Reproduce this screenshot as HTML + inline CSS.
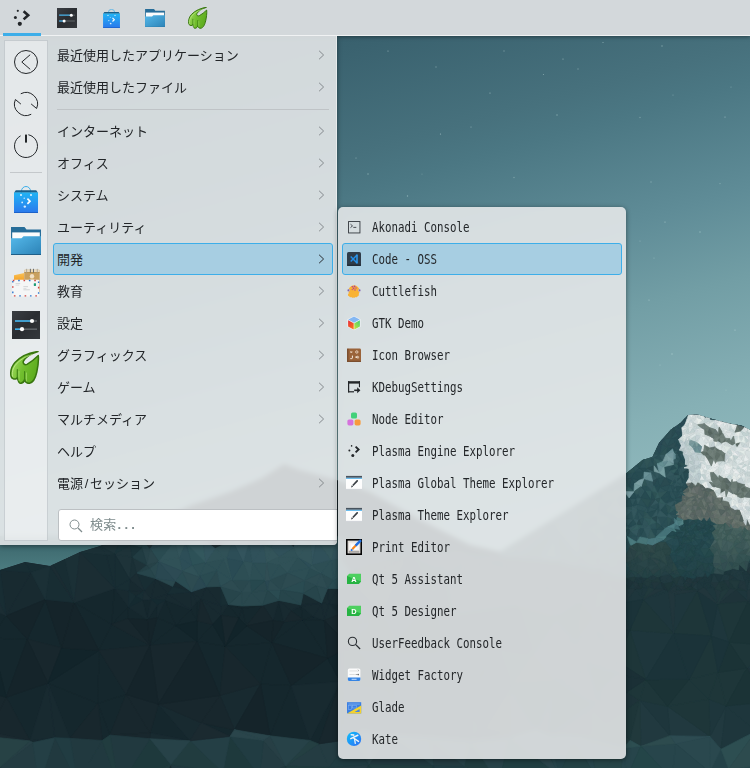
<!DOCTYPE html>
<html lang="ja">
<head>
<meta charset="utf-8">
<title>Plasma menu</title>
<style>
html,body{margin:0;padding:0;}
body{width:750px;height:768px;overflow:hidden;position:relative;background:#1c363c;
 font-family:"Liberation Sans","Noto Sans CJK JP",sans-serif;color:#232629;}
#wall{position:absolute;left:0;top:0;width:750px;height:768px;}
#panel{position:absolute;left:0;top:0;width:750px;height:35px;background:#d3d8db;border-bottom:1px solid #f0f2f3;box-shadow:0 1px 4px rgba(0,0,0,.4);}
#panel .ul{position:absolute;left:3px;top:33px;width:38px;height:3px;background:#3daee9;}
#panel svg{position:absolute;}
#menuwrap{position:absolute;left:0;top:36px;width:370px;height:540px;overflow:hidden;}
#menu{position:absolute;left:0;top:0;width:337px;height:509px;border-radius:0 0 4px 0;
 background:rgba(230,232,234,.89);-webkit-backdrop-filter:blur(2.5px);backdrop-filter:blur(2.5px);
 box-shadow:0 1px 5px rgba(0,0,0,.45),inset -1px 0 0 rgba(255,255,255,.45);overflow:hidden;}
#side{position:absolute;left:4px;top:4px;width:42px;height:499px;background:rgba(255,255,255,.4);border:1px solid rgba(120,130,136,.28);}
#side svg{position:absolute;}
#side .sep{position:absolute;left:5px;top:131px;width:32px;height:1px;background:#c4c8cb;}
.it{position:absolute;left:53px;width:280px;height:32px;box-sizing:border-box;font-size:13px;line-height:34px;padding-left:4px;white-space:nowrap;}
.it.sel{background:#a7cee2;border:1px solid #3daee9;border-radius:3px;padding-left:3px;line-height:32px;}
.it svg{position:absolute;right:8px;top:11px;}
.it.sel svg{right:7px;top:10px;}
#menu .hsep{position:absolute;left:57px;top:73px;width:272px;height:1px;background:#bfc3c6;}
#search{position:absolute;left:58px;top:473px;width:290px;height:32px;background:#fff;border:1px solid #bcc0c3;border-radius:3px;box-sizing:border-box;font-size:13px;line-height:30px;color:#7f8c8d;}
#search span{position:absolute;left:31px;top:0;letter-spacing:.3px}
#search i{font-style:normal;letter-spacing:3.2px;margin-left:1px;font-weight:700}
.sl{display:inline-block;width:7px;text-align:center}
#search svg{position:absolute;left:9px;top:8px;}
#sub{position:absolute;left:338px;top:207px;width:288px;height:552px;border-radius:5px;
 background:rgba(230,232,234,.89);-webkit-backdrop-filter:blur(2.5px);backdrop-filter:blur(2.5px);
 box-shadow:0 1px 5px rgba(0,0,0,.45);}
.si{position:absolute;left:4px;width:280px;height:32px;box-sizing:border-box;}
.si.sel{background:#a7cee2;border:1px solid #3daee9;border-radius:3px;}
.si .t{position:absolute;left:30px;top:0;line-height:33px;font-family:"DejaVu Sans Mono","Liberation Mono",monospace;font-size:13.5px;white-space:nowrap;transform:scaleX(.8);transform-origin:0 50%;}
.si.sel .t{left:29px;top:-1px;}
.si svg{position:absolute;left:4px;top:8px;}
.si.sel svg{left:3px;top:7px;}
</style>
</head>
<body>
<svg id="wall" viewBox="0 0 750 768">
<defs>
<linearGradient id="sky" gradientUnits="userSpaceOnUse" x1="0" y1="0" x2="189" y2="672">
<stop offset="0" stop-color="#2d525f"/><stop offset=".2014" stop-color="#3a626f"/><stop offset=".3529" stop-color="#47717d"/><stop offset=".4" stop-color="#4b7783"/><stop offset=".5514" stop-color="#5f8c97"/><stop offset=".67" stop-color="#729ea5"/><stop offset=".787" stop-color="#81abb1"/><stop offset=".8286" stop-color="#86b0b5"/><stop offset="1" stop-color="#96bec1"/>
</linearGradient>
<linearGradient id="low" x1="0" y1="0" x2="0" y2="1">
<stop offset="0" stop-color="#21404600"/><stop offset="1" stop-color="#152b31"/>
</linearGradient>
</defs>
<rect width="750" height="768" fill="url(#sky)"/>
<linearGradient id="lsk" gradientUnits="userSpaceOnUse" x1="0" y1="540" x2="0" y2="570"><stop offset="0" stop-color="#3b666c"/><stop offset="1" stop-color="#4c7c80"/></linearGradient>
<path d="M0 536H130L112 540 100 546 80 552 50 566 25 562 0 570z" fill="url(#lsk)"/>
<linearGradient id="dm" gradientUnits="userSpaceOnUse" x1="0" y1="470" x2="0" y2="560"><stop offset="0" stop-color="#56797e"/><stop offset="1" stop-color="#2a4a50"/></linearGradient>
<path d="M60 575L100 546 150 525 190 506 230 492 262 478 284 464 300 470 337 480 370 492 420 520 470 545 500 552V580z" fill="url(#dm)"/>
<path d="M236 490L262 478 284 464 300 470 337 480 370 492 398 508 372 503 352 496 330 499 312 490 294 495 276 487 260 497 244 494z" fill="#e9f0f1"/>
<path d="M276 487L284 464 300 470 312 490 294 495z" fill="#fbfcfc"/>
<path d="M190 506L230 492 244 494 260 497 240 512 210 520z" fill="#3f6267"/>
<path d="M330 499L352 496 372 503 398 508 420 520 380 524 350 515z" fill="#7d9ba0"/>
<path d="M500 552L560 515 600 490 626 473.5V585H500z" fill="#2d5056"/>
<clipPath id="sil"><path d="M-60.0 570.0 0.0 570.0 25.0 562.0 50.0 566.0 80.0 552.0 100.0 546.0 150.0 525.0 190.0 506.0 230.0 492.0 262.0 478.0 284.0 464.0 300.0 470.0 337.0 480.0 370.0 492.0 420.0 520.0 470.0 545.0 500.0 552.0 560.0 515.0 600.0 490.0 618.0 480.0 626.0 473.5 642.5 460.0 652.4 457.0 659.0 443.0 670.6 429.7 680.5 423.0 688.0 415.0 697.0 414.5 718.5 420.7 731.8 424.0 741.7 425.6 752.0 431.0 810.0 431.0 810.0 800.0 -60.0 800.0z"/></clipPath>
<g clip-path="url(#sil)" stroke-width=".7" stroke-linejoin="round">
<rect x="0" y="400" width="750" height="368" fill="#18292f"/>
<path fill="#15272d" stroke="#15272d" d="M-37.4 686.6L-57.8 727.9 -66.6 640.4zM-57.8 727.9L-37.4 686.6 -10.3 732zM468.7 700L437.4 650 495.6 647zM-8.7 638.2L-37.4 686.6 -66.6 640.4zM6.3 697.3L-8.7 638.2 27.3 639.2zM30 740.9L6.3 697.3 47.9 683.1zM45.3 599.6L61.5 647.9 27.3 639.2zM-31.3 599.6L-8.7 638.2 -66.6 640.4zM434.4 601.5L451.7 616.3 437.4 650zM434.4 601.5L394.3 648.8 382.3 619.1zM-8.7 638.2L6.2 615.8 27.3 639.2zM-31.3 599.6L6.2 615.8 -8.7 638.2zM99 650.5L74.3 602.5 111.7 624.4zM149.9 645.4L99 650.5 111.7 624.4zM47.9 683.1L99 650.5 97.9 703.5zM74.3 602.5L114.5 588.5 111.7 624.4zM197 641.4L212.7 624.4 225.3 646.3zM220 695.4L197 641.4 225.3 646.3zM197 641.4L149.9 645.4 175.8 625.5zM468.7 700L413.2 724.3 420.6 682zM390 691L394.3 648.8 420.6 682zM413.2 724.3L390 691 420.6 682zM355.9 623L349.7 609.8 382.3 619.1zM390 691L349.1 646.7 394.3 648.8zM349.1 646.7L355.9 623 382.3 619.1zM361.5 729.9L390 691 390 735.2zM110 735L102.2 740.4 97.9 703.5zM70 738.3L47.9 683.1 97.9 703.5zM230 736.4L201 722.8 234.4 729.7zM221 615.4L228.4 604.6 238.8 617.9zM197 641.4L197.5 621 212.7 624.4zM190.5 609.7L197.5 621 175.8 625.5zM246.6 625.8L271.9 642.6 225.3 646.3zM283.9 622L302.6 619.6 271.9 642.6zM509.3 685.5L468.7 700 495.6 647zM324.4 620.3L302.6 619.6 313.5 616.7zM270 735.8L291.2 685.6 310 740.4zM126.1 694.4L110 735 97.9 703.5zM99 650.5L126.1 694.4 97.9 703.5zM157.6 604.5L157 617.8 147.4 619.7zM149.9 645.4L157 617.8 175.8 625.5zM196.5 602L197.5 621 190.5 609.7zM197.5 621L196.5 602 201 599.2zM242 608.6L246.6 625.8 238.8 617.9zM228.4 604.6L242 608.6 238.8 617.9zM242 608.6L228.4 604.6 242.3 606zM262.7 605.2L242 608.6 242.3 606zM242 608.6L262.7 605.2 246.6 625.8zM339.3 614.4L349.7 609.8 355.9 623zM339.3 614.4L328.8 603.8 340.6 604.8zM324.4 620.3L327.6 658.3 302.6 619.6zM302.6 619.6L327.6 658.3 271.9 642.6zM291.2 685.6L327.6 658.3 340.4 681.7zM270 735.8L260.6 684.1 291.2 685.6zM291.2 685.6L260.6 684.1 271.9 642.6zM271.9 642.6L260.6 684.1 225.3 646.3zM150.1 732.9L158.4 704.3 190 740.8zM128 618.6L128.6 607.2 147.4 619.7zM114.5 588.5L128.6 607.2 111.7 624.4zM128.6 607.2L128 618.6 111.7 624.4zM165.2 600.2L190.5 609.7 175.8 625.5zM157 617.8L165.2 600.2 175.8 625.5zM318.6 743.9L310 740.4 340.4 681.7zM142.4 600L151 599.3 147.4 619.7zM291.2 610.9L301 606.2 302.6 619.6zM302.6 619.6L301 606.2 313.5 616.7zM349.7 609.8L352.4 586.8 382.3 619.1zM278.8 600.4L283.9 622 273.1 620.4z"/>
<path fill="#243c42" stroke="#243c42" d="M-57.8 727.9L-46.4 787.8 -60 827.9zM-46.4 787.8L-10 736.7 -0.4 767.4zM32.9 742.5L38.9 786.1 -0.4 767.4zM433.3 765.7L431.7 739.9 464.2 766.4zM38.9 786.1L77.6 783 74.3 827.4zM349 810.7L329.2 767.5 368.7 764.6zM263.3 740.4L285.7 766.1 259.8 776.6zM318.6 743.9L329.2 767.5 285.7 766.1zM329.2 767.5L318.6 743.9 350 739.4z"/>
<path fill="#30545a" stroke="#30545a" d="M818.8 597.1L782.7 410.2 782.2 403.9zM506.6 446.3L515.7 477.2 496.5 486.6zM581.1 528L555.5 529.5 571.3 475.3zM581.1 528L597.7 499.7 597.4 509.1zM581.1 528L579.3 558.4 555.5 529.5zM661.3 525.8L667.9 526.8 664.4 529.2zM761.8 539.5L759 534.4 764.5 535.3zM597.4 471.9L595.3 484.6 571.3 475.3zM605 490.9L602 496.9 601.6 492.2zM625 485.3L618.2 480.5 625.8 479.2zM598.2 517.1L602.2 525.5 596.1 522.4zM646.9 512.9L644.2 511.6 647.4 507.5zM632.5 506.3L637.9 504.2 637.2 509.8zM639.4 528.6L641.9 524.9 644 529zM641.9 524.9L649.5 524.8 644 529zM766.8 538.2L766.5 537 769.4 538.8zM777.9 537L782.2 534.4 781.2 539.8zM754.8 511.8L758.8 515.9 752.7 515.8zM750.9 510.6L754.2 506.6 754.8 511.8zM775.8 532.3L771.7 529.8 775.8 530.4zM776.5 505.4L781.2 511.7 775.5 511zM783.3 460.2L781.2 456.8 785.7 455.2zM600.1 480.3L603.9 487.3 595.3 484.6zM615 498.7L614.1 503.5 610.1 500.6zM618.6 474.1L614.9 465.6 620.5 464.5zM624.6 491.5L625 485.3 628.4 486.9zM645.2 491.1L637.6 494.2 641.1 486.4zM637.6 494.2L645.2 491.1 640.8 498.1zM614.6 457.3L618.6 453.2 623.1 461.1zM610.1 460.2L608.2 466.4 601 459zM641.9 524.9L643.8 517.7 649.5 524.8zM761.8 539.5L756.6 538.2 759 534.4zM777.9 537L778.1 530.6 782.2 534.4zM778.1 530.6L780.6 525.7 782.8 528.3zM758.8 515.9L756.5 520.4 752.7 515.8zM781.2 511.7L776.5 515.9 775.5 511zM769.6 533.8L769.7 529.1 771.7 529.8zM781.2 511.7L781.7 505.3 785.2 509.6zM765.7 484.9L771.2 482.3 767.7 486.8zM626.4 451.3L632.1 455.5 630.7 458.8zM653.9 458.5L652.1 453.5 659.6 454.5zM653.9 458.5L650.6 458.6 652.1 453.5zM758.2 482.3L754.3 480.2 757.8 477.2zM600.1 480.3L605.2 476.8 603.9 487.3zM615.2 511L614.1 503.5 618.1 502.8zM614.1 503.5L615.2 511 608.1 506.8zM623 536.5L615.4 533.2 619.7 530.2zM633.8 519.3L627.5 526.6 624 518.6zM600.6 544.9L598 539.4 604.3 538zM679.7 514.8L677 517.3 676.1 514.5zM674.3 518.4L674.9 523.6 671.5 520.1zM637 536.1L640 536.9 636.6 542.2zM760.9 510L761.9 516.4 758.8 515.9zM758.2 482.3L758.8 486.4 755 487zM779.4 501.9L781.7 505.3 776.5 505.4zM778.2 451L780.2 451.4 781.2 456.8zM751.8 481.7L754.3 480.2 755 487zM615.2 511L609.2 513.1 608.1 506.8zM623 536.5L628.3 528.6 627.4 536.5zM621.3 525.8L627.5 526.6 619.7 530.2zM677.1 500.2L675.1 500.7 675.8 498.1zM682.3 501.3L677.1 500.2 682.2 497.9zM754.2 506.6L757.9 506.1 754.8 511.8zM757.9 506.1L760.9 510 754.8 511.8zM766.3 505.3L771.8 505.6 769.1 510.3zM757.2 497.7L763.7 495.8 760.5 500.8zM771.6 492.1L774.2 493.4 773 496.5zM757.8 477.2L761.1 473.3 763.5 476.9zM775 455.2L772 455.2 772 451.6zM778.3 466.5L776.4 464.1 783.3 460.2zM764.6 466.5L763.4 470.9 758 469.3zM760.9 455.7L763.5 450.3 764.3 456.3zM758.5 449.7L760.9 455.7 756.9 454.2zM620.8 516.2L615.2 511 620.9 511.5zM682.3 495.9L679.6 493.2 683.2 493.3zM669.8 491.9L673 491.3 670.2 497zM675.3 486.4L677.5 491.7 673 491.3zM758.6 533.6L755.7 536.1 757.8 532.5zM759 534.4L758.6 533.6 764.5 535.3zM766.6 502.8L766.3 505.3 760.5 500.8zM766.3 505.3L764.7 507.6 760.5 500.8zM757.9 506.1L764.7 507.6 760.9 510zM769.3 519.6L766.5 518.5 766.4 517zM755.2 491L751.3 489.1 755 487zM774.2 469L773.5 474.6 769.3 470.9zM621.3 525.8L621.1 520.4 624 518.6zM683.2 454.2L680.9 459.2 679.6 453.1zM674.6 474.9L676.9 478.9 675 478.8zM674.6 474.9L672.1 481.3 665.3 477.2zM674 472.9L674.6 474.9 669.9 471.1zM761.9 516.4L765.3 510.5 766.4 517zM684.2 467.8L681.8 466.5 685.4 464.2zM684.2 467.8L685.4 464.2 688.6 466zM680.9 459.2L675.4 458.5 677.8 453.9zM672.6 483.1L674 486 670.3 484.6zM683.4 472.3L684.2 467.8 688.9 468.5zM673.5 463.5L673.5 464.5 668.1 460.5zM676.9 482L681.9 486.6 675.3 486.4zM680.9 468.7L677.3 468.8 679.6 467.3zM681.8 466.5L680.9 468.7 679.6 467.3zM680.7 474.7L680.9 468.7 683.4 472.3zM680.7 474.7L685 479 682.6 479.1zM680.7 474.7L683.4 472.3 685 479z"/>
<path fill="#1e393c" stroke="#1e393c" d="M790.5 735L809.6 709.7 827.8 730.4zM222.9 772.4L230 736.4 259.8 776.6zM170.8 764.5L118.8 787.6 150 738.7zM412 813.4L349 810.7 368.7 764.6z"/>
<path fill="#182a30" stroke="#182a30" d="M437.4 650L468.7 700 420.6 682zM437.4 650L451.7 616.3 495.6 647zM-10 736.7L-57.8 727.9 -10.3 732zM451.7 616.3L516.8 607 495.6 647zM410 554.2L434.4 601.5 382.3 619.1zM470 741L430 737.5 468.7 700zM31.1 572.6L6.2 615.8 0 570zM6.2 615.8L31.1 572.6 45.3 599.6zM516.8 607L530.8 652.4 495.6 647zM390 735.2L413.2 724.3 430 737.5zM430 737.5L413.2 724.3 468.7 700zM390 691L361.5 729.9 340.4 681.7zM310 740.4L291.2 685.6 340.4 681.7zM158.4 704.3L201 722.8 190 740.8zM201 599.2L221 615.4 212.7 624.4zM201 599.2L191.5 591.8 206.1 587zM434.4 601.5L443.8 573.5 451.7 616.3zM481.7 730.5L510 737.5 470 741zM509.3 685.5L481.7 730.5 468.7 700zM70 738.3L54.9 737.7 47.9 683.1zM54.9 737.7L30 740.9 47.9 683.1zM30 740.9L54.9 737.7 32.9 742.5zM167.7 594.2L191.5 591.8 190.5 609.7zM220.5 605.8L228.4 604.6 221 615.4zM201 599.2L220.5 605.8 221 615.4zM220.6 586.4L220.5 605.8 206.1 587zM220.5 605.8L201 599.2 206.1 587zM191.5 591.8L196.5 602 190.5 609.7zM201 599.2L196.5 602 191.5 591.8zM349.7 609.8L339.3 614.4 340.6 604.8zM339.3 614.4L324.4 620.3 328.8 603.8zM220 695.4L260.6 684.1 234.4 729.7zM150 738.7L150.1 732.9 190 740.8zM129.1 590.8L128.6 607.2 114.5 588.5zM151 599.3L157.6 604.5 147.4 619.7zM165.2 600.2L167.7 594.2 190.5 609.7zM165.2 600.2L157 617.8 157.6 604.5zM165.2 600.2L151 599.3 167.7 594.2zM191.5 591.8L172.7 586.5 175.4 580.9zM128.6 607.2L142.4 600 147.4 619.7zM144.2 590.9L129.1 590.8 129.7 579.3zM129.1 590.8L144.2 590.9 135.8 596.5zM328.8 603.8L337.6 588.7 340.6 604.8zM352.4 586.8L349.7 609.8 340.6 604.8zM337.6 588.7L352.4 586.8 340.6 604.8zM155.8 578.6L172.7 586.5 167.7 594.2zM151 599.3L155.8 578.6 167.7 594.2zM144.2 590.9L155.8 578.6 151 599.3zM262.7 605.2L278.8 600.4 273.1 620.4zM278.8 600.4L291.2 610.9 283.9 622zM301 606.2L321.6 603.1 313.5 616.7zM321.6 603.1L324.4 620.3 313.5 616.7zM324.4 620.3L321.6 603.1 328.8 603.8zM300.8 604.9L301 606.2 291.2 610.9zM278.8 600.4L300.8 604.9 291.2 610.9zM321.6 603.1L300.8 604.9 303.3 593.4zM300.8 604.9L321.6 603.1 301 606.2zM327.6 588.4L337.6 588.7 328.8 603.8zM321.6 603.1L327.6 588.4 328.8 603.8z"/>
<path fill="#18272d" stroke="#18272d" d="M-37.4 686.6L6.3 697.3 -10.3 732zM6.3 697.3L30 740.9 -10.3 732zM61.5 647.9L47.9 683.1 27.3 639.2zM394.3 648.8L437.4 650 420.6 682zM221 615.4L238.8 617.9 225.3 646.3zM390 691L413.2 724.3 390 735.2zM102.2 740.4L70 738.3 97.9 703.5zM197 641.4L158.4 704.3 149.9 645.4zM201 722.8L220 695.4 234.4 729.7zM201 722.8L158.4 704.3 220 695.4zM128 618.6L149.9 645.4 111.7 624.4zM197.5 621L201 599.2 212.7 624.4zM361.5 729.9L350 739.4 340.4 681.7zM126.1 694.4L99 650.5 149.9 645.4zM246.6 625.8L262.7 605.2 273.1 620.4zM324.4 620.3L339.3 614.4 349.1 646.7zM260.6 684.1L220 695.4 225.3 646.3zM150.1 732.9L126.1 694.4 158.4 704.3zM110 735L150.1 732.9 150 738.7zM126.1 694.4L150.1 732.9 110 735zM283.9 622L291.2 610.9 302.6 619.6zM350 739.4L318.6 743.9 340.4 681.7z"/>
<path fill="#12242a" stroke="#12242a" d="M-8.7 638.2L6.3 697.3 -37.4 686.6zM394.3 648.8L434.4 601.5 437.4 650zM61.5 647.9L99 650.5 47.9 683.1zM212.7 624.4L221 615.4 225.3 646.3zM197.5 621L197 641.4 175.8 625.5zM238.8 617.9L246.6 625.8 225.3 646.3zM327.6 658.3L349.1 646.7 340.4 681.7z"/>
<path fill="#15242a" stroke="#15242a" d="M47.9 683.1L6.3 697.3 27.3 639.2zM61.5 647.9L45.3 599.6 74.3 602.5zM6.2 615.8L45.3 599.6 27.3 639.2zM99 650.5L61.5 647.9 74.3 602.5zM349.1 646.7L390 691 340.4 681.7zM394.3 648.8L349.1 646.7 382.3 619.1zM158.4 704.3L197 641.4 220 695.4zM128 618.6L147.4 619.7 149.9 645.4zM246.6 625.8L273.1 620.4 271.9 642.6zM273.1 620.4L283.9 622 271.9 642.6zM158.4 704.3L126.1 694.4 149.9 645.4zM147.4 619.7L157 617.8 149.9 645.4zM349.1 646.7L339.3 614.4 355.9 623zM327.6 658.3L291.2 685.6 271.9 642.6zM327.6 658.3L324.4 620.3 349.1 646.7zM260.6 684.1L270 735.8 234.4 729.7z"/>
<path fill="#21393f" stroke="#21393f" d="M-10.9 820.8L-46.4 787.8 -0.4 767.4zM226.4 822.1L222.9 772.4 259.8 776.6zM390 735.2L433.3 765.7 368.7 764.6zM790.7 565L796.6 562 818.8 597.1zM285.7 766.1L271.8 824.9 259.8 776.6zM118.8 787.6L110 735 150 738.7zM38.9 786.1L20.4 826.4 -0.4 767.4zM191.1 826.4L170.8 764.5 222.9 772.4zM676.2 585.3L680.7 575.5 684.1 583.2zM748.8 581.6L756 587.5 746.9 590.7zM721 749.2L710 736.4 726.1 706.1zM112.5 807.9L77.6 783 118.8 787.6zM118.8 787.6L77.6 783 102.2 740.4zM77.6 783L70 738.3 102.2 740.4zM54.9 737.7L77.6 783 38.9 786.1zM660.5 582.3L660.3 576 664 584zM767.7 764.9L755.7 731.2 790.5 735zM670.1 574.1L673.3 581.7 664 584zM660.3 576L670.1 574.1 664 584zM755.1 577.7L759.8 569.2 762.4 575.4zM749.9 574.1L750.6 570.3 755.1 577.7zM685.7 580.5L690.8 584.6 684.1 583.2zM756 587.5L763.2 586.4 747.9 601.5zM782.8 569.3L775 568.1 777.9 561.6zM769.8 580.7L772.5 577.8 776.4 584zM670 735.7L640.8 746.3 640 700.4zM670 735.7L667.5 706.3 710 736.4zM673.3 581.7L674 577.8 676.2 585.3zM729.1 580.5L724.4 580.7 729.9 574.8zM695.8 576.1L703.3 577.2 695.4 578.3zM734 577.3L742.5 573.3 739.6 580.9zM739.6 580.9L742.5 573.3 744.7 581zM759.9 581.5L763.2 586.4 756 587.5zM759.9 581.5L755.1 577.7 762.4 575.4zM652.9 574.6L658 577.5 651.5 581.3zM647.5 577.8L652.9 574.6 651.5 581.3zM765.1 568.9L769.9 567.5 769.5 576.4zM761.3 562L765.1 568.9 759.8 569.2zM684 587L676.2 585.3 684.1 583.2zM715.2 588.8L710.8 586.3 710.5 582.5zM692.1 587.5L697.3 581.6 697.6 590.7zM746.3 570.9L748.5 561.6 752 565zM759.9 581.5L763.2 582.4 763.2 586.4zM763.2 586.4L763.2 582.4 766.4 587zM769.5 576.4L763.2 582.4 762.4 575.4zM621.7 580.8L623.1 576.9 623.6 581zM754.8 564.9L759.8 569.2 750.6 570.3zM705 571.1L707.5 577.3 703.3 577.2zM713.8 573.1L719.2 582.5 710.5 582.5zM719.2 582.5L723.2 574.2 724.4 580.7zM724.4 580.7L723.2 574.2 729.9 574.8zM680.7 575.5L683.6 576.5 684.1 583.2zM738.5 569.9L746.3 570.9 742.5 573.3zM738.5 569.9L742.5 573.3 734 577.3zM692.9 582.3L690 578 695.4 578.3zM731.3 569.3L734 577.3 729.9 574.8zM731.3 569.3L738.5 569.9 734 577.3zM738.5 569.9L731.3 569.3 732.1 568.1z"/>
<path fill="#2d5157" stroke="#2d5157" d="M552.3 439.2L506.6 446.3 474.3 430.8zM571.3 475.3L515.7 477.2 552.3 439.2zM555.5 529.5L515.7 477.2 571.3 475.3zM597.7 499.7L581.1 528 571.3 475.3zM520 558L500 556 500.4 523.4zM598.1 446.8L582.6 439.8 599.6 440.4zM767.4 550.8L765.7 557.2 762.7 547.5zM783 544.5L781.2 539.8 784.5 539.2zM781.2 539.8L783 544.5 776.8 541.7zM651.4 439.6L644.7 439.6 640.9 438.1zM654.7 444.7L648.8 448.1 651.4 439.6zM617.5 448.6L609.2 447.9 614 438.3zM605 490.9L603.9 487.3 609.5 485.5zM555.5 529.5L560 562 540 560zM596.1 522.4L598 539.4 581.1 528zM655.5 537.4L656.6 529.2 664.4 529.2zM773.2 549.2L777.7 554 768.6 555.8zM658.3 441.3L654.7 444.7 651.4 439.6zM676.4 405.4L474.3 430.8 348.9 428zM676.4 405.4L552.3 439.2 474.3 430.8zM676.4 405.4L582.6 439.8 552.3 439.2zM676.4 405.4L614 438.3 582.6 439.8zM738.8 413.2L743.1 419.4 736.9 419.2zM604.4 453.2L609.2 447.9 613.8 451.6zM610.1 460.2L604.4 453.2 613.8 451.6zM628.8 439.4L626.4 438.5 640.9 438.1zM623.7 448.5L617.8 437.8 626.4 438.5zM676.4 405.4L617.8 437.8 614 438.3zM617.8 437.8L676.4 405.4 672 411zM617.8 483.6L613.5 492.3 609.5 485.5zM613.5 492.3L617.8 483.6 621 493.1zM598.2 517.1L581.1 528 597.4 509.1zM604.3 538L609 536.2 607.6 546.3zM602.2 525.5L601.8 531.4 596.1 522.4zM601.8 531.4L598 539.4 596.1 522.4zM646.9 512.9L650 506.4 657.2 509.7zM656.6 529.2L649.5 524.8 656.2 522.5zM644.2 511.6L637.9 504.2 647.4 507.5zM637.9 504.2L644.2 511.6 637.2 509.8zM632.5 506.3L631.5 510.3 623.8 506.2zM764.7 542.8L766.8 538.2 769.4 538.8zM773.8 534.2L777.9 537 775.1 539.9zM774.1 516.5L769.1 510.3 775.5 511zM771.7 529.8L775.8 532.3 773.8 534.2zM631.9 463.8L639.6 468.1 634.5 472zM639.6 468.1L644.1 459.5 646.8 468.4zM673.3 426.8L664 439.2 651.4 439.6zM758 469.3L756.3 474 753.7 469.3zM780.8 410.7L775.6 414.4 773.5 409.1zM780.8 410.7L773.5 409.1 777.9 403.6zM783 414.7L780.8 410.7 782.7 410.2zM782.7 410.2L780.8 410.7 782.2 403.9zM600.8 447.1L605.3 441.9 609.2 447.9zM633.9 491.8L637.6 494.2 636.5 498.7zM601.2 465.8L608.2 466.4 602.5 470.2zM643.8 517.7L638.7 520.1 637.2 509.8zM643.9 478.7L639.3 480.2 644.1 472.1zM676.5 510.6L676.1 514.5 674.5 509.2zM676.1 514.5L674.3 518.4 668.3 513.7zM667.4 517L674.3 518.4 671.5 520.1zM674.2 538.3L665.1 542.1 666.4 536.3zM650.8 529.4L649.5 524.8 656.6 529.2zM756.5 520.4L751.8 519.5 752.7 515.8zM753.1 500.1L754.2 506.6 750.5 506.9zM783.5 516.2L776.5 515.9 781.2 511.7zM776.7 526L780.6 520.3 780.6 525.7zM766.5 537L769.6 533.8 769.4 538.8zM761.4 518.9L756.5 520.4 758.8 515.9zM782.3 495.6L777.7 495.8 780.7 493.1zM771.2 482.3L773.6 487.9 767.7 486.8zM644 452.8L640.5 446.8 648.8 448.1zM640.5 446.8L644 452.8 638.1 454.4zM671 438.3L667.3 447.1 664 439.2zM678.6 439.5L679.9 442.7 676 442.1zM672.5 417.3L673.3 426.8 651.4 439.6zM672 411L672.5 417.3 640.9 438.1zM770.6 411.2L768.5 405.1 773.5 409.1zM775.6 414.4L770.6 411.2 773.5 409.1zM768.5 405.1L774.3 404.2 773.5 409.1zM745.2 412.9L748.4 408.3 751.6 409.8zM763.3 412.9L765 409.3 768.1 412.7zM754.7 403.7L756.1 409.2 751.6 409.8zM759.7 407.9L756.1 409.2 758.2 403.8zM263.7 545L279.5 533 270.9 547.8zM605.2 476.8L600.1 480.3 597.4 471.9zM632.5 506.3L629.1 497.9 636.5 498.7zM615.4 533.2L623 536.5 614.1 539.1zM611 524.5L608.2 516.3 611.2 516.4zM602.2 525.5L611 524.5 605.8 530.2zM597.2 551.3L602.1 549.3 598.8 558.6zM602.1 549.3L600.6 544.9 607.6 546.3zM674 448L673.4 452.1 672.6 448.9zM675.1 500.7L670.2 497 675.8 498.1zM670.2 497L673 491.3 675.8 498.1zM683.1 491.6L688 492.1 683.2 493.3zM677 517.3L674.3 518.4 676.1 514.5zM757.3 544.5L756.6 538.2 761.8 539.5zM757.3 544.5L761.8 539.5 764.7 542.8zM761.9 516.4L761.4 518.9 758.8 515.9zM780.5 470.2L778.2 470.8 778.3 466.5zM775.5 436.8L777.3 442.7 774.1 443zM769.9 445.5L774.1 446.3 772 451.6zM774.1 446.3L778.2 451 772 451.6zM765.7 447.4L763.5 450.3 762.7 446zM633.6 448.3L628.2 445.7 632.7 441.6zM679.6 453.1L679.5 450.1 683.3 451.4zM675.7 431.8L673 438.6 671 438.3zM677.5 411.3L679 406.2 683.5 410.2zM750.1 514.3L754.8 511.8 752.7 515.8zM783.8 429L784.7 447.9 783.4 437.8zM780.2 418.6L783.6 420.1 783.4 422.6zM783.8 429L783.6 420.1 785.7 455.2zM764.8 406L765 409.3 759.7 407.9zM751.6 463.5L756.2 463.4 753.7 469.3zM703.7 414.8L702.8 408.2 705.8 410.8zM743.1 419.4L740.6 421.7 736.9 419.2zM734.2 418.8L728.3 419.9 732.6 415.2zM734.2 418.8L736.8 413.2 736.9 419.2zM185.6 542.4L205.6 562.5 192.2 565.6zM609.2 513.1L615.2 511 611.2 516.4zM618.2 480.5L622.5 474.2 625.8 479.2zM657.4 478.5L659.3 472.9 665.3 477.2zM682.2 497.9L677.1 500.2 675.8 498.1zM760.5 500.8L757.9 506.1 756.1 500.2zM766.3 524L772 524.7 769.7 529.1zM769.7 529.1L772 524.7 771.7 529.8zM755.2 491L758.8 486.4 760.8 492zM760.8 492L761.8 489.4 765 491.5zM763.7 495.8L757.2 497.7 760.8 492zM777.7 495.8L776.5 500.4 773 496.5zM773.6 487.9L771.6 492.1 767.7 486.8zM775.6 483.1L771.1 480 776.8 478.9zM784.7 447.9L783.2 441.1 783.4 437.8zM783.2 441.1L779.7 437.8 783.4 437.8zM778.6 447.3L780.2 451.4 778.2 451zM783.2 441.1L778.6 447.3 777.3 442.7zM774.2 469L776.4 464.1 778.3 466.5zM766.5 449.7L765.7 447.4 769.9 445.5zM677.3 445.2L679.9 442.7 681.4 445.5zM676.9 450.8L677.3 445.2 679.5 450.1zM677.7 428.3L675.7 431.8 673.3 426.8zM675.7 431.8L678.6 435.9 673 438.6zM678.6 439.5L678.6 435.9 682.6 435.8zM678.6 435.9L682.3 431.5 682.6 435.8zM677.7 428.3L679.9 423.8 681.8 427.7zM678.2 417.2L679.9 423.8 677.6 423.3zM743.6 411.2L748.4 408.3 745.2 412.9zM743.6 411.2L744.2 405.5 748.4 408.3zM780.2 418.6L774.4 417.1 775.6 414.4zM776.9 423L780.2 418.6 783.4 422.6zM744.2 423.9L751.1 422.2 751.3 426.4zM753.7 412.7L752.1 420 748.2 415.9zM753.5 458.6L756.9 454.2 757.3 458.7zM751.6 463.5L753.5 458.6 756.2 463.4zM760 443.2L754.1 441.7 755.1 438.3zM730.5 411.2L732.6 415.2 725.7 414.8zM693.6 414.6L688.8 413.7 691.1 411.3zM712.6 406.1L715.6 410.3 709.7 410.4zM713 414.6L717.6 413.9 715.7 420.4zM717.6 413.9L720.6 419.8 715.7 420.4zM720.6 419.8L717.6 413.9 721.1 414.3zM721.1 414.3L717.6 413.9 718.5 410.3zM717.6 413.9L715.6 410.3 718.5 410.3zM715.6 410.3L717.6 413.9 713 414.6zM615.2 511L620.8 516.2 611.2 516.4zM666.5 491.5L657.4 492.8 660 486.9zM654.2 471.3L657.4 478.5 650.7 473zM663.9 466.7L669.9 471.1 665.3 477.2zM676.6 502.7L677.1 500.2 679.2 502.8zM679.6 493.2L682.3 495.9 675.8 498.1zM758.6 533.6L762.3 528.6 763.1 528.9zM755.7 536.1L752.6 538.9 754.2 532.7zM753.3 528L752.8 525.6 756.7 528.7zM763.7 495.8L766.6 502.8 760.5 500.8zM774.1 516.5L769.3 519.6 766.4 517zM751.3 489.1L751.8 481.7 755 487zM773.5 474.6L778.2 470.8 778.4 475.4zM764.6 466.5L769.6 461.9 771 466.3zM776.4 464.1L769.6 461.9 771.4 458.5zM679.8 414.6L677.5 411.3 683.5 410.2zM674.6 415.8L679.8 414.6 678.2 417.2zM688.8 413.7L688.1 411.3 691.1 411.3zM688.1 411.3L688.8 413.7 685.1 414.2zM739.6 408.3L743.6 411.2 738.8 413.2zM751.1 422.2L755.3 424.7 751.3 426.4zM770.6 411.2L773.4 415.7 768.1 412.7zM773.4 415.7L769 417.8 768.1 412.7zM761.3 426.9L757.1 427.6 757.4 424.8zM757.1 427.6L761.3 426.9 760.4 432.2zM761.3 426.9L764.9 431.5 760.4 432.2zM764.9 431.5L761.3 426.9 764 426.6zM763.7 424.6L761.3 426.9 757.4 424.8zM764 426.6L763.7 424.6 768.6 424zM763.3 412.9L758.8 414.9 759.7 407.9zM756.6 447.8L760 443.2 762.7 446zM758.5 449.7L756.6 447.8 762.7 446zM754.1 441.7L756.6 447.8 752 445.6zM737.3 425.1L740.6 421.7 744.2 423.9zM734.2 418.8L737.3 425.1 730.5 423.7zM723.6 420L728.3 419.9 726.4 422.6zM723.6 420L723.2 422.6 720.6 419.8zM669.8 491.9L670.3 484.6 673 491.3zM670.3 484.6L669.8 491.9 666.5 491.5zM766.4 438.6L764.7 442.5 762.2 436.3zM764.7 442.5L765.7 447.4 762.7 446zM765.7 447.4L764.7 442.5 769.9 445.5zM764.7 442.5L768.1 440.7 769.9 445.5zM764.1 461.2L760.9 455.7 764.3 456.3zM755.3 424.7L755.6 420.2 757.4 424.8zM753.7 412.7L755.6 420.2 752.1 420zM758.8 414.9L755.6 420.2 753.7 412.7zM762.8 417.4L763.7 424.6 757.4 424.8zM777.8 432L779.7 437.8 775.5 436.8zM771.4 431.2L777.8 432 775.5 436.8zM654.1 465.8L657.2 463.9 659.3 472.9zM650.6 458.6L654.1 465.8 646.8 468.4zM680.9 459.2L685.5 460 685.4 464.2zM770.8 426.7L773.9 424.3 774.2 428.3zM770.8 426.7L771.4 431.2 767.1 432.6zM770.8 426.7L764 426.6 768.6 424zM764.9 431.5L770.8 426.7 767.1 432.6zM778.7 427.9L777.8 432 774.2 428.3zM773.9 424.3L778.7 427.9 774.2 428.3zM702.8 408.2L698.7 414.5 696.1 408.2zM675.4 458.5L680.9 459.2 679.1 461.8zM663.9 466.7L673.5 464.5 669.9 471.1zM674 486L672.6 483.1 676.9 482zM677.6 465L673.5 463.5 679.1 461.8zM673.5 463.5L677.6 465 673.5 464.5zM681.9 486.6L682.4 483.3 686.1 483.1zM677.5 491.7L681.9 486.6 683.1 491.6zM681.6 482.8L681.9 486.6 676.9 482zM677.3 468.8L680.9 468.7 678.8 474.7zM678.8 474.7L680.7 474.7 680.3 478.4z"/>
<path fill="#244248" stroke="#244248" d="M813.9 662.8L818.8 597.1 827.8 730.4zM515.7 826.2L559 775.2 556.6 822.4zM647.8 814.6L742.8 818 556.6 822.4zM709.7 772.2L721 749.2 728.7 769.1zM150.3 549.1L141.9 547.9 140 536zM550 735.2L574.5 741 559 775.2zM685.7 570.6L680.1 564.7 687.9 565.3zM577.5 788.6L574 816.8 556.6 822.4zM574 816.8L602.6 814 556.6 822.4zM718 815.3L742.8 818 647.8 814.6zM690.6 572.5L696.8 568.1 693.5 575.3zM686.3 572L690.5 570.7 690.6 572.5zM607.9 565.5L601.7 568.1 603.8 563.6zM607.9 558.8L607.9 565.5 603.8 563.6zM771.3 565L774.7 561.1 775 568.1zM611.6 568.8L620.7 567.6 617.9 577.4zM695.8 576.1L705 571.1 703.3 577.2zM705 571.1L695.8 576.1 696.8 568.1zM690.6 575.9L686.3 572 690.6 572.5zM702.9 563.3L705 571.1 696.8 568.1zM710.7 573.7L705 571.1 708.5 563.9z"/>
<path fill="#1e363c" stroke="#1e363c" d="M818.8 597.1L813.9 662.8 796.5 643.9zM778.9 607.2L818.8 597.1 796.5 643.9zM717.6 604.2L729 642.2 711.3 636.1zM674.9 594.4L697.6 590.7 673.7 633.5zM735.9 589.8L746.9 590.7 747.9 601.5zM773.9 590.5L778.9 607.2 747.9 601.5zM791.7 681.4L774.8 645.8 796.5 643.9zM791.7 681.4L746.8 668.2 774.8 645.8zM726.1 706.1L710 736.4 708.9 699.1zM180 530.7L175 540.9 160 533.3zM653.9 589.2L648.6 587.3 651.5 581.3zM673.3 581.7L676.2 585.3 668.5 591.4zM748.8 581.6L746.9 590.7 744.7 581zM776.4 584L781.7 580.2 781.7 586.2zM767 701.8L755.7 731.2 726.1 706.1zM755.7 731.2L767 701.8 790.5 735zM620 602.2L625.4 602.7 629.8 630.3zM643.3 599.4L668.5 591.4 673.7 633.5zM648.6 587.3L643.3 599.4 641.4 588.5zM643.3 599.4L663.7 589.1 668.5 591.4zM755.7 731.2L721 749.2 726.1 706.1zM660.5 582.3L663.7 589.1 653.9 589.2zM660.3 576L660.5 582.3 658 577.5zM739.6 580.9L739.3 587.6 735.9 589.8zM681.8 590L676.3 590.5 676.2 585.3zM766.4 587L776.4 584 773.9 590.5zM776.4 584L772.5 577.8 781.7 580.2zM775 568.1L772.5 577.8 769.5 576.4zM635.1 589.1L643.3 599.4 625.4 602.7zM643.3 599.4L635.1 589.1 641.4 588.5zM645.8 679.6L629.8 630.3 673.7 633.5zM520 558L497 560.3 500 556zM643.2 583.2L648.6 587.3 641.4 588.5zM750.6 570.3L759.8 569.2 755.1 577.7zM748.8 581.6L749.9 574.1 755.1 577.7zM749.9 574.1L748.8 581.6 744.7 581zM692.9 582.3L692.1 587.5 690.8 584.6zM729.1 580.5L734 577.3 739.6 580.9zM763.2 586.4L766.4 587 747.9 601.5zM781.7 580.2L782.8 569.3 790.7 565zM772.5 577.8L769.8 580.7 769.5 576.4zM667.5 706.3L670 735.7 640 700.4zM260 532L249 541.9 252.7 530.9zM647.5 577.8L643.2 583.2 642 577.2zM595.1 578.1L576.5 565.8 593 569.5zM742.5 573.3L749.9 574.1 744.7 581zM780.6 574.6L772.5 577.8 775 568.1zM772.5 577.8L780.6 574.6 781.7 580.2zM601.7 568.1L595.5 577.4 593 569.5zM759.8 569.2L765.1 568.9 762.4 575.4zM765.1 568.9L768.1 563.8 769.9 567.5zM769.9 567.5L771.3 565 775 568.1zM768.1 563.8L771.3 565 769.9 567.5zM710.8 586.3L704.3 584 710.5 582.5zM704.3 584L697.3 581.6 703.3 577.2zM697.3 581.6L692.9 582.3 695.4 578.3zM742.5 573.3L746.3 570.9 749.9 574.1zM202.9 539.3L200 528 220 529.3zM200 528L185.6 542.4 180 530.7zM627.6 578.2L628.7 588.6 623.6 581zM635.9 577L640.6 577.1 637.9 583.9zM640.6 577.1L643.2 583.2 637.9 583.9zM607.6 570.5L609.5 573.2 605.3 576.8zM754.8 564.9L761.3 562 759.8 569.2zM704.3 584L707.5 577.3 710.5 582.5zM707.5 577.3L704.3 584 703.3 577.2zM723.2 574.2L719.2 582.5 713.8 573.1zM723.2 574.2L723.9 571.2 729.9 574.8zM710.8 586.3L704.4 587.6 704.3 584zM697.3 581.6L704.4 587.6 697.6 590.7zM704.4 587.6L697.3 581.6 704.3 584zM704.4 587.6L710.8 586.3 715.2 588.8zM704.4 587.6L715.2 588.8 717.6 604.2zM683.6 576.5L685.7 580.5 684.1 583.2zM633.5 581.7L635.9 577 637.9 583.9zM633.5 581.7L635.1 589.1 628.7 588.6zM603.4 587.4L608.8 581.8 609.8 591.3zM609.8 591.3L608.8 581.8 616.4 589zM710.7 573.7L713.8 573.1 710.5 582.5zM707.5 577.3L710.7 573.7 710.5 582.5zM738.5 569.9L739.2 564.3 746.3 570.9zM686.1 576.4L690 578 685.7 580.5zM723.9 571.2L731.3 569.3 729.9 574.8z"/>
<path fill="#213f45" stroke="#213f45" d="M809.6 709.7L813.9 662.8 827.8 730.4zM742.8 818L515.7 826.2 556.6 822.4zM647.8 814.6L602.6 814 623.2 803zM602.6 814L574 816.8 577.5 788.6zM596.4 777.6L602.6 814 577.5 788.6zM742.8 818L718 815.3 728.7 769.1zM696.8 568.1L695.8 576.1 693.5 575.3zM686.1 576.4L683.6 576.5 686.3 572zM683.6 576.5L686.1 576.4 685.7 580.5z"/>
<path fill="#1e3339" stroke="#1e3339" d="M774.8 645.8L778.9 607.2 796.5 643.9zM778.9 607.2L774.8 645.8 747.9 601.5zM717.6 604.2L735.9 589.8 747.9 601.5zM773.9 590.5L781.7 586.2 778.9 607.2zM813.9 662.8L791.7 681.4 796.5 643.9zM791.7 681.4L813.9 662.8 809.6 709.7zM746.8 668.2L791.7 681.4 767 701.8zM420 548L443.8 573.5 410 554.2zM443.8 573.5L452 551.2 468 552.8zM663.7 589.1L664 584 668.5 591.4zM620 602.2L616.4 589 620.4 590.5zM625.4 602.7L620 602.2 620.4 590.5zM518.7 575.5L520 558 540 560zM560 562L578.8 601.7 554.8 617.2zM621.7 580.8L623.6 581 620.4 590.5zM663.7 589.1L660.5 582.3 664 584zM766.4 587L773.9 590.5 747.9 601.5zM606.7 722.9L626.7 692.3 640 700.4zM635.1 589.1L637.9 583.9 641.4 588.5zM598.2 694L616.1 674.4 626.7 692.3zM136.7 573.2L132.2 557.3 146.9 565.1zM132.2 557.3L114.8 554.1 130.4 544.8zM114.8 554.1L132.2 557.3 129.7 579.3zM150.3 549.1L140 536 160 533.3zM232.8 540.3L215.2 548.5 220 529.3zM497 560.3L484 554.4 500 556zM599.9 632.1L620 602.2 629.8 630.3zM576.5 565.8L578.8 601.7 560 562zM120 541L114.8 554.1 100 546zM310.6 542.1L318.5 535 316.8 540.8zM363.3 555.3L370.8 540.8 387.2 543.2zM599.9 632.1L592.8 617.4 620 602.2zM595.1 578.1L596.4 590.8 578.8 601.7zM576.5 565.8L595.1 578.1 578.8 601.7zM595.1 578.1L600.6 581.7 596.4 590.8zM615.4 581.3L617.9 577.4 621.7 580.8zM215.2 548.5L202.9 539.3 220 529.3zM293.7 547.4L279.5 533 299 534zM592.8 617.4L609.8 591.3 620 602.2zM595.5 577.4L601.7 568.1 605.3 576.8zM595.1 578.1L595.5 577.4 600.6 581.7zM692.1 587.5L687.4 587.2 690.8 584.6zM686.2 587.7L687.4 587.2 692.1 587.5zM603.4 587.4L609.8 591.3 596.4 590.8zM340.7 558.5L348.3 544.5 363.3 555.3zM627.6 578.2L633.5 581.7 628.7 588.6zM608.8 581.8L603.4 587.4 600.6 581.7zM608.8 581.8L615.4 581.3 616.4 589zM609.5 573.2L610.7 574.3 605.3 576.8z"/>
<path fill="#214248" stroke="#214248" d="M827.1 799.4L808.3 765.1 827.8 730.4zM685.5 558L680.1 564.7 676 561.3zM602.6 814L647.8 814.6 556.6 822.4zM680.1 564.7L685 562.5 687.9 565.3zM685 562.5L680.1 564.7 685.5 558zM680.1 564.7L677.1 569.4 676 561.3zM718 815.3L647.8 814.6 687.4 803.2zM742.8 818L788.3 801.5 827.1 799.4zM677.1 569.4L673.3 562.1 676 561.3zM693.5 575.3L695.8 576.1 695.4 578.3zM685.7 570.6L686.3 572 680.7 575.5zM690.5 570.7L686.3 572 685.7 570.6zM685 562.5L686.9 561.1 687.9 565.3zM686.9 561.1L692.2 561.3 687.9 565.3zM692.2 561.3L686.9 561.1 690.7 558.9zM690.6 575.9L686.1 576.4 686.3 572zM686.3 572L683.6 576.5 680.7 575.5zM710.7 573.7L707.5 577.3 705 571.1zM690 578L693.5 575.3 695.4 578.3zM690 578L690.6 575.9 693.5 575.3zM690.6 575.9L690 578 686.1 576.4zM611.6 568.8L610.7 574.3 609.5 571.5z"/>
<path fill="#213c3f" stroke="#213c3f" d="M808.3 765.1L790.5 735 827.8 730.4zM470 741L498.8 782.6 464.2 766.4zM433.3 765.7L412 813.4 368.7 764.6zM222.9 772.4L170.8 764.5 190 740.8zM118.8 787.6L170.8 764.5 143.9 817.6zM110 735L118.8 787.6 102.2 740.4zM285.7 766.1L329.2 767.5 309.3 817.4zM329.2 767.5L349 810.7 309.3 817.4z"/>
<path fill="#1e3639" stroke="#1e3639" d="M718 672.4L726.1 706.1 708.9 699.1zM729 642.2L717.6 604.2 747.9 601.5zM673.7 633.5L697.6 590.7 711.3 636.1zM746.8 668.2L729 642.2 774.8 645.8zM746.8 668.2L726.1 706.1 718 672.4zM689.1 679.3L718 672.4 708.9 699.1zM718 672.4L689.1 679.3 711.3 636.1zM664 584L673.3 581.7 668.5 591.4zM623.6 581L628.7 588.6 620.4 590.5zM629.8 630.3L643.3 599.4 673.7 633.5zM667.5 706.3L689.1 679.3 708.9 699.1zM710 736.4L667.5 706.3 708.9 699.1zM739.3 587.6L746.9 590.7 735.9 589.8zM591.2 704.7L606.7 722.9 590 739.5zM626.7 692.3L645.8 679.6 640 700.4zM645.8 679.6L667.5 706.3 640 700.4zM645.8 679.6L617.2 661.2 629.8 630.3zM637.9 583.9L643.2 583.2 641.4 588.5zM615.4 581.3L621.7 580.8 616.4 589zM729.5 588.4L729.1 580.5 735.9 589.8zM630 740.3L606.7 722.9 640 700.4zM724.4 580.7L729.5 588.4 721.5 590.9zM681.8 590L686.2 587.7 697.6 590.7zM686.2 587.7L692.1 587.5 697.6 590.7zM609.8 591.3L592.8 617.4 596.4 590.8zM686.2 587.7L684 587 684.1 583.2zM763.2 582.4L759.9 581.5 762.4 575.4zM623.1 576.9L626 577 623.6 581zM719.2 582.5L724.4 580.7 721.5 590.9zM610.7 574.3L608.8 581.8 605.3 576.8z"/>
<path fill="#243f45" stroke="#243f45" d="M-10 736.7L-46.4 787.8 -57.8 727.9zM230 736.4L222.9 772.4 190 740.8zM431.7 739.9L433.3 765.7 430 737.5zM350 739.4L361.5 729.9 368.7 764.6zM54.9 737.7L38.9 786.1 32.9 742.5zM140 536L141.9 547.9 130.4 544.8zM670.1 574.1L660.3 576 664.5 570.3zM675 574.2L670.1 574.1 672.2 571.1zM626 577L628.3 567.8 630.8 570.7zM150 568.7L136.7 573.2 146.9 565.1zM635.9 577L627.6 578.2 630.8 570.7zM640.6 577.1L638.1 573.1 642 577.2zM640.6 577.1L635.9 577 638.1 573.1z"/>
<path fill="#1b2a30" stroke="#1b2a30" d="M30 740.9L-10 736.7 -10.3 732zM201 722.8L230 736.4 190 740.8z"/>
<path fill="#273f45" stroke="#273f45" d="M30 740.9L32.9 742.5 -0.4 767.4zM263.3 740.4L270 735.8 285.7 766.1z"/>
<path fill="#274245" stroke="#274245" d="M-10 736.7L30 740.9 -0.4 767.4zM664.5 570.3L660.3 576 660.3 568.8zM660 558.8L659.6 561.4 650.3 556.9zM627.1 562.5L633.9 558.4 636.4 564zM670.1 574.1L664.5 570.3 672.2 571.1zM666.8 565.1L664.5 570.3 660.3 568.8zM664.5 570.3L666.8 565.1 672.2 571.1zM666.8 565.1L659.6 561.4 660 558.8zM666.8 565.1L665.1 555 670.1 554.7zM675 574.2L677.1 569.4 680.7 575.5zM677.1 569.4L675 574.2 672.2 571.1zM637.2 556.1L642.4 561.3 636.4 564zM633.9 558.4L637.2 556.1 636.4 564zM650.3 570.2L657.4 565.1 660.3 568.8zM637.1 572.5L630.8 570.7 636.4 564zM673.3 562.1L666.8 565.1 670.1 554.7zM666.8 565.1L673.3 562.1 672.2 571.1zM652.9 574.6L660.3 576 658 577.5zM638.1 573.1L635.9 577 637.1 572.5zM628.3 567.8L627.1 562.5 636.4 564zM630.8 570.7L628.3 567.8 636.4 564zM649.6 551.8L654.7 552.8 650.3 556.9zM657.4 565.1L647.9 565.9 650.3 556.9zM647.9 565.9L647.6 558.4 650.3 556.9zM638.1 573.1L645.2 567.9 642 577.2zM647.5 577.8L645.2 567.9 650.3 570.2zM645.2 567.9L647.9 565.9 650.3 570.2zM645.2 567.9L637.1 572.5 636.4 564z"/>
<path fill="#182d33" stroke="#182d33" d="M-60 570L-31.3 599.6 -66.6 640.4zM-40 570L-31.3 599.6 -60 570zM-40 570L-20 570 -31.3 599.6zM45.3 599.6L50 566 74.3 602.5zM25 562L31.1 572.6 0 570zM50 566L31.1 572.6 25 562zM-16.5 571.7L-20 570 0 570zM6.2 615.8L-16.5 571.7 0 570zM74.3 602.5L52.6 564 65 559zM443.8 573.5L434.4 601.5 410 554.2zM80 552L106.1 554.8 114.5 588.5zM228.4 604.6L220.5 605.8 220.6 586.4zM509.3 685.5L555.2 683.1 536.5 729.6zM578.8 601.7L575.3 639 554.8 617.2zM129.1 590.8L114.5 588.5 129.7 579.3zM128.6 607.2L129.1 590.8 135.8 596.5zM114.5 588.5L114.8 554.1 129.7 579.3zM106.1 554.8L114.8 554.1 114.5 588.5zM167.7 594.2L172.7 586.5 191.5 591.8zM144.2 590.9L142.4 600 135.8 596.5zM155.8 578.6L144.2 590.9 136.7 573.2z"/>
<path fill="#2a4e54" stroke="#2a4e54" d="M515.7 477.2L506.6 446.3 552.3 439.2zM582.6 439.8L571.3 475.3 552.3 439.2zM595.3 484.6L597.7 499.7 571.3 475.3zM784.8 519.3L785.2 509.6 796.6 562zM784.1 465.4L785.7 491.1 782.6 473.3zM582.6 439.8L614 438.3 599.6 440.4zM657 516.3L657.2 509.7 659.9 510.3zM765.7 557.2L767.4 550.8 768.6 555.8zM648.8 448.1L644.7 439.6 651.4 439.6zM609.2 447.9L617.5 448.6 613.8 451.6zM603.9 487.3L601.6 492.2 595.3 484.6zM627.8 473.4L631.6 478 625.8 479.2zM631.6 478L627.8 473.4 634.5 472zM607.6 552.5L615.2 552.9 614.3 557.9zM650.7 473L644.1 472.1 646.8 468.4zM676.1 514.5L668.3 513.7 674.5 509.2zM773.2 549.2L776.8 541.7 782.4 549.7zM777.7 554L775.6 560.1 768.6 555.8zM781.2 539.8L782.2 534.4 784.5 539.2zM785.2 509.6L784.7 500.4 785.7 491.1zM652.1 453.5L654.7 444.7 659.6 454.5zM664 439.2L658.3 441.3 651.4 439.6zM609.2 447.9L605.3 441.9 614 438.3zM628.8 439.4L628.2 445.7 626.4 438.5zM617.8 437.8L617.5 448.6 614 438.3zM617.5 448.6L617.8 437.8 623.7 448.5zM631.6 478L639.3 480.2 634.5 483.8zM618.6 453.2L617.5 448.6 623.7 448.5zM636.1 460.6L631.9 463.8 630.7 458.8zM597.4 471.9L601.2 465.8 602.5 470.2zM601.8 531.4L602.2 525.5 605.8 530.2zM604.3 538L601.8 531.4 605.8 530.2zM598.8 558.6L607.9 558.8 603.8 563.6zM650 506.4L646.9 512.9 647.4 507.5zM667.4 517L661.3 525.8 657 516.3zM667.4 517L667.9 526.8 661.3 525.8zM637.9 504.2L640.8 498.1 647.4 507.5zM775.6 560.1L774.7 561.1 768.6 555.8zM775.1 539.9L769.5 544.3 772.3 538.9zM777.9 537L781.2 539.8 776.8 541.7zM769.1 510.3L774.1 516.5 766.4 517zM763.1 528.9L766.7 529.3 764.5 535.3zM639.6 468.1L644.1 472.1 634.5 472zM639.6 468.1L631.9 463.8 636.1 460.6zM780.8 410.7L783 414.7 775.6 414.4zM782.2 403.9L780.8 410.7 777.9 403.6zM614.1 503.5L608.1 506.8 610.1 500.6zM613.5 492.3L615 498.7 610.1 500.6zM621.6 499.7L615 498.7 621 493.1zM637.6 494.2L640.8 498.1 636.5 498.7zM614.6 457.3L610.1 460.2 613.8 451.6zM614.9 465.6L608.2 466.4 610.1 460.2zM608.2 466.4L601.2 465.8 601 459zM644.2 511.6L643.8 517.7 637.2 509.8zM643.8 517.7L641.9 524.9 638.7 520.1zM627.4 536.5L637 536.1 636.6 542.2zM637 536.1L627.4 536.5 630.3 530.9zM638.7 520.1L633.8 519.3 637.2 509.8zM633.8 519.3L624 518.6 631.5 510.3zM778.1 530.6L777.9 537 775.8 532.3zM756.5 520.4L759.5 524.2 752.8 525.6zM783.5 516.2L785.2 509.6 784.8 519.3zM769.6 533.8L772.3 538.9 769.4 538.8zM781.7 505.3L784.7 500.4 785.2 509.6zM771.2 482.3L765.7 484.9 767.5 478.4zM780.5 470.2L784.1 465.4 782.6 473.3zM662.9 461.4L653.9 458.5 659.6 454.5zM661.2 444.3L667.3 447.1 659.6 454.5zM667.3 447.1L674 448 672.6 448.9zM667.3 447.1L671 438.3 676 442.1zM671 438.3L673 438.6 676 442.1zM673 438.6L678.6 439.5 676 442.1zM683.5 410.2L679 406.2 685 405.1zM688.3 406.3L685 405.1 692.9 404zM756.2 463.4L758 469.3 753.7 469.3zM756.3 474L752.7 472.6 753.7 469.3zM773.5 409.1L774.3 404.2 777.9 403.6zM748 404.5L754.7 403.7 751.6 409.8zM783 414.7L780.2 418.6 775.6 414.4zM765 409.3L763.3 412.9 759.7 407.9zM748.2 415.9L745.2 412.9 751.6 409.8zM698.9 405L696.1 408.2 692.9 404zM732.6 415.2L728.3 419.9 725.7 414.8zM605.2 476.8L597.4 471.9 602.5 470.2zM623.9 468.1L618.6 474.1 620.5 464.5zM622.7 493.2L621.6 499.7 621 493.1zM622.7 493.2L629.1 497.9 621.6 499.7zM621.6 499.7L629.1 497.9 623.8 506.2zM608.2 466.4L612.2 474.2 602.5 470.2zM612.2 474.2L605.2 476.8 602.5 470.2zM623 536.5L625.6 542.4 619.2 541.6zM629.4 548.2L624.6 557.8 620.3 552zM600.6 544.9L597.2 551.3 598 539.4zM600.6 544.9L604.3 538 607.6 546.3zM607.6 552.5L602.1 549.3 607.6 546.3zM657.4 478.5L665.3 477.2 660 486.9zM646.8 485.3L645.2 491.1 641.1 486.4zM646.8 485.3L652.1 491 645.2 491.1zM670.8 507.3L675.1 500.7 675.4 505zM682.3 532.7L684.3 535.5 681.5 537.3zM679.6 529.4L679.1 525.7 683.2 524.1zM647.9 538.5L640 536.9 644 529zM688.6 518.7L693.5 519.5 688 525.2zM760.9 510L758.8 515.9 754.8 511.8zM776.3 528.5L778.1 530.6 775.8 530.4zM753.1 500.1L755 495.5 756.1 500.2zM771.8 505.6L776.5 505.4 775.5 511zM774.2 493.4L777.8 486.4 780.7 493.1zM760.4 432.2L762.2 436.3 755.1 438.3zM771.4 458.5L775 455.2 777.8 459.5zM777.3 442.7L774.1 446.3 774.1 443zM679 406.2L677.5 411.3 676.4 405.4zM696.1 408.2L691.1 411.3 692.9 404zM748.4 408.3L744.2 405.5 748 404.5zM753.1 432.3L760.4 432.2 755.1 438.3zM782.5 431.6L783.8 429 783.4 437.8zM784.7 447.9L783.8 429 785.7 455.2zM783.6 420.1L780.2 418.6 783 414.7zM765 409.3L764.8 406 768.5 405.1zM764.8 406L759.7 407.9 758.2 403.8zM698.9 405L702.8 408.2 696.1 408.2zM732.9 411.2L736.8 413.2 732.6 415.2zM718 406.1L723.3 406 718.5 410.3zM725.5 408.3L723.3 406 725.3 405.1zM706.6 405.6L712.6 406.1 709.7 410.4zM718 406.1L712.6 406.1 725.3 405.1zM713 414.6L715.7 420.4 709.8 420.3zM744.2 423.9L740.6 421.7 743.1 419.4zM736.8 413.2L734.2 418.8 732.6 415.2zM608.2 516.3L609.2 513.1 611.2 516.4zM622.5 474.2L623.9 468.1 627.8 473.4zM615.4 533.2L614.9 526.2 619.7 530.2zM614.9 526.2L621.3 525.8 619.7 530.2zM677.1 500.2L682.3 501.3 679.2 502.8zM673 491.3L677.5 491.7 675.8 498.1zM694.5 536.1L696.5 536.5 695.2 539.4zM685.1 525.8L681.5 530.5 683.2 524.1zM690 535.1L684.3 535.5 688.6 531.7zM687.7 528.3L691.6 527.7 688.6 531.7zM685.1 525.8L687.7 528.3 686.7 529.5zM709.9 516.5L711.4 521.1 706.6 521.1zM757.8 532.5L754.2 532.7 756.7 528.7zM756.6 538.2L755.7 536.1 759 534.4zM776.3 528.5L772 524.7 776.7 526zM763.4 523.4L766.3 524 763.1 528.9zM761.4 518.9L763.4 523.4 759.5 524.2zM755 495.5L757.2 497.7 756.1 500.2zM758.8 486.4L761.8 489.4 760.8 492zM765 491.5L761.8 489.4 767.7 486.8zM761.8 489.4L758.8 486.4 761.4 482.7zM766.3 496.1L763.7 495.8 765 491.5zM776.5 500.4L779.4 501.9 776.5 505.4zM776.5 500.4L769.7 501 773 496.5zM767 473.8L767.5 478.4 763.5 476.9zM767 473.8L763.4 470.9 769.3 470.9zM775.6 483.1L777.8 486.4 773.6 487.9zM771.1 480L775.6 483.1 771.2 482.3zM761.1 473.3L767 473.8 763.5 476.9zM767 473.8L761.1 473.3 763.4 470.9zM763.4 470.9L761.1 473.3 758 469.3zM756.2 463.4L760.5 464.5 758 469.3zM769.9 445.5L768.1 440.7 774.1 443zM779.7 437.8L783.2 441.1 777.3 442.7zM772 455.2L775 455.2 771.4 458.5zM765.7 447.4L766.5 449.7 763.5 450.3zM772 455.2L766.5 449.7 772 451.6zM679.9 442.7L677.3 445.2 676 442.1zM676.9 450.8L679.5 450.1 679.6 453.1zM679.9 423.8L677.7 428.3 677.6 423.3zM678.2 417.2L677.6 423.3 672.5 417.3zM743.6 411.2L745.2 412.9 738.8 413.2zM763.5 450.3L758.5 449.7 762.7 446zM760.9 455.7L758.5 449.7 763.5 450.3zM730.5 411.2L732.9 411.2 732.6 415.2zM715.6 410.3L713 414.6 709.7 410.4zM715.6 410.3L718 406.1 718.5 410.3zM709.9 414.3L705.8 410.8 709.7 410.4zM650 506.4L658.8 502.6 657.2 509.7zM677.1 500.2L676.6 502.7 675.1 500.7zM677.5 491.7L679.6 493.2 675.8 498.1zM679.6 493.2L677.5 491.7 683.1 491.6zM685.9 530.3L684.3 535.5 682.3 532.7zM686.1 483.1L685 479 689 478zM755.7 536.1L758.6 533.6 759 534.4zM766.6 502.8L763.7 495.8 766.3 496.1zM766.5 518.5L769.3 519.6 766.3 524zM769.3 519.6L774.1 516.5 776 519.1zM772 524.7L769.3 519.6 776 519.1zM751.3 489.1L755.2 491 751.3 493.2zM750.8 497.7L751.3 493.2 755 495.5zM768.1 440.7L766.4 438.6 770.6 436.7zM766.4 438.6L767.1 432.6 770.6 436.7zM764.9 431.5L767.1 432.6 762.2 436.3zM771.1 480L773.5 474.6 776.8 478.9zM674.6 415.8L672.5 417.3 672 411zM679.8 414.6L683.5 410.2 685.1 414.2zM678.2 417.2L684.1 418.9 679.9 423.8zM684.1 418.9L686.9 419.7 684.9 424.8zM691.1 411.3L688.1 411.3 688.3 406.3zM688.3 406.3L688.1 411.3 683.5 410.2zM683.5 410.2L688.1 411.3 685.1 414.2zM736.8 413.2L739.6 408.3 738.8 413.2zM743.6 411.2L739.6 408.3 744.2 405.5zM732.9 411.2L739.6 408.3 736.8 413.2zM774.4 417.1L773.4 415.7 775.6 414.4zM745.8 417.9L744.2 423.9 743.1 419.4zM745.8 417.9L751.1 422.2 744.2 423.9zM758.8 414.9L753.7 412.7 756.1 409.2zM758.8 414.9L756.1 409.2 759.7 407.9zM685 479L689 473.5 689 478zM744 427.2L737.3 425.1 744.2 423.9zM737.3 425.1L734.2 418.8 736.9 419.2zM748.5 428.3L744 427.2 744.2 423.9zM732.2 406L725.5 408.3 725.3 405.1zM732.9 411.2L732.2 406 737.3 404.7zM709.9 414.3L704.8 418.6 703.7 414.8zM723.2 422.6L723.6 420 726.4 422.6zM621.1 520.4L621.3 525.8 614.9 526.2zM621.1 520.4L620.8 516.2 624 518.6zM680.9 459.2L685.4 464.2 679.1 461.8zM670.3 484.6L666.5 491.5 660 486.9zM676.9 482L672.1 481.3 675 478.8zM762.2 436.3L764.7 442.5 760 443.2zM764.1 461.2L760.5 464.5 757.3 458.7zM744.2 405.5L738.7 405.8 737.3 404.7zM738.7 405.8L739.6 408.3 732.9 411.2zM755.6 420.2L751.1 422.2 752.1 420zM762.8 417.4L758.8 414.9 763.3 412.9zM755.6 420.2L762.8 417.4 757.4 424.8zM762.8 417.4L766.5 418.4 763.7 424.6zM766.5 418.4L763.3 412.9 768.1 412.7zM779.7 437.8L777.8 432 782.5 431.6zM752.7 450.4L756.6 447.8 758.5 449.7zM653.9 458.5L654.1 465.8 650.6 458.6zM685.5 460L680.9 459.2 683.2 454.2zM674 486L675.3 486.4 673 491.3zM670.3 484.6L674 486 673 491.3zM681.6 482.8L680.3 478.4 682.6 479.1zM702.2 528.1L700.3 532.8 699.6 532.1zM707.6 532.6L702.8 533.3 706.1 529.2zM713.2 525.6L710.5 531.4 709.2 529zM692.7 530.1L691.6 527.7 695.8 525.2zM704.6 525.4L699.9 523.1 701.4 520.5zM699.9 523.1L702.2 528.1 695.8 525.2zM701.4 520.5L699.9 523.1 698.3 518.8zM778.7 427.9L776.9 423 783.4 422.6zM676.9 482L672.6 483.1 672.1 481.3zM682.4 483.3L685 479 686.1 483.1zM685 479L682.4 483.3 682.6 479.1zM677.8 453.9L675.1 454 676.9 450.8zM677.6 465L681.8 466.5 679.6 467.3zM681.9 486.6L686.1 483.1 685.9 489.1z"/>
<path fill="#30575a" stroke="#30575a" d="M515.7 477.2L500.4 523.4 496.5 486.6zM785.2 509.6L785.7 491.1 818.8 597.1zM605 490.9L613.5 492.3 610.1 500.6zM641.9 524.9L639.4 528.6 637.1 524.5zM636.1 460.6L638.1 454.4 644.1 459.5zM649.5 524.8L643.8 517.7 651.4 518.2zM652.1 491L651 500 645.2 491.1zM778.1 530.6L775.8 532.3 775.8 530.4zM776.5 515.9L780.6 520.3 776 519.1zM632.1 455.5L638.1 454.4 636.1 460.6zM629.1 497.9L622.7 493.2 624.6 491.5zM668.3 513.7L670.8 507.3 674.5 509.2zM782.3 495.6L779.4 501.9 777.7 495.8zM777.8 486.4L774.2 493.4 773.6 487.9zM612.2 474.2L610.7 477.3 605.2 476.8zM757.2 497.7L755 495.5 760.8 492zM779.4 501.9L776.5 500.4 777.7 495.8zM776.5 500.4L771.8 505.6 769.7 501zM760.5 464.5L756.2 463.4 757.3 458.7zM776.4 464.1L771.4 458.5 777.8 459.5zM676.5 510.6L679 512 676.1 514.5zM754.2 532.7L753.3 528 756.7 528.7zM764.7 507.6L757.9 506.1 760.5 500.8zM764.7 507.6L766.3 505.3 769.1 510.3zM764.7 507.6L765.3 510.5 760.9 510zM678.8 474.7L680.3 478.4 676.9 478.9zM689 473.5L683.4 472.3 689.4 472.5z"/>
<path fill="#274b51" stroke="#274b51" d="M515.7 477.2L555.5 529.5 500.4 523.4zM785.7 491.1L785.7 455.2 818.8 597.1zM783 544.5L796.6 562 782.4 549.7zM595.3 484.6L601.6 492.2 597.7 499.7zM785.1 530.8L784.8 519.3 796.6 562zM603.9 487.3L605 490.9 601.6 492.2zM620.9 511.5L618.1 502.8 623.8 506.2zM628.4 486.9L631.6 478 634.5 483.8zM646.9 512.9L657.2 509.7 651.4 518.2zM665.6 503.9L668.3 513.7 659.9 510.3zM656.6 529.2L661.3 525.8 664.4 529.2zM766.5 537L761.8 539.5 764.5 535.3zM782.2 534.4L782.8 528.3 785.1 530.8zM654.7 444.7L652.1 453.5 648.8 448.1zM597.4 471.9L571.3 475.3 594.6 459.9zM617.8 437.8L672 411 626.4 438.5zM601.6 492.2L602 496.9 597.7 499.7zM613.5 492.3L605 490.9 609.5 485.5zM644.1 472.1L639.3 480.2 634.5 472zM639.3 480.2L631.6 478 634.5 472zM633.9 491.8L628.4 486.9 634.5 483.8zM631.9 463.8L623.1 461.1 630.7 458.8zM598.2 517.1L596.1 522.4 581.1 528zM609 536.2L614.1 539.1 607.6 546.3zM668.3 513.7L667.4 517 659.9 510.3zM676.1 531.7L673.9 528.2 679.6 529.4zM676.1 531.7L681.5 530.5 682.3 532.7zM637.9 504.2L632.5 506.3 636.5 498.7zM773.2 549.2L769.5 544.3 776.8 541.7zM769.5 544.3L775.1 539.9 776.8 541.7zM769.5 544.3L764.7 542.8 769.4 538.8zM775.8 532.3L777.9 537 773.8 534.2zM752.8 525.6L759.5 524.2 756.7 528.7zM761.4 482.7L757.8 477.2 763.5 476.9zM780.4 480.2L776.8 478.9 778.4 475.4zM780.4 480.2L778.6 483.4 776.8 478.9zM767.5 478.4L761.4 482.7 763.5 476.9zM644.1 472.1L639.6 468.1 646.8 468.4zM754.3 480.2L756.3 474 757.8 477.2zM598.7 454.2L604.4 453.2 601 459zM598.7 454.2L601 459 594.6 459.9zM600.8 447.1L598.7 454.2 598.1 446.8zM615 498.7L621.6 499.7 618.1 502.8zM618.6 453.2L626.4 451.3 623.1 461.1zM614.9 465.6L614.6 457.3 620.5 464.5zM601.2 511.6L608.2 516.3 598.2 517.1zM625.6 542.4L627.4 536.5 630.6 545.6zM615.4 533.2L609 536.2 605.8 530.2zM645.2 491.1L651 500 640.8 498.1zM651 500L650 506.4 647.4 507.5zM682.5 538.8L678.6 539 681.5 537.3zM686.7 539.5L687 543.2 682.4 543.6zM674.2 538.3L678.6 539 672.4 546.1zM665.1 542.1L657.2 542.6 664.1 539.2zM665.1 542.1L674.2 538.3 672.4 546.1zM650.8 529.4L656.6 529.2 655.5 537.4zM672.4 546.1L674.5 551.5 670.7 549.4zM751.8 519.5L756.5 520.4 752.8 525.6zM780.6 520.3L783.5 516.2 784.8 519.3zM780.6 520.3L776.5 515.9 783.5 516.2zM784.7 500.4L782.3 495.6 785.7 491.1zM767.5 478.4L765.7 484.9 761.4 482.7zM632.1 455.5L636.1 460.6 630.7 458.8zM765 409.3L770.6 411.2 768.1 412.7zM623.1 461.1L623.9 468.1 620.5 464.5zM629.1 497.9L633.9 491.8 636.5 498.7zM629.1 497.9L632.5 506.3 623.8 506.2zM612.2 474.2L618.6 474.1 618.2 480.5zM623 536.5L627.4 536.5 625.6 542.4zM627.5 526.6L633.8 519.3 637.1 524.5zM625.6 542.4L629.4 548.2 620.3 552zM660 498.1L670.2 497 665.6 503.9zM653.9 485.7L657.4 478.5 660 486.9zM670.2 497L675.1 500.7 665.6 503.9zM695.2 539.4L693 545.7 691.3 542.1zM674.3 518.4L677 517.3 676.7 520.4zM677.6 525.1L679.1 525.7 679.6 529.4zM640 536.9L639.4 528.6 644 529zM776.3 528.5L776.7 526 780.6 525.7zM769.7 501L766.3 496.1 773 496.5zM781.7 505.3L779.4 501.9 784.7 500.4zM779.4 501.9L782.3 495.6 784.7 500.4zM777.8 486.4L778.6 483.4 781.6 487.5zM775 455.2L781.2 456.8 777.8 459.5zM774.1 446.3L769.9 445.5 774.1 443zM781.2 456.8L780.2 451.4 785.7 455.2zM632.1 455.5L633.6 448.3 638.1 454.4zM676.4 405.4L677.5 411.3 672 411zM609.2 513.1L608.2 516.3 601.2 511.6zM623.9 468.1L622.5 474.2 618.6 474.1zM622.5 474.2L627.8 473.4 625.8 479.2zM610.7 477.3L612.2 474.2 618.2 480.5zM628.3 528.6L627.5 526.6 637.1 524.5zM627.5 526.6L621.3 525.8 624 518.6zM666 454.5L667.3 447.1 672.6 448.9zM652.1 491L655.3 499.3 651 500zM660 498.1L666.5 491.5 670.2 497zM695.2 539.4L699.3 545 693 545.7zM686.7 529.5L687.7 528.3 688.6 531.7zM687.7 528.3L685.1 525.8 688 525.2zM706.6 521.1L701.4 520.5 704 517.1zM680.6 548.6L679.5 545.9 682.4 543.6zM678.6 539L679.5 545.9 672.4 546.1zM766.5 518.5L761.9 516.4 766.4 517zM772 524.7L776.3 528.5 771.7 529.8zM755 495.5L755.2 491 760.8 492zM767 473.8L769.2 474.2 767.5 478.4zM771.6 492.1L765 491.5 767.7 486.8zM756.3 474L761.1 473.3 757.8 477.2zM780.2 451.4L778.6 447.3 784.7 447.9zM778.2 470.8L774.2 469 778.3 466.5zM677.3 445.2L674 448 676 442.1zM676.9 450.8L673.4 452.1 674 448zM688.8 413.7L686.9 419.7 685.1 414.2zM757.1 427.6L753.1 432.3 751.3 426.4zM753.1 432.3L757.1 427.6 760.4 432.2zM756.9 454.2L760.9 455.7 757.3 458.7zM725.5 408.3L730.5 411.2 725.7 414.8zM657.4 492.8L653.9 485.7 660 486.9zM657.2 509.7L658.8 502.6 659.9 510.3zM666.5 491.5L669.8 491.9 670.2 497zM704.3 537L709.2 539.7 705.1 542.2zM681.5 530.5L685.9 530.3 682.3 532.7zM712.1 532.7L715.1 539.3 709.2 539.7zM758.6 533.6L757.8 532.5 762.3 528.6zM752.4 542.1L752.6 538.9 756.6 538.2zM752.1 530.6L753.3 528 754.2 532.7zM769.3 519.6L772 524.7 766.3 524zM764.9 431.5L762.2 436.3 760.4 432.2zM773.5 474.6L774.2 469 778.2 470.8zM771.4 458.5L769.6 461.9 764.3 456.3zM773.4 415.7L770.6 411.2 775.6 414.4zM730.5 411.2L732.2 406 732.9 411.2zM680.9 459.2L677.8 453.9 679.6 453.1zM672.1 481.3L670.3 484.6 665.3 477.2zM701.4 539.7L704.3 537 705.1 542.2zM704.3 537L707.4 535.7 709.2 539.7zM693.9 533.1L699.6 532.1 696.5 536.5zM709.7 548.4L700 549 705.1 542.2zM691.4 535L692 538 690 535.1zM709.7 525.5L709.2 529 706.1 529.2zM713.2 525.6L711.4 521.1 717.8 524.5zM713.2 525.6L709.7 525.5 711.4 521.1zM756.7 558.2L751.7 556 752.8 549.4zM764.1 461.2L764.6 466.5 760.5 464.5zM764.1 461.2L769.6 461.9 764.6 466.5zM776.9 423L773.9 424.3 774.4 417.1zM680.3 478.4L676.9 482 676.9 478.9zM703.1 534.7L701.4 539.7 696.5 536.5zM702.8 533.3L700.3 532.8 702.2 528.1zM699.6 532.1L700.3 532.8 696.5 536.5zM707.6 532.6L710.5 531.4 712.1 532.7zM692.7 530.1L697.5 530.4 693.9 533.1zM691.6 527.7L692.7 530.1 688.6 531.7zM699.9 523.1L696 523.1 698.3 518.8zM702.8 533.3L703.1 528.2 706.1 529.2zM677.3 468.8L678.8 474.7 674 472.9zM673.5 464.5L677.3 468.8 669.9 471.1zM682.4 483.3L681.6 482.8 682.6 479.1zM716.1 529L710.5 531.4 713.2 525.6zM683.4 472.3L689 473.5 685 479zM677.3 468.8L677.6 465 679.6 467.3zM675.3 486.4L681.9 486.6 677.5 491.7zM680.3 478.4L680.7 474.7 682.6 479.1z"/>
<path fill="#1b3336" stroke="#1b3336" d="M774.8 645.8L729 642.2 747.9 601.5zM729 642.2L746.8 668.2 718 672.4zM746.8 668.2L767 701.8 726.1 706.1zM578.8 737.6L591.2 704.7 590 739.5zM560 562L554.8 617.2 540 560zM606.7 722.9L598.2 694 626.7 692.3zM667.5 706.3L645.8 679.6 689.1 679.3zM617.2 661.2L616.1 674.4 590.3 668zM599.9 632.1L617.2 661.2 590.3 668zM596.4 590.8L592.8 617.4 578.8 601.7z"/>
<path fill="#1b3339" stroke="#1b3339" d="M729 642.2L718 672.4 711.3 636.1zM697.6 590.7L717.6 604.2 711.3 636.1zM387.2 543.2L403.6 545.6 410 554.2zM767 701.8L791.7 681.4 809.6 709.7zM689.1 679.3L673.7 633.5 711.3 636.1zM403.6 545.6L420 548 410 554.2zM443.8 573.5L420 548 436 549.6zM625.4 602.7L643.3 599.4 629.8 630.3zM554.8 617.2L518.7 575.5 540 560zM689.1 679.3L645.8 679.6 673.7 633.5zM141.9 547.9L132.2 557.3 130.4 544.8zM318.5 535L335.5 543.8 316.8 540.8zM240 530.7L232.8 540.3 220 529.3zM318.5 535L338 536 335.5 543.8zM518.7 575.5L497 560.3 520 558zM578.8 737.6L550 735.2 591.2 704.7zM114.8 554.1L120 541 130.4 544.8zM120 541L140 536 130.4 544.8zM240 530.7L249 541.9 232.8 540.3zM363.3 555.3L387.2 543.2 410 554.2zM260 532L263.7 545 249 541.9zM263.7 545L260 532 279.5 533zM185.6 542.4L175 540.9 180 530.7zM600.6 581.7L603.4 587.4 596.4 590.8z"/>
<path fill="#21363c" stroke="#21363c" d="M778.9 607.2L781.7 586.2 818.8 597.1zM668.5 591.4L674.9 594.4 673.7 633.5zM781.7 580.2L790.7 565 818.8 597.1zM781.7 586.2L781.7 580.2 818.8 597.1zM674.9 594.4L681.8 590 697.6 590.7zM746.9 590.7L756 587.5 747.9 601.5zM628.7 588.6L625.4 602.7 620.4 590.5zM663.7 589.1L643.3 599.4 653.9 589.2zM616.4 589L621.7 580.8 620.4 590.5zM660.5 582.3L653.9 589.2 651.5 581.3zM746.9 590.7L739.3 587.6 744.7 581zM739.3 587.6L739.6 580.9 744.7 581zM676.3 590.5L681.8 590 674.9 594.4zM676.2 585.3L676.3 590.5 668.5 591.4zM676.3 590.5L674.9 594.4 668.5 591.4zM628.7 588.6L635.1 589.1 625.4 602.7zM734 577.3L729.1 580.5 729.9 574.8zM729.5 588.4L735.9 589.8 717.6 604.2zM766.4 587L769.8 580.7 776.4 584zM769.9 567.5L775 568.1 769.5 576.4zM729.5 588.4L724.4 580.7 729.1 580.5zM715.2 588.8L721.5 590.9 717.6 604.2zM782.8 569.3L780.6 574.6 775 568.1zM780.6 574.6L782.8 569.3 781.7 580.2zM620 602.2L609.8 591.3 616.4 589zM595.5 577.4L595.1 578.1 593 569.5zM600.6 581.7L595.5 577.4 605.3 576.8zM765.1 568.9L769.5 576.4 762.4 575.4zM690.8 584.6L687.4 587.2 684.1 583.2zM684 587L686.2 587.7 681.8 590zM684 587L681.8 590 676.2 585.3zM703.3 577.2L697.3 581.6 695.4 578.3zM697.3 581.6L692.1 587.5 692.9 582.3zM749.9 574.1L746.3 570.9 750.6 570.3zM746.3 570.9L752 565 750.6 570.3zM763.2 582.4L769.8 580.7 766.4 587zM769.8 580.7L763.2 582.4 769.5 576.4zM643.2 583.2L640.6 577.1 642 577.2zM617.9 577.4L623.1 576.9 621.7 580.8zM752 565L754.8 564.9 750.6 570.3zM719.2 582.5L715.2 588.8 710.5 582.5zM697.6 590.7L704.4 587.6 717.6 604.2zM635.1 589.1L633.5 581.7 637.9 583.9zM608.8 581.8L600.6 581.7 605.3 576.8zM690 578L692.9 582.3 690.8 584.6zM685.7 580.5L690 578 690.8 584.6zM608.8 581.8L610.7 574.3 615.4 581.3zM610.7 574.3L617.9 577.4 615.4 581.3z"/>
<path fill="#21393c" stroke="#21393c" d="M790.5 735L767 701.8 809.6 709.7zM756 587.5L748.8 581.6 755.1 577.7zM773.9 590.5L776.4 584 781.7 586.2zM643.3 599.4L648.6 587.3 653.9 589.2zM658 577.5L660.5 582.3 651.5 581.3zM729.1 580.5L739.6 580.9 735.9 589.8zM606.7 722.9L623.1 748.4 590 739.5zM648.6 587.3L643.2 583.2 651.5 581.3zM721.5 590.9L729.5 588.4 717.6 604.2zM630 740.3L623.1 748.4 606.7 722.9zM640.8 746.3L630 740.3 640 700.4zM643.2 583.2L647.5 577.8 651.5 581.3zM670.1 574.1L674 577.8 673.3 581.7zM674 577.8L680.7 575.5 676.2 585.3zM759.9 581.5L756 587.5 755.1 577.7zM687.4 587.2L686.2 587.7 684.1 583.2zM626 577L627.6 578.2 623.6 581zM715.2 588.8L719.2 582.5 721.5 590.9zM633.5 581.7L627.6 578.2 635.9 577z"/>
<path fill="#243f42" stroke="#243f42" d="M498.8 782.6L452.9 818.6 464.2 766.4zM318.6 743.9L285.7 766.1 310 740.4z"/>
<path fill="#274248" stroke="#274248" d="M433.3 765.7L390 735.2 430 737.5zM170.8 764.5L150 738.7 190 740.8zM470 741L510 737.5 498.8 782.6zM431.7 739.9L470 741 464.2 766.4zM361.5 729.9L390 735.2 368.7 764.6zM285.7 766.1L270 735.8 310 740.4zM141.9 547.9L150.3 549.1 146.9 565.1zM158.6 561.6L150 568.7 146.9 565.1z"/>
<path fill="#213c42" stroke="#213c42" d="M452.9 818.6L433.3 765.7 464.2 766.4zM559 775.2L515.7 826.2 498.8 782.6zM77.6 783L54.9 737.7 70 738.3zM329.2 767.5L350 739.4 368.7 764.6zM230 736.4L263.3 740.4 259.8 776.6zM132.2 557.3L141.9 547.9 146.9 565.1z"/>
<path fill="#1e393f" stroke="#1e393f" d="M433.3 765.7L452.9 818.6 412 813.4z"/>
<path fill="#1b3036" stroke="#1b3036" d="M31.1 572.6L50 566 45.3 599.6zM510 737.5L509.3 685.5 536.5 729.6zM452 551.2L443.8 573.5 436 549.6zM484 554.4L443.8 573.5 468 552.8zM80 552L74.3 602.5 65 559zM80 552L100 546 106.1 554.8zM598.2 694L555.2 683.1 590.3 668zM555.2 683.1L598.2 694 591.2 704.7zM554.8 617.2L575.3 639 530.8 652.4zM555.2 683.1L575.3 639 590.3 668zM575.3 639L555.2 683.1 530.8 652.4zM598.2 694L606.7 722.9 591.2 704.7zM616.1 674.4L645.8 679.6 626.7 692.3zM645.8 679.6L616.1 674.4 617.2 661.2zM100 546L114.8 554.1 106.1 554.8zM132.2 557.3L136.7 573.2 129.7 579.3zM497 560.3L518.7 575.5 516.8 607zM497 560.3L516.8 607 451.7 616.3zM443.8 573.5L497 560.3 451.7 616.3zM497 560.3L443.8 573.5 484 554.4zM555.2 683.1L550 735.2 536.5 729.6zM575.3 639L599.9 632.1 590.3 668zM617.2 661.2L599.9 632.1 629.8 630.3zM249 541.9L240 530.7 252.7 530.9zM353.9 570.7L363.3 555.3 410 554.2zM370.8 540.8L363.3 555.3 354.4 538.4zM592.8 617.4L599.9 632.1 575.3 639zM363.3 555.3L348.3 544.5 354.4 538.4zM348.3 544.5L338 536 354.4 538.4zM185.6 542.4L200 528 202.9 539.3zM340.7 558.5L363.3 555.3 353.9 570.7zM350.7 573.1L340.7 558.5 353.9 570.7zM350.7 573.1L352.4 586.8 337.6 588.7z"/>
<path fill="#2a484e" stroke="#2a484e" d="M216.9 570.3L220.6 586.4 206.1 587zM721 749.2L709.7 772.2 710 736.4zM709.7 772.2L675.7 743.7 710 736.4zM250 580.3L241.8 592.4 231.8 580.1zM228.4 604.6L241.8 592.4 242.3 606zM251.4 592.4L265.1 580.5 267.7 590.3zM251.4 592.4L267.7 590.3 262.7 605.2zM251.4 592.4L262.7 605.2 242.3 606zM241.8 592.4L251.4 592.4 242.3 606zM172.7 586.5L155.8 578.6 175.4 580.9zM287.3 572.8L280.9 589.9 269.6 580zM155.8 578.6L150 568.7 158.6 561.6zM607.9 565.5L611.6 568.8 607.6 570.5zM304.5 580.5L316.4 585.5 303.3 593.4zM316.4 585.5L327.6 588.4 321.6 603.1zM327.6 588.4L321.3 573.2 333.5 579.9z"/>
<path fill="#33575d" stroke="#33575d" d="M571.3 475.3L582.6 439.8 594.6 459.9zM784.1 465.4L785.7 455.2 785.7 491.1zM657.2 509.7L657 516.3 651.4 518.2zM657 516.3L661.3 525.8 656.2 522.5zM781.6 487.5L783.2 484.3 785.7 491.1zM597.7 499.7L601.5 503.6 597.4 509.1zM780.7 493.1L781.6 487.5 785.7 491.1zM604.4 453.2L610.1 460.2 601 459zM602 496.9L605 490.9 610.1 500.6zM618.2 480.5L625 485.3 617.8 483.6zM601.2 465.8L597.4 471.9 594.6 459.9zM598 539.4L601.8 531.4 604.3 538zM667.4 517L657 516.3 659.9 510.3zM640.8 498.1L637.9 504.2 636.5 498.7zM631.5 510.3L632.5 506.3 637.2 509.8zM631.5 510.3L620.9 511.5 623.8 506.2zM782.8 528.3L780.6 525.7 784.8 519.3zM778.6 483.4L783.2 484.3 781.6 487.5zM783.2 484.3L780.4 480.2 782.6 473.3zM778.6 483.4L780.4 480.2 783.2 484.3zM778.3 466.5L783.3 460.2 784.1 465.4zM597.4 471.9L600.1 480.3 595.3 484.6zM601.2 511.6L598.2 517.1 597.4 509.1zM615 498.7L613.5 492.3 621 493.1zM623.1 461.1L626.4 451.3 630.7 458.8zM614.6 457.3L614.9 465.6 610.1 460.2zM598.2 517.1L608.2 516.3 602.2 525.5zM631.5 510.3L624 518.6 620.9 511.5zM674.3 518.4L667.4 517 668.3 513.7zM639.4 528.6L637 536.1 630.3 530.9zM649.5 524.8L650.8 529.4 644 529zM650.8 529.4L647.9 538.5 644 529zM633.8 519.3L631.5 510.3 637.2 509.8zM633.8 519.3L638.7 520.1 637.1 524.5zM783.5 516.2L781.2 511.7 785.2 509.6zM776.5 515.9L774.1 516.5 775.5 511zM769.6 533.8L771.7 529.8 773.8 534.2zM769.6 533.8L773.8 534.2 772.3 538.9zM776.5 505.4L781.7 505.3 781.2 511.7zM638.1 454.4L644 452.8 644.1 459.5zM652.1 453.5L644 452.8 648.8 448.1zM644 452.8L650.6 458.6 644.1 459.5zM761.4 482.7L758.2 482.3 757.8 477.2zM754.3 480.2L758.2 482.3 755 487zM603.9 487.3L605.2 476.8 609.5 485.5zM615.2 511L618.1 502.8 620.9 511.5zM631.9 463.8L623.9 468.1 623.1 461.1zM624.6 491.5L622.7 493.2 621 493.1zM618.6 474.1L612.2 474.2 614.9 465.6zM612.2 474.2L608.2 466.4 614.9 465.6zM657.4 478.5L652.7 481.3 650.7 473zM646.8 485.3L643.9 478.7 652.7 481.3zM653.9 485.7L646.8 485.3 652.7 481.3zM646.8 485.3L653.9 485.7 652.1 491zM670.8 507.3L675.4 505 674.5 509.2zM675.1 500.7L670.8 507.3 665.6 503.9zM686.1 496L682.3 495.9 683.2 493.3zM771.7 529.8L776.3 528.5 775.8 530.4zM766.3 524L769.7 529.1 766.7 529.3zM771.1 480L771.2 482.3 767.5 478.4zM778.4 475.4L778.2 470.8 782.6 473.3zM778.2 470.8L780.5 470.2 782.6 473.3zM780.2 451.4L784.7 447.9 785.7 455.2zM818.8 597.1L783.6 420.1 782.7 410.2zM785.7 455.2L783.6 420.1 818.8 597.1zM185.6 542.4L202.9 539.3 205.6 562.5zM609.2 513.1L601.2 511.6 608.1 506.8zM618.6 474.1L622.5 474.2 618.2 480.5zM605.2 476.8L610.7 477.3 609.5 485.5zM614.9 526.2L611 524.5 611.2 516.4zM630.3 530.9L628.3 528.6 637.1 524.5zM666 454.5L662.9 461.4 659.6 454.5zM762.3 528.6L757.8 532.5 756.7 528.7zM776.7 526L772 524.7 776 519.1zM762.3 528.6L763.4 523.4 763.1 528.9zM751.3 493.2L755.2 491 755 495.5zM765.7 484.9L761.8 489.4 761.4 482.7zM763.7 495.8L760.8 492 765 491.5zM771.8 505.6L776.5 500.4 776.5 505.4zM766.3 496.1L771.6 492.1 773 496.5zM771.6 492.1L766.3 496.1 765 491.5zM775.6 483.1L773.6 487.9 771.2 482.3zM777.8 486.4L775.6 483.1 778.6 483.4zM778.6 483.4L775.6 483.1 776.8 478.9zM761.1 473.3L756.3 474 758 469.3zM760.5 464.5L764.6 466.5 758 469.3zM763.5 450.3L766.5 449.7 764.3 456.3zM655.3 499.3L658.8 502.6 650 506.4zM658.8 502.6L665.6 503.9 659.9 510.3zM654.2 471.3L659.3 472.9 657.4 478.5zM654.2 471.3L650.7 473 646.8 468.4zM675.1 500.7L676.6 502.7 675.4 505zM679.6 493.2L683.1 491.6 683.2 493.3zM773.5 474.6L769.2 474.2 769.3 470.9zM776.8 478.9L773.5 474.6 778.4 475.4zM769.6 461.9L776.4 464.1 771 466.3zM753.5 458.6L751.3 454 756.9 454.2zM620.8 516.2L621.1 520.4 611.2 516.4zM672.1 481.3L674.6 474.9 675 478.8zM669.9 471.1L674.6 474.9 665.3 477.2zM676.9 478.9L676.9 482 675 478.8zM751.3 454L752.7 450.4 756.9 454.2zM674.6 474.9L678.8 474.7 676.9 478.9zM674 486L676.9 482 675.3 486.4zM680.3 478.4L681.6 482.8 676.9 482zM675.4 458.5L675.1 454 677.8 453.9zM676.9 450.8L675.1 454 673.4 452.1zM673.5 463.5L675.4 458.5 679.1 461.8zM675.4 458.5L673.5 463.5 673 459.5zM682.4 483.3L681.9 486.6 681.6 482.8zM683.4 472.3L680.9 468.7 684.2 467.8zM684.2 467.8L680.9 468.7 681.8 466.5zM680.9 468.7L680.7 474.7 678.8 474.7z"/>
<path fill="#2a4b51" stroke="#2a4b51" d="M784.5 557.6L796.6 562 790.7 565zM784.5 557.6L777.7 554 782.4 549.7zM631.6 478L628.4 486.9 625.8 479.2zM598 539.4L579.3 558.4 581.1 528zM158.6 561.6L150.3 549.1 175 540.9zM199.9 575.7L216.9 570.3 206.1 587zM628.2 445.7L628.8 439.4 632.7 441.6zM608.1 506.8L601.5 503.6 610.1 500.6zM618.1 502.8L621.6 499.7 623.8 506.2zM617.8 483.6L625 485.3 621 493.1zM615.2 552.9L615 543.6 620.3 552zM615 543.6L615.2 552.9 607.6 546.3zM609 536.2L604.3 538 605.8 530.2zM619.2 541.6L625.6 542.4 620.3 552zM619.8 558.8L615.2 552.9 620.3 552zM615.2 552.9L619.8 558.8 614.3 557.9zM576.5 565.8L560 562 579.3 558.4zM782.8 569.3L784.5 557.6 790.7 565zM769.5 544.3L773.2 549.2 767.4 550.8zM764.7 542.8L769.5 544.3 762.7 547.5zM781.2 456.8L783.3 460.2 777.8 459.5zM745.2 412.9L743.1 419.4 738.8 413.2zM182.4 571.3L191.5 591.8 175.4 580.9zM600.8 447.1L598.1 446.8 599.6 440.4zM601.5 503.6L601.2 511.6 597.4 509.1zM626.4 451.3L618.6 453.2 623.7 448.5zM624.6 557.8L619.8 558.8 620.3 552zM597.2 551.3L595 562 579.3 558.4zM601.7 568.1L595 562 603.8 563.6zM640.5 446.8L644.7 439.6 648.8 448.1zM672.5 417.3L651.4 439.6 640.9 438.1zM685 405.1L679 406.2 676.4 405.4zM756.1 409.2L754.7 403.7 758.2 403.8zM736.8 413.2L738.8 413.2 736.9 419.2zM280.9 589.9L278.8 600.4 267.7 590.3zM629.4 548.2L625.6 542.4 630.6 545.6zM607.9 565.5L607.9 558.8 614.3 557.9zM598.8 558.6L602.1 549.3 607.6 552.5zM600.6 544.9L602.1 549.3 597.2 551.3zM657.4 478.5L653.9 485.7 652.7 481.3zM682.3 495.9L682.2 497.9 675.8 498.1zM674.9 523.6L667.9 526.8 671.5 520.1zM771.3 565L768.1 563.8 774.7 561.1zM761.3 562L768.1 563.8 765.1 568.9zM752.8 549.4L757.3 544.5 762.7 547.5zM757.3 544.5L764.7 542.8 762.7 547.5zM752.4 542.1L757.3 544.5 752.8 549.4zM673.3 426.8L675.7 431.8 671 438.3zM723.3 406L725.5 408.3 718.5 410.3zM610.7 477.3L617.8 483.6 609.5 485.5zM610.7 477.3L618.2 480.5 617.8 483.6zM614.9 526.2L615.4 533.2 605.8 530.2zM628.3 528.6L623 536.5 619.7 530.2zM651 500L655.3 499.3 650 506.4zM763.4 523.4L762.3 528.6 759.5 524.2zM763.4 523.4L766.5 518.5 766.3 524zM757.2 497.7L760.5 500.8 756.1 500.2zM771 466.3L774.2 469 769.3 470.9zM764.6 466.5L771 466.3 769.3 470.9zM673 438.6L678.6 435.9 678.6 439.5zM776.9 423L774.4 417.1 780.2 418.6zM753.7 412.7L748.2 415.9 751.6 409.8zM703.7 406.5L698.9 405 706.6 405.6zM693.6 414.6L691.1 411.3 696.1 408.2zM327.6 588.4L333.5 579.9 337.6 588.7zM280.9 589.9L304.5 580.5 303.3 593.4zM761.3 562L756.7 558.2 765.7 557.2zM756.7 558.2L752.8 549.4 762.7 547.5zM766.3 505.3L766.6 502.8 771.8 505.6zM679.8 414.6L684.1 418.9 678.2 417.2zM684.1 418.9L679.8 414.6 685.1 414.2zM748.2 415.9L745.8 417.9 745.2 412.9zM333.5 579.9L350.7 573.1 337.6 588.7zM621.1 520.4L614.9 526.2 611.2 516.4zM677.8 453.9L676.9 450.8 679.6 453.1zM665.3 477.2L670.3 484.6 660 486.9zM765.3 510.5L769.1 510.3 766.4 517zM765.3 510.5L761.9 516.4 760.9 510zM738.7 405.8L732.9 411.2 737.3 404.7zM762.8 417.4L755.6 420.2 758.8 414.9zM766.5 418.4L762.8 417.4 763.3 412.9zM310 567.9L321.3 573.2 304.5 580.5zM683.1 491.6L681.9 486.6 685.9 489.1z"/>
<path fill="#2d4e54" stroke="#2d4e54" d="M796.6 562L784.5 557.6 782.4 549.7zM231.8 580.1L220.6 586.4 216.9 570.3zM555.5 529.5L520 558 500.4 523.4zM582.6 439.8L598.1 446.8 594.6 459.9zM777.9 561.6L777.7 554 784.5 557.6zM626.4 438.5L672 411 640.9 438.1zM250 580.3L231.8 580.1 243.4 561.5zM628.2 445.7L623.7 448.5 626.4 438.5zM632.7 441.6L628.8 439.4 640.9 438.1zM607.9 558.8L607.6 552.5 614.3 557.9zM761.8 539.5L766.8 538.2 764.7 542.8zM673.3 426.8L671 438.3 664 439.2zM199.9 575.7L205.6 562.5 216.9 570.3zM205.6 562.5L199.9 575.7 192.2 565.6zM199.9 575.7L199.3 577.1 192.2 565.6zM252.5 562.6L265.1 580.5 250 580.3zM266.6 562.5L265.1 580.5 252.5 562.6zM604.4 453.2L600.8 447.1 609.2 447.9zM628.2 445.7L626.4 451.3 623.7 448.5zM609 536.2L615.4 533.2 614.1 539.1zM774.1 516.5L776.5 515.9 776 519.1zM644.7 439.6L640.5 446.8 640.9 438.1zM667.3 447.1L661.2 444.3 664 439.2zM674 448L667.3 447.1 676 442.1zM205.6 562.5L223.6 559.2 216.9 570.3zM223.6 559.2L231.8 580.1 216.9 570.3zM640 536.9L637 536.1 639.4 528.6zM758.8 486.4L758.2 482.3 761.4 482.7zM691.1 411.3L688.3 406.3 692.9 404zM725.5 408.3L721.1 414.3 718.5 410.3zM266.6 562.5L279.8 565.1 269.6 580zM279.8 565.1L287.3 572.8 269.6 580zM761.9 516.4L766.5 518.5 761.4 518.9zM677.3 445.2L676.9 450.8 674 448zM340.7 558.5L333.5 579.9 331.2 559.8zM765.7 557.2L756.7 558.2 762.7 547.5zM752.1 420L745.8 417.9 748.2 415.9zM340.7 558.5L350.7 573.1 333.5 579.9zM333.5 579.9L321.3 573.2 331.2 559.8zM321.3 573.2L311.7 564.7 331.2 559.8zM773.9 424.3L770.8 426.7 768.6 424zM703.7 414.8L698.7 414.5 702.8 408.2zM310 567.9L287.3 572.8 298 556.9zM310 567.9L304.5 580.5 287.3 572.8z"/>
<path fill="#213f42" stroke="#213f42" d="M510 737.5L559 775.2 498.8 782.6z"/>
<path fill="#2a454b" stroke="#2a454b" d="M559 775.2L510 737.5 536.5 729.6zM263.3 740.4L230 736.4 234.4 729.7zM270 735.8L263.3 740.4 234.4 729.7zM150.3 549.1L158.6 561.6 146.9 565.1z"/>
<path fill="#27454b" stroke="#27454b" d="M470 741L431.7 739.9 430 737.5zM767.7 764.9L742.8 818 728.7 769.1zM647.8 814.6L672 778.8 687.4 803.2zM675.7 743.7L672 778.8 640.8 746.3zM672 778.8L675.7 743.7 709.7 772.2zM241.8 592.4L228.4 604.6 220.6 586.4zM550 735.2L559 775.2 536.5 729.6zM596.4 777.6L620.6 773.2 623.2 803zM602.6 814L596.4 777.6 623.2 803zM596.4 777.6L574.5 741 590 739.5zM767.7 764.9L788.3 801.5 742.8 818zM788.3 801.5L808.3 765.1 827.1 799.4zM627 777L623.1 748.4 640.8 746.3zM623.1 748.4L627 777 620.6 773.2zM620.6 773.2L627 777 623.2 803zM627 777L647.8 814.6 623.2 803zM627 777L672 778.8 647.8 814.6zM267.7 590.3L278.8 600.4 262.7 605.2zM150 568.7L155.8 578.6 136.7 573.2zM300.8 604.9L280.9 589.9 303.3 593.4zM300.8 604.9L278.8 600.4 280.9 589.9zM609.5 571.5L609.5 573.2 607.6 570.5zM316.4 585.5L321.6 603.1 303.3 593.4zM610.7 574.3L609.5 573.2 609.5 571.5z"/>
<path fill="#1b2d33" stroke="#1b2d33" d="M-20 570L-16.5 571.7 -31.3 599.6zM-16.5 571.7L6.2 615.8 -31.3 599.6zM50 566L52.6 564 74.3 602.5zM481.7 730.5L509.3 685.5 510 737.5zM80 552L114.5 588.5 74.3 602.5zM136.7 573.2L144.2 590.9 129.7 579.3zM142.4 600L144.2 590.9 151 599.3zM352.4 586.8L410 554.2 382.3 619.1zM352.4 586.8L353.9 570.7 410 554.2zM352.4 586.8L350.7 573.1 353.9 570.7z"/>
<path fill="#27484e" stroke="#27484e" d="M796.6 562L785.2 509.6 818.8 597.1zM796.6 562L783 544.5 784.5 539.2zM520 558L555.5 529.5 540 560zM657 516.3L656.2 522.5 651.4 518.2zM615.2 552.9L607.6 552.5 607.6 546.3zM579.3 558.4L560 562 555.5 529.5zM767.4 550.8L773.2 549.2 768.6 555.8zM782.2 534.4L785.1 530.8 784.5 539.2zM615 543.6L619.2 541.6 620.3 552zM615 543.6L614.1 539.1 619.2 541.6zM614.3 557.9L619.8 558.8 616.9 564zM607.9 558.8L598.8 558.6 607.6 552.5zM638.7 520.1L641.9 524.9 637.1 524.5zM782.8 569.3L777.9 561.6 784.5 557.6zM766.8 538.2L761.8 539.5 766.5 537zM780.4 480.2L778.4 475.4 782.6 473.3zM784.1 465.4L783.3 460.2 785.7 455.2zM265.1 580.5L251.4 592.4 250 580.3zM598.1 446.8L598.7 454.2 594.6 459.9zM608.1 506.8L601.2 511.6 601.5 503.6zM614.6 457.3L623.1 461.1 620.5 464.5zM619.8 558.8L622.1 564 616.9 564zM579.3 558.4L595 562 593 569.5zM674.2 538.3L675.9 534.8 678.6 539zM665.1 542.1L672.4 546.1 670.7 549.4zM754.2 506.6L753.1 500.1 756.1 500.2zM756.5 520.4L761.4 518.9 759.5 524.2zM628.3 567.8L622.1 564 627.1 562.5zM607.9 565.5L607.6 570.5 601.7 568.1zM607.9 565.5L614.3 557.9 616.9 564zM628.3 567.8L620.7 567.6 622.1 564zM622.1 564L620.7 567.6 616.9 564zM778.2 451L775 455.2 772 451.6zM633.6 448.3L632.1 455.5 626.4 451.3zM627.4 536.5L628.3 528.6 630.3 530.9zM611.6 568.8L609.5 571.5 607.6 570.5zM620.7 567.6L611.6 568.8 616.9 564zM623.1 576.9L620.7 567.6 628.3 567.8zM690.4 550.1L695.5 547.8 694.7 551.6zM693.5 519.5L690.5 526.2 688 525.2zM686.1 483.1L688.6 487.1 685.9 489.1zM682.7 549.6L685.5 550.9 685.5 558zM761.8 489.4L765.7 484.9 767.7 486.8zM690 535.1L687.4 537.8 684.3 535.5zM696 523.1L690.5 526.2 693.5 519.5zM715.1 539.3L711.5 545.5 709.2 539.7zM748.5 561.6L756.7 558.2 752 565zM756.7 558.2L754.8 564.9 752 565zM758.6 533.6L763.1 528.9 764.5 535.3zM766.6 502.8L766.3 496.1 769.7 501zM697.5 530.4L702.2 528.1 699.6 532.1zM760.9 455.7L764.1 461.2 757.3 458.7zM654.1 465.8L654.2 471.3 646.8 468.4zM678.8 474.7L674.6 474.9 674 472.9zM699.9 523.1L704.6 525.4 702.2 528.1zM683.4 472.3L688.9 468.5 689.4 472.5zM681.8 466.5L677.6 465 679.1 461.8z"/>
<path fill="#2d5154" stroke="#2d5154" d="M776.8 541.7L783 544.5 782.4 549.7zM601.5 503.6L602 496.9 610.1 500.6zM602 496.9L601.5 503.6 597.7 499.7zM628.4 486.9L625 485.3 625.8 479.2zM627.8 473.4L631.9 463.8 634.5 472zM601 459L601.2 465.8 594.6 459.9zM614.1 539.1L615 543.6 607.6 546.3zM667.9 526.8L667.4 517 671.5 520.1zM618.6 453.2L614.6 457.3 613.8 451.6zM643.8 517.7L644.2 511.6 646.9 512.9zM780.6 520.3L776.7 526 776 519.1zM759.5 524.2L762.3 528.6 756.7 528.7zM780.5 470.2L778.3 466.5 784.1 465.4zM623.9 468.1L631.9 463.8 627.8 473.4zM608.2 516.3L611 524.5 602.2 525.5zM670.8 507.3L668.3 513.7 665.6 503.9zM757.3 544.5L752.4 542.1 756.6 538.2zM763.1 528.9L766.3 524 766.7 529.3zM683.2 454.2L679.6 453.1 683.3 451.4zM667.3 447.1L666 454.5 659.6 454.5zM757.9 506.1L754.2 506.6 756.1 500.2zM766.5 518.5L763.4 523.4 761.4 518.9zM774.2 493.4L771.6 492.1 773.6 487.9zM657.4 492.8L655.3 499.3 652.1 491zM676.6 502.7L679.2 502.8 675.4 505zM752.6 538.9L755.7 536.1 756.6 538.2zM750.8 497.7L755 495.5 753.1 500.1zM769.2 474.2L773.5 474.6 771.1 480zM765.3 510.5L764.7 507.6 769.1 510.3zM685.4 464.2L681.8 466.5 679.1 461.8z"/>
<path fill="#2a4b54" stroke="#2a4b54" d="M231.8 580.1L226.6 558.3 243.4 561.5zM654.7 444.7L661.2 444.3 659.6 454.5zM658.3 441.3L661.2 444.3 654.7 444.7zM661.2 444.3L658.3 441.3 664 439.2zM688.3 406.3L683.5 410.2 685 405.1zM748.4 408.3L748 404.5 751.6 409.8zM728.3 419.9L730.5 423.7 726.4 422.6zM762.2 436.3L760 443.2 755.1 438.3zM751.5 436.7L753.1 432.3 755.1 438.3zM723.3 406L718 406.1 725.3 405.1zM779.7 437.8L777.3 442.7 775.5 436.8zM778.6 447.3L783.2 441.1 784.7 447.9zM774.1 446.3L778.6 447.3 778.2 451zM778.6 447.3L774.1 446.3 777.3 442.7zM766.5 449.7L769.9 445.5 772 451.6zM679.5 450.1L677.3 445.2 681.4 445.5zM682.3 431.5L677.7 428.3 681.8 427.7zM678.6 435.9L675.7 431.8 682.3 431.5zM679.9 423.8L684.9 424.8 681.8 427.7zM756.1 409.2L753.7 412.7 751.6 409.8zM754.1 441.7L751.5 436.7 755.1 438.3zM705.8 410.8L703.7 406.5 706.6 405.6zM709.9 414.3L713 414.6 709.8 420.3zM767.1 432.6L766.4 438.6 762.2 436.3zM679.8 414.6L674.6 415.8 677.5 411.3zM679.9 423.8L684.1 418.9 684.9 424.8zM757.1 427.6L755.3 424.7 757.4 424.8zM755.3 424.7L757.1 427.6 751.3 426.4zM761.3 426.9L763.7 424.6 764 426.6zM745.2 412.9L745.8 417.9 743.1 419.4zM751.1 422.2L745.8 417.9 752.1 420zM753.1 432.3L748.5 428.3 751.3 426.4zM732.2 406L730.5 411.2 725.5 408.3zM723.6 420L720.6 419.8 721.1 414.3zM739.6 408.3L738.7 405.8 744.2 405.5zM766.5 418.4L769 417.8 768.6 424zM769 417.8L773.9 424.3 768.6 424zM778.7 427.9L783.8 429 782.5 431.6zM777.8 432L778.7 427.9 782.5 431.6z"/>
<path fill="#182d30" stroke="#182d30" d="M530.8 652.4L509.3 685.5 495.6 647zM554.8 617.2L530.8 652.4 516.8 607zM481.7 730.5L470 741 468.7 700z"/>
<path fill="#244245" stroke="#244245" d="M559 775.2L577.5 788.6 556.6 822.4zM596.4 777.6L577.5 788.6 559 775.2zM574.5 741L596.4 777.6 559 775.2zM674 577.8L670.1 574.1 675 574.2zM674 577.8L675 574.2 680.7 575.5zM652.9 574.6L647.5 577.8 650.3 570.2zM660.3 576L652.9 574.6 660.3 568.8zM637.1 572.5L635.9 577 630.8 570.7zM645.2 567.9L647.5 577.8 642 577.2zM627.6 578.2L626 577 630.8 570.7z"/>
<path fill="#2d4e51" stroke="#2d4e51" d="M721 749.2L755.7 731.2 728.7 769.1zM623.1 748.4L630 740.3 640.8 746.3z"/>
<path fill="#305457" stroke="#305457" d="M785.1 530.8L796.6 562 784.5 539.2zM772.3 538.9L769.5 544.3 769.4 538.8zM769.5 544.3L767.4 550.8 762.7 547.5zM644.1 459.5L650.6 458.6 646.8 468.4zM598.7 454.2L600.8 447.1 604.4 453.2zM625 485.3L624.6 491.5 621 493.1zM643.8 517.7L646.9 512.9 651.4 518.2zM666.4 536.3L665.1 542.1 664.1 539.2zM780.6 525.7L780.6 520.3 784.8 519.3zM769.6 533.8L766.5 537 764.5 535.3zM766.7 529.3L769.6 533.8 764.5 535.3zM643.9 478.7L646.8 485.3 641.1 486.4zM769.1 510.3L771.8 505.6 775.5 511zM772 455.2L771.4 458.5 764.3 456.3zM783.3 460.2L776.4 464.1 777.8 459.5zM763.4 470.9L764.6 466.5 769.3 470.9zM657.4 492.8L666.5 491.5 660 498.1zM657.2 463.9L654.1 465.8 653.9 458.5z"/>
<path fill="#335a5d" stroke="#335a5d" d="M785.7 491.1L783.2 484.3 782.6 473.3zM785.1 530.8L782.8 528.3 784.8 519.3zM639.4 528.6L630.3 530.9 637.1 524.5zM656.2 522.5L649.5 524.8 651.4 518.2zM614.1 503.5L615 498.7 618.1 502.8zM633.9 491.8L624.6 491.5 628.4 486.9zM782.2 534.4L778.1 530.6 782.8 528.3zM769.7 529.1L769.6 533.8 766.7 529.3zM777.7 495.8L774.2 493.4 780.7 493.1zM780.7 493.1L777.8 486.4 781.6 487.5zM775 455.2L778.2 451 781.2 456.8zM627.5 526.6L628.3 528.6 619.7 530.2zM757.8 532.5L755.7 536.1 754.2 532.7zM758.8 486.4L755.2 491 755 487zM756.2 463.4L753.5 458.6 757.3 458.7zM655.3 499.3L657.4 492.8 660 498.1zM653.9 485.7L657.4 492.8 652.1 491zM658.8 502.6L660 498.1 665.6 503.9zM657.2 463.9L653.9 458.5 662.9 461.4zM769.6 461.9L764.1 461.2 764.3 456.3zM752.7 450.4L758.5 449.7 756.9 454.2zM677.3 468.8L674 472.9 669.9 471.1zM677.6 465L677.3 468.8 673.5 464.5z"/>
<path fill="#2d4e57" stroke="#2d4e57" d="M226.6 558.3L232.8 540.3 243.4 561.5zM614 438.3L605.3 441.9 599.6 440.4zM182.4 571.3L179.2 557.4 192.2 565.6zM249 541.9L252.5 562.6 243.4 561.5zM605.3 441.9L600.8 447.1 599.6 440.4zM640.5 446.8L632.7 441.6 640.9 438.1zM770.6 411.2L765 409.3 768.5 405.1zM640.5 446.8L633.6 448.3 632.7 441.6zM633.6 448.3L626.4 451.3 628.2 445.7zM672.5 417.3L677.6 423.3 673.3 426.8zM783.6 420.1L783 414.7 782.7 410.2zM179.2 557.4L185.6 542.4 192.2 565.6zM779.7 437.8L782.5 431.6 783.4 437.8zM677.6 423.3L677.7 428.3 673.3 426.8zM675.7 431.8L677.7 428.3 682.3 431.5zM703.7 406.5L702.8 408.2 698.9 405zM713 414.6L709.9 414.3 709.7 410.4zM709.9 414.3L703.7 414.8 705.8 410.8zM674.6 415.8L678.2 417.2 672.5 417.3zM686.9 419.7L684.1 418.9 685.1 414.2zM756.6 447.8L754.1 441.7 760 443.2zM748.5 428.3L744.2 423.9 751.3 426.4zM737.3 404.7L732.2 406 725.3 405.1zM723.6 420L721.1 414.3 725.7 414.8zM764.7 442.5L766.4 438.6 768.1 440.7zM763.7 424.6L766.5 418.4 768.6 424zM769 417.8L766.5 418.4 768.1 412.7zM767.1 432.6L771.4 431.2 770.6 436.7zM771.4 431.2L775.5 436.8 770.6 436.7zM773.9 424.3L769 417.8 774.4 417.1zM777.8 432L771.4 431.2 774.2 428.3zM756.6 447.8L752.7 450.4 752 445.6zM770.8 426.7L764.9 431.5 764 426.6zM311.7 564.7L310 567.9 298 556.9z"/>
<path fill="#1e3036" stroke="#1e3036" d="M518.7 575.5L554.8 617.2 516.8 607z"/>
<path fill="#1b3033" stroke="#1b3033" d="M555.2 683.1L509.3 685.5 530.8 652.4zM578.8 601.7L592.8 617.4 575.3 639z"/>
<path fill="#2a4e51" stroke="#2a4e51" d="M661.3 525.8L656.6 529.2 656.2 522.5zM775.1 539.9L777.9 537 776.8 541.7zM639.6 468.1L636.1 460.6 644.1 459.5zM640.8 498.1L651 500 647.4 507.5zM768.1 563.8L765.7 557.2 768.6 555.8zM611 524.5L614.9 526.2 605.8 530.2zM769.2 474.2L767 473.8 769.3 470.9zM776.4 464.1L774.2 469 771 466.3zM658.8 502.6L655.3 499.3 660 498.1zM709.2 539.7L711.5 545.5 705.1 542.2zM685.9 530.3L686.7 529.5 688.6 531.7zM696.5 536.5L701.4 539.7 695.2 539.4zM691.4 535L693.9 533.1 694.5 536.1zM692 538L695.2 539.4 691.3 542.1zM701.4 539.7L703.1 534.7 704.3 537zM700.3 532.8L703.1 534.7 696.5 536.5z"/>
<path fill="#24454b" stroke="#24454b" d="M777.7 554L773.2 549.2 782.4 549.7zM777.9 561.6L775.6 560.1 777.7 554zM576.5 565.8L579.3 558.4 593 569.5zM676.3 554.8L685.5 558 676 561.3zM685.7 570.6L677.1 569.4 680.1 564.7zM774.7 561.1L775.6 560.1 777.9 561.6zM775 568.1L774.7 561.1 777.9 561.6zM622.1 564L624.6 557.8 627.1 562.5zM624.6 557.8L622.1 564 619.8 558.8zM601.7 568.1L607.6 570.5 605.3 576.8zM598 539.4L597.2 551.3 579.3 558.4zM595 562L597.2 551.3 598.8 558.6zM595 562L598.8 558.6 603.8 563.6zM676.3 554.8L673.3 562.1 670.1 554.7zM683.6 537.2L682.5 538.8 681.5 537.3zM675.9 534.8L676.1 531.7 682.3 532.7zM678.6 539L675.9 534.8 681.5 537.3zM696.8 568.1L692.2 561.3 697.3 560.8zM692.2 561.3L696.8 568.1 687.9 565.3zM690.5 570.7L685.7 570.6 687.9 565.3zM696.8 568.1L690.5 570.7 687.9 565.3zM690.4 550.1L687 543.2 693 545.7zM687 543.2L690.4 550.1 685.5 550.9zM684.3 535.5L683.6 537.2 681.5 537.3zM774.7 561.1L768.1 563.8 768.6 555.8zM692.2 561.3L694.5 555.2 697.3 560.8zM768.1 563.8L761.3 562 765.7 557.2zM674.5 551.5L680.6 548.6 676.3 554.8zM623.1 576.9L628.3 567.8 626 577zM620.7 567.6L623.1 576.9 617.9 577.4zM695.5 547.8L700 549 694.7 551.6zM700 549L699.3 545 705.1 542.2zM699.3 545L695.5 547.8 693 545.7zM708.5 563.9L714.3 555.1 713.4 563.1zM686.9 561.1L686.9 556.9 690.7 558.9zM685.5 550.9L686.9 556.9 685.5 558zM690.4 550.1L686.9 556.9 685.5 550.9zM686.9 556.9L694.5 555.2 690.7 558.9zM686.4 519.3L688 525.2 683.2 524.1zM682.7 549.6L680.6 548.6 682.4 543.6zM687 543.2L682.7 549.6 682.4 543.6zM679.5 545.9L678.6 539 682.4 543.6zM704.7 557.6L714.3 555.1 708.5 563.9zM684.3 535.5L687.4 537.8 683.6 537.2zM686.7 539.5L687.4 537.8 691.3 542.1zM704.7 557.6L702.9 563.3 697.3 560.8zM702.9 563.3L704.7 557.6 708.5 563.9zM714.2 566.7L710.7 573.7 708.5 563.9zM699.3 545L701.4 539.7 705.1 542.2zM694.5 555.2L699.2 554.6 697.3 560.8zM699.2 554.6L704.7 557.6 697.3 560.8zM699.2 554.6L694.5 555.2 694.7 551.6zM692 538L694.5 536.1 695.2 539.4zM713.2 525.6L709.2 529 709.7 525.5zM702.2 528.1L697.5 530.4 695.8 525.2zM751.7 556L756.7 558.2 748.5 561.6zM703.1 534.7L707.4 535.7 704.3 537zM703.1 528.2L704.6 525.4 706.1 529.2z"/>
<path fill="#2d4b4e" stroke="#2d4b4e" d="M755.7 731.2L767.7 764.9 728.7 769.1zM808.3 765.1L767.7 764.9 790.5 735zM670 735.7L675.7 743.7 640.8 746.3zM713.8 573.1L714.2 566.7 717 568.7zM732.1 568.1L727.7 561 734 562.6z"/>
<path fill="#304e51" stroke="#304e51" d="M574.5 741L578.8 737.6 590 739.5z"/>
<path fill="#244548" stroke="#244548" d="M672 778.8L709.7 772.2 687.4 803.2zM718 815.3L709.7 772.2 728.7 769.1zM709.7 772.2L718 815.3 687.4 803.2zM788.3 801.5L767.7 764.9 808.3 765.1zM672 778.8L627 777 640.8 746.3zM690.5 570.7L696.8 568.1 690.6 572.5zM694.5 555.2L692.2 561.3 690.7 558.9zM686.9 561.1L685 562.5 685.5 558zM714.2 566.7L708.5 563.9 713.4 563.1zM705 571.1L702.9 563.3 708.5 563.9zM702.9 563.3L696.8 568.1 697.3 560.8z"/>
<path fill="#183033" stroke="#183033" d="M616.1 674.4L598.2 694 590.3 668zM550 735.2L555.2 683.1 591.2 704.7z"/>
<path fill="#152a30" stroke="#152a30" d="M151 599.3L165.2 600.2 157.6 604.5zM142.4 600L128.6 607.2 135.8 596.5z"/>
<path fill="#274b4e" stroke="#274b4e" d="M773.8 534.2L775.1 539.9 772.3 538.9zM687 543.2L686.7 539.5 691.3 542.1zM682.5 538.8L683.6 537.2 686.7 539.5zM674.2 538.3L666.4 536.3 674.4 535.4zM674.5 551.5L670.1 554.7 670.7 549.4zM687.7 528.3L690.5 526.2 691.6 527.7zM690.5 526.2L687.7 528.3 688 525.2zM685.9 530.3L685.1 525.8 686.7 529.5zM696 523.1L693.5 519.5 698.3 518.8zM709.7 548.4L704.7 557.6 700 549zM692 538L687.4 537.8 690 535.1zM692 538L691.4 535 694.5 536.1zM709.7 525.5L704.6 525.4 706.6 521.1z"/>
<path fill="#e7eded" stroke="#e7eded" d="M748.5 500.7L744.6 506.7 741.9 502.7zM744 510.4L741.8 506.6 744.6 506.7zM726.1 496.8L722.7 500 722.1 497.1zM750.1 514.3L751.8 519.5 746.9 519.7zM736.8 481.7L732.4 482.1 735.8 478.3zM732.4 482.1L732.3 478.8 735.8 478.3zM729.4 474.7L723.7 475.1 725.1 469.8zM702.6 469.7L706 464.9 707.4 470.3zM728.7 429.7L724.9 432.6 725 429.6zM685.7 433L686 437.4 682.6 435.8zM721.3 445L721.4 443.4 723.2 445.6zM749.6 460.3L743.7 461.9 744.4 454.4zM743.7 461.9L747.4 465.1 743.8 463.9zM747.4 465.1L751.6 463.5 753.7 469.3zM747.4 465.1L745.2 471.1 741.2 468.3zM688.8 413.7L693.6 414.6 691.1 418.8zM715.5 463.4L718.3 466.1 712.4 468.6zM705.3 488.4L706.3 481.5 708.8 488.1zM709.8 447.9L704.5 445.3 708.8 441.8zM705.3 437L704.3 443.2 701.1 436zM689.1 422.1L692.7 422.2 693 428.1zM701.7 446.8L704.3 443.2 704.5 445.3z"/>
<path fill="#dee4e4" stroke="#dee4e4" d="M744.6 506.7L748.5 500.7 750.5 506.9zM746 472.7L745.2 471.1 747.9 470.2zM711.3 466.1L706 464.9 708.4 460zM704.5 460.8L701.2 463.1 699.3 461zM704.5 460.8L705 455.1 708.4 460zM702.6 469.7L701.2 463.1 706 464.9zM729.6 438.6L724.9 432.6 731.9 431.9zM687.9 427.6L682.3 431.5 681.8 427.7zM729.1 456.9L727.4 463.4 725 461.4zM734.9 432.3L738.5 437 733.6 436zM706.8 479.4L705.5 474.8 710.4 472.4zM751.3 489.1L744.7 486.6 746.1 483.6zM689.1 422.1L693 428.1 687.9 427.6zM718.3 466.1L718.3 468.3 712.4 468.6zM686 437.4L689.7 438.7 686.6 441.6zM732.9 429.3L737.3 425.1 736.4 428.6zM744 427.2L748.5 428.3 745.9 433.3zM740.8 459L735.4 459.7 739.1 456.1zM744 510.4L741.4 514.7 738.7 509.1zM698.4 431.2L696.1 428.8 701.5 427.8z"/>
<path fill="#6f7872" stroke="#6f7872" d="M731.1 507.2L735 509.5 729.7 509.6zM720.6 502.4L716.6 497.2 722.1 497.1zM716.4 505.2L720.6 502.4 723.3 505.9zM684.3 511.4L688.1 507.6 688.1 510.2zM698.1 498.6L697.3 494 703.8 497.3zM730.5 515.8L729.6 520.3 726.4 516.3zM700.5 517.1L701.4 520.5 698.3 518.8zM689.4 514.9L688.6 518.7 685.4 515.1z"/>
<path fill="#2a4851" stroke="#2a4851" d="M175 540.9L150.3 549.1 160 533.3zM191.5 591.8L199.3 577.1 206.1 587zM199.3 577.1L199.9 575.7 206.1 587zM267.7 590.3L265.1 580.5 269.6 580zM155.8 578.6L158.6 561.6 175.4 580.9z"/>
<path fill="#305157" stroke="#305157" d="M179.2 557.4L158.6 561.6 175 540.9zM215.2 548.5L232.8 540.3 226.6 558.3zM252.5 562.6L250 580.3 243.4 561.5zM179.2 557.4L182.4 571.3 158.6 561.6zM199.3 577.1L182.4 571.3 192.2 565.6zM223.6 559.2L215.2 548.5 226.6 558.3zM223.6 559.2L205.6 562.5 215.2 548.5zM231.8 580.1L223.6 559.2 226.6 558.3zM279 556.7L293.7 547.4 298 556.9zM338 536L348.3 544.5 335.5 543.8zM279 556.7L279.8 565.1 266.6 562.5zM279.8 565.1L279 556.7 298 556.9zM287.3 572.8L279.8 565.1 298 556.9zM715.6 410.3L712.6 406.1 718 406.1zM740.6 421.7L737.3 425.1 736.9 419.2zM321.3 573.2L310 567.9 311.7 564.7z"/>
<path fill="#2d4b51" stroke="#2d4b51" d="M231.8 580.1L241.8 592.4 220.6 586.4zM574.5 741L550 735.2 578.8 737.6zM675.7 743.7L670 735.7 710 736.4zM182.4 571.3L199.3 577.1 191.5 591.8zM280.9 589.9L267.7 590.3 269.6 580zM251.4 592.4L241.8 592.4 250 580.3zM287.3 572.8L304.5 580.5 280.9 589.9zM316.4 585.5L321.3 573.2 327.6 588.4zM321.3 573.2L316.4 585.5 304.5 580.5z"/>
<path fill="#7b9fa2" stroke="#7b9fa2" d="M634.5 483.8L639.3 480.2 641.1 486.4z"/>
<path fill="#72999c" stroke="#72999c" d="M633.9 491.8L634.5 483.8 641.1 486.4zM668.1 460.5L673.5 464.5 663.9 466.7z"/>
<path fill="#2d5457" stroke="#2d5457" d="M617.5 448.6L618.6 453.2 613.8 451.6zM782.3 495.6L780.7 493.1 785.7 491.1zM650.6 458.6L644 452.8 652.1 453.5zM754.3 480.2L752.7 472.6 756.3 474zM778.1 530.6L776.3 528.5 780.6 525.7zM774.2 493.4L777.7 495.8 773 496.5zM769.2 474.2L771.1 480 767.5 478.4zM766.5 449.7L772 455.2 764.3 456.3zM624 518.6L620.8 516.2 620.9 511.5zM771.8 505.6L766.6 502.8 769.7 501z"/>
<path fill="#2d4548" stroke="#2d4548" d="M659.6 561.4L657.4 565.1 650.3 556.9zM624.6 557.8L633.9 558.4 627.1 562.5zM637.2 556.1L643.2 551.5 642.4 561.3zM657.2 542.6L654.7 552.8 651.6 545.5zM624.6 557.8L629.4 548.2 633.9 558.4zM647.6 558.4L649.6 551.8 650.3 556.9z"/>
<path fill="#2a4545" stroke="#2a4545" d="M657.4 565.1L659.6 561.4 660.3 568.8zM665.1 555L661.7 549.4 670.7 549.4zM670.1 554.7L665.1 555 670.7 549.4zM673.3 562.1L677.1 569.4 672.2 571.1zM654.7 552.8L657.2 542.6 661.7 549.4zM661.7 549.4L665.1 542.1 670.7 549.4zM643.2 551.5L636.6 551.5 636.6 542.2zM636.6 551.5L630.6 545.6 636.6 542.2zM649.6 551.8L647.6 558.4 643.2 551.5zM645.2 567.9L638.1 573.1 637.1 572.5z"/>
<path fill="#2a4548" stroke="#2a4548" d="M659.6 561.4L666.8 565.1 660.3 568.8zM647.6 558.4L647.9 565.9 642.4 561.3zM650.3 570.2L647.9 565.9 657.4 565.1zM642.4 561.3L645.2 567.9 636.4 564zM647.9 565.9L645.2 567.9 642.4 561.3z"/>
<path fill="#457278" stroke="#457278" d="M666.4 536.3L655.5 537.4 664.4 529.2zM673.9 528.2L672.9 530.5 667.9 526.8zM672.9 530.5L666.4 536.3 664.4 529.2zM674.9 523.6L677.6 525.1 673.9 528.2z"/>
<path fill="#4e7e81" stroke="#4e7e81" d="M655.5 537.4L666.4 536.3 664.1 539.2z"/>
<path fill="#24484e" stroke="#24484e" d="M681.5 530.5L679.6 529.4 683.2 524.1zM673.3 562.1L676.3 554.8 676 561.3zM678.6 539L682.5 538.8 682.4 543.6zM693 545.7L687 543.2 691.3 542.1zM672.9 530.5L676.1 531.7 674.4 535.4zM666.4 536.3L672.9 530.5 674.4 535.4zM675.9 534.8L682.3 532.7 681.5 537.3zM676.1 531.7L675.9 534.8 674.4 535.4zM674.5 551.5L676.3 554.8 670.1 554.7zM695.5 547.8L699.3 545 700 549zM688 525.2L685.1 525.8 683.2 524.1zM686.4 519.3L688.6 518.7 688 525.2zM676.3 554.8L682.7 549.6 685.5 558zM682.7 549.6L687 543.2 685.5 550.9zM679.5 545.9L674.5 551.5 672.4 546.1zM683.6 537.2L687.4 537.8 686.7 539.5zM691.4 535L690 535.1 688.6 531.7zM711.4 521.1L709.7 525.5 706.6 521.1zM701.4 539.7L699.3 545 695.2 539.4zM707.4 535.7L712.1 532.7 709.2 539.7zM711.5 545.5L709.7 548.4 705.1 542.2zM704.7 557.6L699.2 554.6 700 549zM700 549L699.2 554.6 694.7 551.6zM704.6 525.4L701.4 520.5 706.6 521.1zM704.6 525.4L709.7 525.5 706.1 529.2zM707.4 535.7L707.6 532.6 712.1 532.7zM709.2 529L707.6 532.6 706.1 529.2zM703.1 534.7L707.6 532.6 707.4 535.7zM692.7 530.1L691.4 535 688.6 531.7zM692.7 530.1L693.9 533.1 691.4 535zM696 523.1L699.9 523.1 695.8 525.2zM703.1 528.2L702.8 533.3 702.2 528.1z"/>
<path fill="#274e51" stroke="#274e51" d="M681.5 530.5L676.1 531.7 679.6 529.4zM691.6 527.7L690.5 526.2 695.8 525.2zM690.5 526.2L696 523.1 695.8 525.2zM693.9 533.1L697.5 530.4 699.6 532.1zM703.1 534.7L700.3 532.8 702.8 533.3z"/>
<path fill="#2d4848" stroke="#2d4848" d="M646.3 544.3L643.2 551.5 636.6 542.2zM661.7 549.4L665.1 555 660 558.8zM665.1 555L666.8 565.1 660 558.8zM643.2 551.5L647.6 558.4 642.4 561.3zM654.7 552.8L660 558.8 650.3 556.9zM654.7 552.8L661.7 549.4 660 558.8zM657.2 542.6L665.1 542.1 661.7 549.4zM637.2 556.1L636.6 551.5 643.2 551.5zM636.6 551.5L637.2 556.1 633.9 558.4zM649.6 551.8L643.2 551.5 646.3 544.3z"/>
<path fill="#48757b" stroke="#48757b" d="M657.2 542.6L655.5 537.4 664.1 539.2zM651.6 545.5L647.9 538.5 655.5 537.4zM647.9 538.5L651.6 545.5 646.3 544.3zM667.9 526.8L672.9 530.5 664.4 529.2zM674.9 523.6L674.3 518.4 676.7 520.4z"/>
<path fill="#4b787e" stroke="#4b787e" d="M657.2 542.6L651.6 545.5 655.5 537.4zM679.1 525.7L677.6 525.1 676.7 520.4z"/>
<path fill="#e4eaea" stroke="#e4eaea" d="M716.6 497.2L720.1 493.9 722.1 497.1zM747.7 511.1L744 510.4 744.6 506.7zM706 464.9L704.5 460.8 708.4 460zM722.8 469L725.6 464.5 725.1 469.8zM731.6 468L729.4 474.7 725.1 469.8zM735.7 469.3L734 473 731.6 468zM715.5 463.4L711.3 466.1 713.9 458.9zM715.5 463.4L712.4 468.6 711.3 466.1zM712.4 468.6L718.3 468.3 713.5 472.4zM748.5 448L749.1 441 752 445.6zM745.2 471.1L747.4 465.1 747.9 470.2zM740.8 459L743.7 461.9 737.8 464.7zM720.6 419.8L723.2 422.6 716.7 423.8zM725 429.6L723.2 422.6 726.4 422.6zM705 480.2L699.4 480.1 701.5 474.5zM709.4 435.9L713.9 438.7 708.8 441.8zM689.7 438.7L695.2 435.8 689.9 440.1z"/>
<path fill="#636f69" stroke="#636f69" d="M716.6 497.2L720.6 502.4 713.6 501.1zM707 510.7L704.3 507.7 708.4 504.8zM727.8 506.4L728.9 501.4 731.1 507.2zM727.8 506.4L731.1 507.2 729.7 509.6zM686.3 506L691.7 500.9 692.9 505.5zM720.6 502.4L722.7 500 723.3 505.9zM686.3 500.6L691.7 500.9 685.4 502.6zM691.7 500.9L686.3 500.6 689.4 497.9zM693 505.2L691.7 500.9 696.7 500.8zM717.8 524.5L718.4 518.9 723.7 524.6zM702.4 490.9L705.3 490.8 703.8 497.3zM684.3 511.4L679.9 509.7 681.5 507zM716.3 513.8L716.5 509.5 718.6 509.5zM716.3 513.8L721 515.5 718.4 518.9zM716.3 513.8L718.4 518.9 713.6 518.5zM693.6 487.4L690.4 492.8 690.6 489.4zM735.3 514.4L733.7 518.9 730.5 515.8zM739.4 521L740.6 526.2 736 523.1z"/>
<path fill="#606c69" stroke="#606c69" d="M712 495.7L716.6 497.2 713.6 501.1zM697.4 505.8L704.3 507.7 701.4 509.5zM701.1 500L697.4 505.8 696.7 500.8zM716.4 505.2L714.1 504.8 713.6 501.1zM714.1 504.8L710.6 511.4 708.4 504.8zM735 509.5L735.3 514.4 729.7 509.6zM735.3 514.4L735 509.5 738.7 509.1zM679.2 502.8L682.3 501.3 681.5 507zM698.1 498.6L701.1 500 696.7 500.8zM705.3 488.4L702.4 490.9 699.5 486.5zM691.5 511.2L688.1 507.6 692.9 505.5zM688.8 510.6L685.4 515.1 688.1 510.2zM736 523.1L732.7 528.6 730.7 524.4zM739.4 521L733.7 518.9 735.3 514.4z"/>
<path fill="#cfdbdb" stroke="#cfdbdb" d="M716.6 497.2L714.1 490.9 720.1 493.9zM752.7 472.6L746 472.7 747.9 470.2zM706 464.9L711.3 466.1 707.4 470.3zM701.2 463.1L704.5 460.8 706 464.9zM725 429.6L722.6 433 719 426.7zM750.1 514.3L747.7 511.1 750.9 510.6zM713.8 483.3L709 481.6 711.3 479.7zM686.9 419.7L688.8 413.7 691.1 418.8zM729.4 474.7L734 473 732.3 478.8zM718.3 468.3L722.8 469 719.1 475.5zM738.5 437L734.9 443.4 733.6 436zM718.3 466.1L723.4 460.8 725.6 464.5zM718.3 468.3L718.3 466.1 722.8 469zM709.8 423.8L704.2 423.7 709.8 420.3zM695.2 435.8L698.4 431.2 701.1 436z"/>
<path fill="#66726c" stroke="#66726c" d="M714.1 490.9L716.6 497.2 712 495.7zM728.9 501.4L727.8 506.4 723.3 505.9zM722.7 500L728.9 501.4 723.3 505.9zM720.6 502.4L716.4 505.2 713.6 501.1zM723.3 505.9L725.9 510.6 718.6 509.5zM688 492.1L686.1 496 683.2 493.3zM713.6 514.4L710.6 511.4 716.5 509.5zM735.3 514.4L730.5 515.8 729.7 509.6zM718.4 518.9L725.1 520.1 723.7 524.6zM725.1 520.1L721 515.5 726.4 516.3zM721 515.5L725.1 520.1 718.4 518.9zM717.8 524.5L711.4 521.1 713.6 518.5zM691.5 511.2L688.8 510.6 688.1 507.6zM688.6 518.7L689.4 514.9 693.5 519.5zM684.8 515.9L679.7 514.8 684.3 511.4zM745.9 525.3L749.7 525.9 744.7 527.7zM701.6 484.3L699.5 486.5 697.6 481.7zM741.4 514.7L739.4 521 735.3 514.4z"/>
<path fill="#5a6963" stroke="#5a6963" d="M704.3 507.7L707 510.7 701.4 509.5zM704.3 507.7L705.9 502 708.4 504.8zM714.1 504.8L711.9 502.4 713.6 501.1zM675.4 505L679.2 502.8 681.5 507zM691.7 500.9L693 505.2 692.9 505.5zM734.9 443.4L741.2 441.7 736.9 447.9zM705.3 490.8L705.3 488.4 708.8 488.1zM713.6 514.4L709.9 516.5 710.6 511.4zM698.1 498.6L695.3 495.5 697.3 494zM695.3 495.5L698.1 498.6 695.4 498.1zM688.6 487.1L693.6 487.4 690.6 489.4zM719.2 437L718.6 433.5 722.6 433zM741.4 514.7L735.3 514.4 738.7 509.1zM740.6 526.2L745.9 525.3 744.7 527.7zM740.1 488.6L744.7 486.6 742.7 492.5zM740.1 488.6L737.1 488.2 736.8 481.7z"/>
<path fill="#6c756f" stroke="#6c756f" d="M707 510.7L704 517.1 701.4 509.5zM696.1 515.1L700.5 517.1 698.3 518.8zM690.4 492.8L689.4 497.9 686.1 496zM688 492.1L690.4 492.8 686.1 496zM690.4 492.8L688 492.1 689.5 489.7zM716.3 513.8L713.6 514.4 716.5 509.5zM688.1 507.6L688.8 510.6 688.1 510.2zM690.4 492.8L695.3 495.5 689.4 497.9zM688.6 518.7L684.8 515.9 685.4 515.1zM733.7 518.9L736 523.1 730.7 524.4zM753.3 528L749.7 525.9 752.8 525.6zM745.9 525.3L740.6 526.2 743.6 521.5z"/>
<path fill="#214245" stroke="#214245" d="M677.1 569.4L685.7 570.6 680.7 575.5zM690.6 575.9L690.6 572.5 693.5 575.3zM710.7 573.7L714.2 566.7 713.8 573.1z"/>
<path fill="#274548" stroke="#274548" d="M623.1 748.4L596.4 777.6 590 739.5zM596.4 777.6L623.1 748.4 620.6 773.2z"/>
<path fill="#d2dede" stroke="#d2dede" d="M754.2 506.6L750.9 510.6 750.5 506.9zM728.9 501.4L732.2 500.8 731.1 507.2zM732.2 500.8L728.9 501.4 732.5 498.5zM723.7 475.1L723.7 478.5 719.1 475.5zM734.9 432.3L733.6 436 731.9 431.9zM684.9 424.8L687.9 427.6 681.8 427.7zM739.4 473.7L735.7 469.3 741.2 468.3zM744.2 484L741.3 477.1 745.5 477.1zM706.3 481.5L709 481.6 708.8 488.1zM740.6 430.9L743.9 436.3 738.5 437zM702.4 419.5L704.8 418.6 704.2 423.7z"/>
<path fill="#c6d5d5" stroke="#c6d5d5" d="M686.6 451.5L685.9 446.7 688.4 451zM735.7 469.3L737.8 464.7 741.2 468.3zM751.6 463.5L747.4 465.1 749.6 460.3zM743.8 463.9L747.4 465.1 741.2 468.3zM732.9 429.3L728.7 429.7 730.5 423.7zM730.8 441.2L729.6 438.6 733.6 436zM694.9 470.4L695.3 469.5 697.1 472.5zM705 480.2L701.6 484.3 699.4 480.1zM701.6 484.3L705 480.2 706.3 481.5zM697.5 443L695.4 442 701.1 436z"/>
<path fill="#c0cfd2" stroke="#c0cfd2" d="M681.4 445.5L684 441.7 685.9 446.7zM686.6 441.6L689.9 440.1 689.4 444.7zM700 468.7L701.5 474.5 697.1 472.5zM696.1 453.9L702.6 454.8 699.3 461zM692.3 453.7L692.5 455 689 455.3z"/>
<path fill="#ccd8d8" stroke="#ccd8d8" d="M684 441.7L678.6 439.5 682.6 435.8zM738.8 451.2L744.4 454.4 739.1 456.1zM689 455.3L686.6 451.5 688.4 451zM746 472.7L748.6 477 745.5 477.1zM748.6 477L751.8 481.7 746.1 483.6zM750.1 514.3L750.9 510.6 754.8 511.8zM744.2 472.3L739.4 473.7 741.2 468.3zM734.7 451.7L730.4 447.2 736.9 447.9zM730.4 447.2L734.7 451.7 730.1 449.5zM705.5 474.8L702.6 469.7 707.4 470.3zM687.9 427.6L685.7 433 682.3 431.5zM753.5 458.6L751.6 463.5 749.6 460.3zM747.9 470.2L747.4 465.1 753.7 469.3zM715.7 420.4L713.5 422.2 709.8 420.3zM743.6 521.5L745.1 514.5 746.9 519.7zM746.1 483.6L744.2 484 745.5 477.1zM732.2 466.2L732.8 460.1 737.8 464.7zM693.2 472.8L689 473.5 689.4 472.5zM715 446.8L717.2 441.3 721.3 445zM718.6 433.5L715.4 429.5 719 426.7zM696.7 417.4L692.7 422.2 691.1 418.8zM697.6 424.8L702.4 419.5 704.2 423.7z"/>
<path fill="#e1e7e7" stroke="#e1e7e7" d="M744.6 506.7L741.8 506.6 741.9 502.7zM752.7 472.6L747.9 470.2 753.7 469.3zM734.7 451.7L732.5 454.4 730.1 449.5zM741.3 477.1L744.2 472.3 745.5 477.1zM746.1 454L749.6 460.3 744.4 454.4zM737.8 464.7L743.8 463.9 741.2 468.3zM743.9 436.3L747.9 435.5 749.1 441zM726.1 496.8L733.2 493.9 732.5 498.5zM704.7 429.7L698.4 431.2 701.5 427.8z"/>
<path fill="#cfd8db" stroke="#cfd8db" d="M741.8 506.6L744 510.4 738.7 509.1zM747.7 511.1L750.1 514.3 745.1 514.5zM727.4 463.4L725.6 464.5 725 461.4zM748.6 431.7L753.1 432.3 751.5 436.7zM749.1 441L747.9 435.5 751.5 436.7zM706.8 479.4L705 480.2 705.5 474.8z"/>
<path fill="#d8e1e1" stroke="#d8e1e1" d="M737.6 502.6L741.8 506.6 738.7 509.1zM734.8 505.4L732.2 500.8 737.6 502.6zM722.8 469L723.7 475.1 719.1 475.5zM741.2 441.7L742.4 447.7 736.9 447.9zM748.6 477L752.7 472.6 754.3 480.2zM745.1 514.5L750.1 514.3 746.9 519.7zM746.1 454L745 450.6 749.1 451.1zM730.5 423.7L728.7 429.7 726.4 422.6zM724.9 432.6L729.6 438.6 725.2 438.2zM710.4 472.4L705.5 474.8 707.4 470.3zM705.5 474.8L701.5 474.5 702.6 469.7zM727.4 463.4L731.6 468 725.6 464.5zM702.6 469.7L700 468.7 701.2 463.1zM721 450.5L721.3 445 723.2 445.6zM720.6 419.8L716.7 423.8 715.7 420.4zM734.9 432.3L732.9 429.3 736.4 428.6zM711.3 479.7L706.8 479.4 710.4 472.4zM744.4 496.9L750.8 497.7 748.5 500.7zM693 428.1L689.3 433.5 687.9 427.6zM689.1 422.1L686.9 419.7 691.1 418.8zM744.7 486.6L744.2 484 746.1 483.6zM712.8 486.7L716 486.9 714.1 490.9zM735.7 469.3L732.2 466.2 737.8 464.7zM751.3 454L746.1 454 749.1 451.1zM704.2 423.7L709.8 423.8 709.4 427.6zM723.2 422.6L725 429.6 719 426.7zM745.1 514.5L741.4 514.7 744 510.4zM740.6 430.9L744 427.2 745.9 433.3zM704.3 443.2L705.3 437 708.8 441.8zM704.8 418.6L702.4 419.5 703.7 414.8zM698.4 431.2L704.7 429.7 704.9 434.3zM701.7 446.8L703.5 451.6 700.2 452.4zM697.6 424.8L692.7 422.2 696.7 417.4zM698.4 431.2L695.2 435.8 695.3 432.5z"/>
<path fill="#dbe1e1" stroke="#dbe1e1" d="M741.8 506.6L737.6 502.6 741.9 502.7zM725.4 490.8L726.1 496.8 722.1 497.1zM744.4 454.4L740.8 459 739.1 456.1zM689.3 433.5L690.7 436.2 686 437.4z"/>
<path fill="#c6d2d2" stroke="#c6d2d2" d="M728.9 501.4L726.1 496.8 732.5 498.5zM702.6 454.8L704.5 460.8 699.3 461zM752.7 472.6L748.6 477 746 472.7zM744.2 472.3L746 472.7 745.5 477.1zM735.4 459.7L732.8 460.1 732.5 454.4zM727.4 463.4L729.1 456.9 732.8 460.1zM732.9 429.3L734.9 432.3 731.9 431.9zM748.5 428.3L748.6 431.7 745.9 433.3zM713.8 441.3L709.8 447.9 708.8 441.8zM715.4 429.5L713.5 422.2 716.7 423.8zM692.7 422.2L697.6 424.8 693 428.1z"/>
<path fill="#d5dede" stroke="#d5dede" d="M741.3 477.1L736.8 481.7 735.8 478.3zM732.3 478.8L730.6 482.8 726.7 478zM751.8 519.5L749.7 525.9 746.9 519.7zM745 450.6L738.8 451.2 742.4 447.7zM745 450.6L746.1 454 744.4 454.4zM724.9 432.6L728.7 429.7 731.9 431.9zM728.7 429.7L725 429.6 726.4 422.6zM733.6 436L729.6 438.6 731.9 431.9zM731.6 468L734 473 729.4 474.7zM747.4 465.1L743.7 461.9 749.6 460.3zM750.8 497.7L753.1 500.1 748.5 500.7zM689.3 433.5L686 437.4 685.7 433zM746.1 454L751.3 454 749.6 460.3zM743.7 461.9L740.8 459 744.4 454.4zM730.4 447.2L726.6 441.8 732.2 444.9zM743.6 521.5L741.4 514.7 745.1 514.5zM704.5 445.3L704.3 443.2 708.8 441.8zM709.4 435.9L705.3 437 704.9 434.3zM698.7 414.5L696.7 417.4 693.6 414.6zM713.9 438.7L713.8 441.3 708.8 441.8z"/>
<path fill="#e7edea" stroke="#e7edea" d="M739.4 473.7L741.3 477.1 735.8 478.3zM734.8 505.4L737.6 502.6 738.7 509.1zM732.2 500.8L734.8 505.4 731.1 507.2zM723.7 478.5L723.7 475.1 726.7 478zM712.4 468.6L710.4 472.4 707.4 470.3zM712.4 468.6L713.5 472.4 710.4 472.4zM732.8 460.1L729.1 456.9 732.5 454.4zM701.5 474.5L700 468.7 702.6 469.7zM712.8 486.7L714.1 490.9 708.8 488.1zM737.3 425.1L732.9 429.3 730.5 423.7zM740.6 430.9L738.5 437 734.9 432.3zM701.6 484.3L706.3 481.5 705.3 488.4zM717.2 441.3L715 446.8 713.8 441.3zM702.4 419.5L697.6 424.8 696.7 417.4z"/>
<path fill="#2d4b54" stroke="#2d4b54" d="M158.6 561.6L182.4 571.3 175.4 580.9z"/>
<path fill="#33545d" stroke="#33545d" d="M232.8 540.3L249 541.9 243.4 561.5zM205.6 562.5L202.9 539.3 215.2 548.5zM310.6 542.1L293.7 547.4 299 534zM311.7 564.7L310.6 542.1 316.8 540.8z"/>
<path fill="#304e54" stroke="#304e54" d="M265.1 580.5L266.6 562.5 269.6 580z"/>
<path fill="#33575a" stroke="#33575a" d="M637.6 494.2L633.9 491.8 641.1 486.4zM675.4 505L676.5 510.6 674.5 509.2zM647.9 538.5L650.8 529.4 655.5 537.4zM614.1 539.1L623 536.5 619.2 541.6zM672.6 483.1L670.3 484.6 672.1 481.3z"/>
<path fill="#4b7b7e" stroke="#4b7b7e" d="M630.6 545.6L627.4 536.5 636.6 542.2zM679.1 525.7L676.7 520.4 682.8 520z"/>
<path fill="#27484b" stroke="#27484b" d="M595 562L601.7 568.1 593 569.5zM610.7 574.3L611.6 568.8 617.9 577.4z"/>
<path fill="#51635d" stroke="#51635d" d="M714.1 490.9L709 492.3 708.8 488.1zM695.6 510.5L697.4 505.8 701.4 509.5z"/>
<path fill="#69726c" stroke="#69726c" d="M709 492.3L714.1 490.9 712 495.7zM725.1 520.1L725.2 523 723.7 524.6zM679.9 509.7L679 512 676.5 510.6zM679.7 514.8L684.8 515.9 682.8 520zM733.7 518.9L729.6 520.3 730.5 515.8z"/>
<path fill="#606f69" stroke="#606f69" d="M709 492.3L712 495.7 707.3 496.8zM703.8 497.3L705.9 502 701.1 500zM730.5 515.8L725.9 510.6 729.7 509.6zM721 454.8L714.3 457.3 716.5 451.7zM701.4 520.5L700.5 517.1 704 517.1zM742.7 492.5L744.7 486.6 748.5 491.7zM725.5 489.3L725.4 490.8 720.4 488.2zM685.4 515.1L684.8 515.9 684.3 511.4zM722.6 433L718.6 433.5 719 426.7zM725.3 482.4L723.7 478.5 726.7 478zM716.6 461.2L714.3 457.3 721 454.8zM744.2 484L740.1 488.6 736.8 481.7z"/>
<path fill="#699096" stroke="#699096" d="M650.7 473L643.9 478.7 644.1 472.1zM675.1 454L673 459.5 673.4 452.1z"/>
<path fill="#638a90" stroke="#638a90" d="M652.7 481.3L643.9 478.7 650.7 473zM668.1 460.5L663.9 466.7 662.9 461.4zM675.1 454L675.4 458.5 673 459.5z"/>
<path fill="#7b9fa5" stroke="#7b9fa5" d="M639.3 480.2L643.9 478.7 641.1 486.4z"/>
<path fill="#24484b" stroke="#24484b" d="M682.5 538.8L686.7 539.5 682.4 543.6zM675.9 534.8L674.2 538.3 674.4 535.4zM695.5 547.8L690.4 550.1 693 545.7zM686.9 556.9L686.9 561.1 685.5 558zM694.5 555.2L686.9 556.9 690.4 550.1zM686.4 519.3L683.2 524.1 682.8 520zM680.6 548.6L682.7 549.6 676.3 554.8zM685.1 525.8L685.9 530.3 681.5 530.5zM684.3 535.5L685.9 530.3 688.6 531.7zM694.5 536.1L693.9 533.1 696.5 536.5zM704.7 557.6L709.7 548.4 714.3 555.1zM687.4 537.8L692 538 691.3 542.1zM707.6 532.6L703.1 534.7 702.8 533.3zM710.5 531.4L707.6 532.6 709.2 529zM697.5 530.4L692.7 530.1 695.8 525.2zM704.6 525.4L703.1 528.2 702.2 528.1zM710.5 531.4L716.1 529 712.1 532.7z"/>
<path fill="#69756f" stroke="#69756f" d="M701.1 500L705.9 502 704.3 507.7zM691.7 500.9L686.3 506 685.4 502.6zM716.4 505.2L723.3 505.9 718.6 509.5zM685.7 497.5L686.3 500.6 682.2 497.9zM695.4 498.1L691.7 500.9 689.4 497.9zM729.6 520.3L725.2 523 725.1 520.1zM721 515.5L716.3 513.8 718.6 509.5zM693.6 487.4L692.3 482.1 695.7 485.2zM679 512L679.7 514.8 676.1 514.5zM749.7 525.9L747.5 530.8 744.7 527.7zM733.7 518.9L739.4 521 736 523.1zM740.6 526.2L739.4 521 743.6 521.5z"/>
<path fill="#576663" stroke="#576663" d="M705.9 502L703.8 497.3 707.3 496.8zM711.9 502.4L712 495.7 713.6 501.1zM716.5 509.5L710.6 511.4 714.1 504.8zM704 517.1L700.5 517.1 701.4 509.5zM709 492.3L705.3 490.8 708.8 488.1zM688 492.1L683.1 491.6 685.9 489.1zM682.3 495.9L685.7 497.5 682.2 497.9zM698.1 498.6L703.8 497.3 701.1 500zM695.6 510.5L691.5 511.2 692.9 505.5zM707 510.7L709.9 516.5 704 517.1zM695.3 495.5L695.4 498.1 689.4 497.9zM742.1 530.4L740.6 526.2 744.7 527.7zM713.3 433.6L707.4 432 709.4 427.6z"/>
<path fill="#576660" stroke="#576660" d="M697.4 505.8L701.1 500 704.3 507.7zM705.9 502L711.9 502.4 708.4 504.8zM722.7 500L720.6 502.4 722.1 497.1zM725.9 510.6L727.8 506.4 729.7 509.6zM705.3 490.8L709 492.3 707.3 496.8zM697.4 505.8L693 505.2 696.7 500.8zM720.4 488.2L725.4 490.8 720.1 493.9zM730.6 482.8L732.4 482.1 729.8 487.2zM679.9 509.7L675.4 505 681.5 507zM679.9 509.7L676.5 510.6 675.4 505zM693.6 487.4L695.7 485.2 699.5 486.5zM729.6 520.3L733.7 518.9 730.7 524.4zM725.5 489.3L725.3 482.4 729.8 487.2zM694.8 513.9L691.5 511.2 695.6 510.5zM696.1 515.1L694.8 513.9 695.6 510.5zM717.2 441.3L719.2 437 721.4 443.4zM705 455.1L706.7 451.6 709.4 454.9zM709.4 435.9L707.4 432 713.3 433.6z"/>
<path fill="#5d6c66" stroke="#5d6c66" d="M686.3 506L681.5 507 685.4 502.6zM716.5 509.5L716.4 505.2 718.6 509.5zM716.4 505.2L716.5 509.5 714.1 504.8zM709.4 454.9L713.9 458.9 708.4 460zM699.5 486.5L695.7 485.2 697.6 481.7zM688.1 507.6L686.3 506 692.9 505.5zM688.1 507.6L684.3 511.4 686.3 506zM718.4 518.9L717.8 524.5 713.6 518.5zM689.4 497.9L685.7 497.5 686.1 496zM711.4 521.1L709.9 516.5 713.6 518.5zM728.2 490.8L725.5 489.3 729.8 487.2zM679 512L679.9 509.7 684.3 511.4zM684.8 515.9L686.4 519.3 682.8 520zM753.3 528L752.1 530.6 749.7 525.9zM716 486.9L712.8 486.7 713.8 483.3zM725.3 482.4L721.3 482.7 723.7 478.5zM726.6 441.8L721.4 443.4 725.2 438.2zM740.6 526.2L738.8 528.8 736 523.1zM715 446.8L721 450.5 716.5 451.7zM737.2 496.1L737 493.2 742.7 492.5z"/>
<path fill="#636f6c" stroke="#636f6c" d="M686.3 506L684.3 511.4 681.5 507zM697.4 505.8L695.6 510.5 692.9 505.5zM688.8 510.6L689.4 514.9 685.4 515.1z"/>
<path fill="#426f75" stroke="#426f75" d="M673.9 528.2L677.6 525.1 679.6 529.4z"/>
<path fill="#48787b" stroke="#48787b" d="M676.1 531.7L672.9 530.5 673.9 528.2z"/>
<path fill="#69726f" stroke="#69726f" d="M711.9 502.4L714.1 504.8 708.4 504.8zM721 515.5L725.9 510.6 726.4 516.3zM695.4 498.1L698.1 498.6 696.7 500.8zM713.6 514.4L716.3 513.8 713.6 518.5zM692.3 482.1L688.6 487.1 686.1 483.1z"/>
<path fill="#5d6966" stroke="#5d6966" d="M711.9 502.4L705.9 502 707.3 496.8zM725.9 510.6L730.5 515.8 726.4 516.3zM685.4 515.1L684.3 511.4 688.1 510.2zM697.3 494L702.4 490.9 703.8 497.3zM702.4 490.9L697.3 494 699.5 486.5zM700.5 517.1L696.1 515.1 701.4 509.5zM696.1 515.1L695.6 510.5 701.4 509.5zM709.9 516.5L713.6 514.4 713.6 518.5zM709.9 516.5L706.6 521.1 704 517.1zM725.2 523L729.6 520.3 730.7 524.4zM686.4 519.3L684.8 515.9 688.6 518.7zM752.1 530.6L747.5 530.8 749.7 525.9zM689.4 514.9L694.8 513.9 693.5 519.5z"/>
<path fill="#6c7572" stroke="#6c7572" d="M712 495.7L711.9 502.4 707.3 496.8zM690.4 492.8L693.6 487.4 697.3 494z"/>
<path fill="#c9d5d5" stroke="#c9d5d5" d="M722.7 500L726.1 496.8 728.9 501.4zM748.5 500.7L753.1 500.1 750.5 506.9zM714.1 490.9L720.4 488.2 720.1 493.9zM705 455.1L704.5 460.8 702.6 454.8zM751.8 519.5L750.1 514.3 752.7 515.8zM745.2 471.1L744.2 472.3 741.2 468.3zM725.6 464.5L723.4 460.8 725 461.4zM729.1 456.9L726.2 451.9 732.5 454.4zM732.8 460.1L735.4 459.7 737.8 464.7zM737.2 496.1L740.9 497.9 737.6 502.6zM745.3 443L742.4 447.7 741.2 441.7zM743.7 461.9L743.8 463.9 737.8 464.7zM728.7 429.7L732.9 429.3 731.9 431.9zM692.3 482.1L686.1 483.1 689 478zM732.2 466.2L735.7 469.3 731.6 468zM718.3 466.1L716.6 461.2 723.4 460.8zM747.9 435.5L748.6 431.7 751.5 436.7zM738.5 437L743.9 436.3 741.2 441.7zM713.5 422.2L709.8 423.8 709.8 420.3zM704.8 418.6L709.9 414.3 709.8 420.3zM706.3 481.5L706.8 479.4 709 481.6zM699.4 480.1L693.3 479.2 693.6 477.4zM690.7 436.2L689.7 438.7 686 437.4zM693.4 448.7L692.3 453.7 688.4 451zM684.2 467.8L688.6 466 688.8 467.2zM698.7 414.5L702.4 419.5 696.7 417.4zM697.6 424.8L696.1 428.8 693 428.1z"/>
<path fill="#546360" stroke="#546360" d="M710.6 511.4L707 510.7 708.4 504.8zM703.8 497.3L705.3 490.8 707.3 496.8zM693 505.2L697.4 505.8 692.9 505.5zM689.5 489.7L688 492.1 685.9 489.1zM677 517.3L679.7 514.8 682.8 520zM725.9 510.6L721 515.5 718.6 509.5zM686.3 500.6L685.7 497.5 689.4 497.9zM686.3 500.6L682.3 501.3 682.2 497.9zM681.5 507L682.3 501.3 685.4 502.6zM691.7 500.9L695.4 498.1 696.7 500.8zM702.4 490.9L705.3 488.4 705.3 490.8zM693.5 519.5L696.1 515.1 698.3 518.8zM688.6 487.1L689.5 489.7 685.9 489.1zM730.1 528.5L725.2 523 730.7 524.4zM692.3 482.1L693.6 487.4 688.6 487.1zM694.8 513.9L696.1 515.1 693.5 519.5zM749.7 525.9L745.9 525.3 746.9 519.7zM701.6 484.3L705.3 488.4 699.5 486.5zM739.4 521L741.4 514.7 743.6 521.5z"/>
<path fill="#5a6663" stroke="#5a6663" d="M727.8 506.4L725.9 510.6 723.3 505.9zM749.7 525.9L751.8 519.5 752.8 525.6zM685.7 497.5L682.3 495.9 686.1 496zM710.6 511.4L709.9 516.5 707 510.7zM679.7 514.8L679 512 684.3 511.4zM694.8 513.9L689.4 514.9 691.5 511.2z"/>
<path fill="#335151" stroke="#335151" d="M717 568.7L721.2 564.3 723.9 571.2zM739.2 564.3L738 553.8 744.3 561.4zM738 553.8L739.2 564.3 734 562.6zM746.3 554.7L748.5 561.6 744.3 561.4zM719.8 556.2L727.7 561 721.2 564.3zM738.5 569.9L732.1 568.1 739.2 564.3zM714.3 555.1L709.7 548.4 717.2 550.1zM746.3 554.7L751.7 556 748.5 561.6zM727.7 561L731.3 569.3 723.9 571.2z"/>
<path fill="#c9d5d8" stroke="#c9d5d8" d="M684.5 447.7L681.4 445.5 685.9 446.7zM681.4 445.5L679.9 442.7 684 441.7zM735 509.5L734.8 505.4 738.7 509.1zM731.1 507.2L734.8 505.4 735 509.5zM701.2 463.1L698.1 465.6 699.3 461zM684.5 447.7L679.5 450.1 681.4 445.5zM744.2 472.3L745.2 471.1 746 472.7zM745.3 443L748.5 448 742.4 447.7zM709 481.6L712.8 486.7 708.8 488.1zM693.7 465.4L688.9 468.5 688.8 467.2zM692.3 482.1L693.3 479.2 697.6 481.7zM689 473.5L693.2 472.8 693.6 477.4zM706.3 481.5L705 480.2 706.8 479.4zM696.1 428.8L695.3 432.5 693 428.1zM692.3 453.7L693.4 448.7 695.3 452.1zM692.7 422.2L689.1 422.1 691.1 418.8z"/>
<path fill="#bdcccc" stroke="#bdcccc" d="M684.5 447.7L686.6 451.5 683.3 451.4zM695.1 460.2L696.1 453.9 699.3 461z"/>
<path fill="#c6d2d5" stroke="#c6d2d5" d="M686.6 451.5L684.5 447.7 685.9 446.7zM747.7 511.1L744.6 506.7 750.5 506.9zM698.1 465.6L695.1 460.2 699.3 461zM688.6 461.7L689 455.3 692.8 460.7zM689 455.3L683.2 454.2 686.6 451.5zM737.6 502.6L740.9 497.9 741.9 502.7zM693.7 465.4L688.6 466 688.6 461.7zM688.6 466L693.7 465.4 688.8 467.2zM693.7 465.4L695.1 460.2 698.1 465.6zM741.3 477.1L744.2 484 736.8 481.7zM721.3 445L717.2 441.3 721.4 443.4zM695.4 442L695.2 435.8 701.1 436z"/>
<path fill="#b7c9cc" stroke="#b7c9cc" d="M679.9 442.7L678.6 439.5 684 441.7zM701.2 463.1L700 468.7 698.1 465.6zM701.5 474.5L699.4 480.1 697.1 472.5z"/>
<path fill="#dee7e7" stroke="#dee7e7" d="M744.4 496.9L748.5 500.7 741.9 502.7zM711.3 466.1L712.4 468.6 707.4 470.3zM751.8 481.7L751.3 489.1 746.1 483.6zM735.4 459.7L740.8 459 737.8 464.7zM715 446.8L721.3 445 721 450.5zM703.5 451.6L701.7 446.8 704.5 445.3zM695.3 432.5L695.2 435.8 690.7 436.2zM690.7 436.2L695.2 435.8 689.7 438.7z"/>
<path fill="#c3d2d2" stroke="#c3d2d2" d="M750.9 510.6L747.7 511.1 750.5 506.9zM732.5 454.4L726.2 451.9 730.1 449.5zM735.4 459.7L732.5 454.4 739.1 456.1zM732.2 444.9L734.9 443.4 736.9 447.9zM718.6 478.5L713.5 472.4 719.1 475.5zM687.9 427.6L689.3 433.5 685.7 433zM689.1 422.1L687.9 427.6 684.9 424.8zM748.6 431.7L747.9 435.5 745.9 433.3zM747.9 435.5L743.9 436.3 745.9 433.3zM745.3 443L743.9 436.3 749.1 441zM704.2 423.7L704.8 418.6 709.8 420.3zM696.1 453.9L695.3 452.1 700.2 452.4zM693.2 472.8L694.9 470.4 697.1 472.5zM688.9 468.5L693.2 472.8 689.4 472.5zM752.7 450.4L748.5 448 752 445.6zM743.9 436.3L740.6 430.9 745.9 433.3zM699.4 480.1L701.6 484.3 697.6 481.7zM705.5 474.8L705 480.2 701.5 474.5zM693 428.1L695.3 432.5 689.3 433.5zM715.4 429.5L716.7 423.8 719 426.7zM713.5 422.2L715.4 429.5 709.4 427.6zM688.9 468.5L684.2 467.8 688.8 467.2zM696.1 428.8L697.6 424.8 701.5 427.8zM695.2 435.8L695.4 442 689.9 440.1z"/>
<path fill="#d2dbdb" stroke="#d2dbdb" d="M747.7 511.1L745.1 514.5 744 510.4zM748.6 477L746.1 483.6 745.5 477.1zM751.8 481.7L748.6 477 754.3 480.2zM720.1 493.9L725.4 490.8 722.1 497.1zM726.2 451.9L729.1 456.9 725.5 454zM724.9 432.6L725.2 438.2 722.6 433zM730.4 447.2L732.2 444.9 736.9 447.9zM726.2 451.9L730.4 447.2 730.1 449.5zM713.5 472.4L718.3 468.3 719.1 475.5zM745 450.6L748.5 448 749.1 451.1zM749.1 441L754.1 441.7 752 445.6zM732.2 466.2L727.4 463.4 732.8 460.1zM751.3 454L753.5 458.6 749.6 460.3zM752.7 450.4L751.3 454 749.1 451.1zM693.6 414.6L696.7 417.4 691.1 418.8zM695.3 432.5L690.7 436.2 689.3 433.5zM704.9 434.3L705.3 437 701.1 436zM705.3 437L709.4 435.9 708.8 441.8z"/>
<path fill="#e1eae7" stroke="#e1eae7" d="M737.6 502.6L732.2 500.8 732.5 498.5zM738.8 451.2L745 450.6 744.4 454.4zM716 486.9L720.4 488.2 714.1 490.9zM734.9 443.4L738.5 437 741.2 441.7zM727.4 463.4L732.2 466.2 731.6 468zM743.9 436.3L745.3 443 741.2 441.7zM748.6 431.7L748.5 428.3 753.1 432.3zM709.8 423.8L713.5 422.2 709.4 427.6zM702.4 419.5L698.7 414.5 703.7 414.8z"/>
<path fill="#30515a" stroke="#30515a" d="M770.6 436.7L775.5 436.8 774.1 443zM705.8 410.8L706.6 405.6 709.7 410.4zM249 541.9L263.7 545 252.5 562.6zM263.7 545L266.6 562.5 252.5 562.6zM279.5 533L293.7 547.4 270.9 547.8zM293.7 547.4L279 556.7 270.9 547.8zM633.6 448.3L640.5 446.8 638.1 454.4zM783.6 420.1L783.8 429 783.4 422.6zM712.6 406.1L706.6 405.6 725.3 405.1zM721.1 414.3L725.5 408.3 725.7 414.8zM734.2 418.8L730.5 423.7 728.3 419.9zM768.1 440.7L770.6 436.7 774.1 443zM702.8 408.2L703.7 406.5 705.8 410.8zM340.7 558.5L331.2 559.8 335.5 543.8zM677.5 411.3L674.6 415.8 672 411zM769 417.8L773.4 415.7 774.4 417.1zM728.3 419.9L723.6 420 725.7 414.8zM760 443.2L764.7 442.5 762.7 446zM755.6 420.2L755.3 424.7 751.1 422.2zM331.2 559.8L311.7 564.7 316.8 540.8zM771.4 431.2L770.8 426.7 774.2 428.3zM778.7 427.9L773.9 424.3 776.9 423zM783.8 429L778.7 427.9 783.4 422.6zM698.7 414.5L693.6 414.6 696.1 408.2z"/>
<path fill="#dbe4e4" stroke="#dbe4e4" d="M723.7 475.1L722.8 469 725.1 469.8zM742.4 447.7L738.8 451.2 736.9 447.9zM738.8 451.2L734.7 451.7 736.9 447.9zM723.7 475.1L729.4 474.7 726.7 478zM726.2 451.9L721 450.5 723.2 445.6zM721 450.5L726.2 451.9 725.5 454zM725 429.6L724.9 432.6 722.6 433zM737.2 496.1L737.6 502.6 732.5 498.5zM734 473L739.4 473.7 735.8 478.3zM686.9 419.7L689.1 422.1 684.9 424.8zM718.3 466.1L725.6 464.5 722.8 469zM721.4 443.4L726.6 441.8 723.2 445.6zM704.3 443.2L697.5 443 701.1 436zM733.2 493.9L726.1 496.8 728.2 490.8zM698.4 431.2L704.9 434.3 701.1 436zM701.7 446.8L697.5 443 704.3 443.2z"/>
<path fill="#6f7e78" stroke="#6f7e78" d="M713.9 458.9L711.3 466.1 708.4 460zM714.3 457.3L713.9 458.9 709.4 454.9zM725.2 438.2L719.2 437 722.6 433zM721.3 482.7L716 486.9 713.8 483.3zM734.9 443.4L730.8 441.2 733.6 436zM744.7 486.6L751.3 489.1 748.5 491.7zM714.3 457.3L716.6 461.2 713.9 458.9zM726.6 441.8L730.8 441.2 732.2 444.9zM704.7 429.7L704.2 423.7 709.4 427.6zM706.7 451.6L712.9 450 709.4 454.9zM706.7 451.6L709.8 447.9 712.9 450zM737 493.2L740.1 488.6 742.7 492.5zM737 493.2L733.2 493.9 737.1 488.2z"/>
<path fill="#bdcccf" stroke="#bdcccf" d="M685.9 446.7L689.4 444.7 688.4 451zM686.6 451.5L683.2 454.2 683.3 451.4zM686 437.4L686.6 441.6 684 441.7zM695.3 469.5L693.7 465.4 698.1 465.6zM699.4 480.1L693.6 477.4 697.1 472.5zM685.5 460L689 455.3 686.2 460.1z"/>
<path fill="#bdcfcf" stroke="#bdcfcf" d="M689.4 444.7L692.6 447.2 688.4 451z"/>
<path fill="#63726c" stroke="#63726c" d="M705 455.1L709.4 454.9 708.4 460zM725.5 454L723.4 460.8 721 454.8zM721.3 482.7L725.5 489.3 720.4 488.2zM751.3 489.1L751.3 493.2 748.5 491.7zM725.3 482.4L725.5 489.3 721.3 482.7zM713.3 433.6L718.6 433.5 719.2 437zM740.6 430.9L734.9 432.3 736.4 428.6zM737.3 425.1L740.6 430.9 736.4 428.6zM709.8 447.9L706.7 451.6 704.5 445.3zM703.5 451.6L705 455.1 702.6 454.8zM703.5 451.6L706.7 451.6 705 455.1zM700.2 452.4L703.5 451.6 702.6 454.8z"/>
<path fill="#eaeded" stroke="#eaeded" d="M732.5 454.4L734.7 451.7 739.1 456.1zM725.6 464.5L731.6 468 725.1 469.8zM734 473L735.7 469.3 739.4 473.7zM716.6 461.2L718.3 466.1 715.5 463.4zM716.7 423.8L723.2 422.6 719 426.7z"/>
<path fill="#d2dbde" stroke="#d2dbde" d="M734.7 451.7L738.8 451.2 739.1 456.1zM716.7 423.8L713.5 422.2 715.7 420.4zM698.4 431.2L695.3 432.5 696.1 428.8z"/>
<path fill="#33545a" stroke="#33545a" d="M279 556.7L266.6 562.5 270.9 547.8zM266.6 562.5L263.7 545 270.9 547.8zM293.7 547.4L310.6 542.1 298 556.9zM335.5 543.8L331.2 559.8 316.8 540.8zM185.6 542.4L179.2 557.4 175 540.9zM348.3 544.5L340.7 558.5 335.5 543.8zM310.6 542.1L311.7 564.7 298 556.9z"/>
<path fill="#789ca2" stroke="#789ca2" d="M629.1 497.9L624.6 491.5 633.9 491.8zM673 459.5L673.5 463.5 668.1 460.5z"/>
<path fill="#304848" stroke="#304848" d="M636.6 551.5L629.4 548.2 630.6 545.6zM654.7 552.8L649.6 551.8 651.6 545.5z"/>
<path fill="#2a4245" stroke="#2a4245" d="M629.4 548.2L636.6 551.5 633.9 558.4zM652.9 574.6L650.3 570.2 660.3 568.8z"/>
<path fill="#6c7b75" stroke="#6c7b75" d="M713.5 472.4L711.3 479.7 710.4 472.4zM726.1 496.8L725.4 490.8 728.2 490.8zM721 450.5L725.5 454 721 454.8zM714.3 457.3L712.9 450 716.5 451.7zM737.2 496.1L742.7 492.5 740.9 497.9zM716 486.9L721.3 482.7 720.4 488.2zM718.6 478.5L713.8 483.3 711.3 479.7zM751.3 493.2L750.8 497.7 748.5 491.7zM732.4 482.1L737.1 488.2 729.8 487.2zM737.1 488.2L732.4 482.1 736.8 481.7zM713.8 483.3L712.8 486.7 709 481.6zM740.1 488.6L744.2 484 744.7 486.6zM713.9 438.7L713.3 433.6 719.2 437zM707.4 432L704.7 429.7 709.4 427.6z"/>
<path fill="#457275" stroke="#457275" d="M676.7 520.4L677 517.3 682.8 520z"/>
<path fill="#548487" stroke="#548487" d="M683.2 524.1L679.1 525.7 682.8 520z"/>
<path fill="#4e7e84" stroke="#4e7e84" d="M674.9 523.6L673.9 528.2 667.9 526.8z"/>
<path fill="#518187" stroke="#518187" d="M677.6 525.1L674.9 523.6 676.7 520.4z"/>
<path fill="#304b4b" stroke="#304b4b" d="M651.6 545.5L649.6 551.8 646.3 544.3z"/>
<path fill="#487578" stroke="#487578" d="M640 536.9L646.3 544.3 636.6 542.2zM640 536.9L647.9 538.5 646.3 544.3z"/>
<path fill="#214548" stroke="#214548" d="M694.5 555.2L690.4 550.1 694.7 551.6zM679.5 545.9L680.6 548.6 674.5 551.5z"/>
<path fill="#304b4e" stroke="#304b4e" d="M748.5 561.6L746.3 570.9 744.3 561.4zM723.2 574.2L713.8 573.1 717 568.7z"/>
<path fill="#3c5757" stroke="#3c5757" d="M740.3 542.1L743.6 549.5 734.1 547.1zM719.8 556.2L714.3 555.1 717.2 550.1zM736.9 538.9L735 535.7 737.4 534.9zM730.8 554.5L727.7 561 726 555.3zM730.8 554.5L738 553.8 734 562.6zM720.9 537.7L716.9 535.9 717.5 534.5zM746.3 541L743.6 549.5 740.3 542.1zM743.6 538.8L746.3 541 740.3 542.1z"/>
<path fill="#b7c6c9" stroke="#b7c6c9" d="M679.5 450.1L684.5 447.7 683.3 451.4zM692.5 455L695.1 460.2 692.8 460.7zM689 455.3L692.5 455 692.8 460.7zM700 468.7L695.3 469.5 698.1 465.6zM689 473.5L693.6 477.4 689 478zM688.9 468.5L693.7 465.4 695.3 469.5z"/>
<path fill="#cfd8d8" stroke="#cfd8d8" d="M682.3 431.5L685.7 433 682.6 435.8zM740.9 497.9L744.4 496.9 741.9 502.7zM744.2 472.3L741.3 477.1 739.4 473.7zM754.1 441.7L749.1 441 751.5 436.7zM748.5 448L745.3 443 749.1 441zM709 481.6L706.8 479.4 711.3 479.7zM726.6 441.8L730.4 447.2 723.2 445.6z"/>
<path fill="#b7c9c9" stroke="#b7c9c9" d="M689 455.3L688.6 461.7 686.2 460.1zM693.7 465.4L688.6 461.7 692.8 460.7zM688.6 466L685.4 464.2 688.6 461.7zM689.7 438.7L689.9 440.1 686.6 441.6zM696.1 453.9L700.2 452.4 702.6 454.8z"/>
<path fill="#72817b" stroke="#72817b" d="M744.4 496.9L742.7 492.5 748.5 491.7zM712.9 450L714.3 457.3 709.4 454.9zM721.4 443.4L719.2 437 725.2 438.2zM718.6 478.5L721.3 482.7 713.8 483.3zM725.4 490.8L725.5 489.3 728.2 490.8zM716.6 461.2L715.5 463.4 713.9 458.9zM723.4 460.8L716.6 461.2 721 454.8zM729.6 438.6L726.6 441.8 725.2 438.2zM712.9 450L715 446.8 716.5 451.7zM737.1 488.2L733.2 493.9 729.8 487.2zM706.7 451.6L703.5 451.6 704.5 445.3zM713.9 438.7L717.2 441.3 713.8 441.3zM697.6 424.8L704.2 423.7 701.5 427.8z"/>
<path fill="#66756f" stroke="#66756f" d="M740.9 497.9L742.7 492.5 744.4 496.9zM721.3 482.7L718.6 478.5 723.7 478.5zM733.2 493.9L737 493.2 737.2 496.1zM704.7 429.7L707.4 432 704.9 434.3z"/>
<path fill="#75847e" stroke="#75847e" d="M732.3 478.8L732.4 482.1 730.6 482.8zM717.2 441.3L713.9 438.7 719.2 437z"/>
<path fill="#c9d8d8" stroke="#c9d8d8" d="M729.4 474.7L732.3 478.8 726.7 478zM695.3 469.5L700 468.7 697.1 472.5zM693.6 477.4L693.2 472.8 697.1 472.5z"/>
<path fill="#697872" stroke="#697872" d="M723.4 460.8L725.5 454 725 461.4zM721 450.5L721 454.8 716.5 451.7zM713.5 472.4L718.6 478.5 711.3 479.7zM723.7 478.5L718.6 478.5 719.1 475.5zM730.8 441.2L734.9 443.4 732.2 444.9zM730.8 441.2L726.6 441.8 729.6 438.6zM715.4 429.5L713.3 433.6 709.4 427.6zM707.4 432L709.4 435.9 704.9 434.3z"/>
<path fill="#b4c6c9" stroke="#b4c6c9" d="M684 441.7L686.6 441.6 685.9 446.7zM688.6 461.7L685.4 464.2 686.2 460.1zM693.2 472.8L688.9 468.5 694.9 470.4zM685.5 460L683.2 454.2 689 455.3z"/>
<path fill="#bacccc" stroke="#bacccc" d="M686.6 441.6L689.4 444.7 685.9 446.7zM685.4 464.2L685.5 460 686.2 460.1z"/>
<path fill="#c3cfd2" stroke="#c3cfd2" d="M725.5 454L729.1 456.9 725 461.4zM745.9 525.3L743.6 521.5 746.9 519.7zM715 446.8L709.8 447.9 713.8 441.3zM696.1 453.9L692.3 453.7 695.3 452.1z"/>
<path fill="#dee7e4" stroke="#dee7e4" d="M730.4 447.2L726.2 451.9 723.2 445.6z"/>
<path fill="#2a4b4e" stroke="#2a4b4e" d="M611.6 568.8L607.9 565.5 616.9 564zM754.8 564.9L756.7 558.2 761.3 562z"/>
<path fill="#6c9399" stroke="#6c9399" d="M673.4 452.1L666 454.5 672.6 448.9zM657.2 463.9L663.9 466.7 659.3 472.9z"/>
<path fill="#606c66" stroke="#606c66" d="M682.3 501.3L686.3 500.6 685.4 502.6zM729.6 520.3L725.1 520.1 726.4 516.3zM695.3 495.5L690.4 492.8 697.3 494zM738.8 528.8L732.7 528.6 736 523.1z"/>
<path fill="#395454" stroke="#395454" d="M719.8 556.2L717.2 550.1 721.5 550.8zM719.8 556.2L721.2 564.3 713.4 563.1zM714.3 555.1L719.8 556.2 713.4 563.1zM717.2 550.1L717.3 541.4 721.5 550.8zM749.7 547.6L752.4 542.1 752.8 549.4zM711.5 545.5L717.3 541.4 717.2 550.1zM730.8 554.5L727.3 551.4 734.1 547.1z"/>
<path fill="#6c7872" stroke="#6c7872" d="M690.4 492.8L689.5 489.7 690.6 489.4zM689.5 489.7L688.6 487.1 690.6 489.4zM689.4 514.9L688.8 510.6 691.5 511.2z"/>
<path fill="#45605d" stroke="#45605d" d="M721.5 550.8L717.3 541.4 722.8 539.8zM724.4 528.8L725.2 523 730.1 528.5zM730.3 530.3L724.5 530.1 730.1 528.5zM728.9 540L726.5 535.6 730.1 533.7zM717.3 541.4L718.2 539.3 722.8 539.8zM732.7 528.6L735 535.7 730.1 533.7zM737.4 534.9L732.7 528.6 739.4 530.6zM746 534.7L743.8 532.2 747.5 530.8zM716.9 535.9L720.9 537.7 718.2 539.3zM740.2 533L737.4 534.9 739.4 530.6zM748.7 533.8L747.5 530.8 752.1 530.6zM749.7 547.6L746.3 541 752.4 542.1zM748 539.7L748.7 533.8 752.6 538.9zM746.3 541L748 539.7 752.4 542.1z"/>
<path fill="#334e51" stroke="#334e51" d="M721.2 564.3L714.2 566.7 713.4 563.1zM721.2 564.3L727.7 561 723.9 571.2z"/>
<path fill="#365151" stroke="#365151" d="M714.2 566.7L721.2 564.3 717 568.7zM746.3 554.7L738 553.8 743.6 549.5zM749.7 547.6L746.3 554.7 743.6 549.5zM727.7 561L730.8 554.5 734 562.6zM731.3 569.3L727.7 561 732.1 568.1z"/>
<path fill="#2d484b" stroke="#2d484b" d="M723.2 574.2L717 568.7 723.9 571.2z"/>
<path fill="#365454" stroke="#365454" d="M726 555.3L719.8 556.2 721.5 550.8zM738 553.8L746.3 554.7 744.3 561.4zM727.3 551.4L726 555.3 721.5 550.8zM709.7 548.4L711.5 545.5 717.2 550.1z"/>
<path fill="#304e4e" stroke="#304e4e" d="M746.3 570.9L739.2 564.3 744.3 561.4zM739.2 564.3L732.1 568.1 734 562.6z"/>
<path fill="#395757" stroke="#395757" d="M733.2 543.6L740.3 542.1 734.1 547.1zM743.6 549.5L738 553.8 734.1 547.1z"/>
<path fill="#486360" stroke="#486360" d="M734 538.8L728.9 540 730.1 533.7zM724.4 528.8L719.3 529.1 723.7 524.6zM726.9 541.1L726.5 535.6 728.9 540zM735 535.7L732.7 528.6 737.4 534.9zM722.1 532.3L717.5 534.5 719.3 529.1zM743.8 532.2L742.1 530.4 744.7 527.7zM738.8 528.8L742.1 530.4 739.4 530.6zM741.7 537L736.9 538.9 737.4 534.9zM716.9 535.9L718.2 539.3 715.1 539.3zM720.9 537.7L726.5 535.6 722.8 539.8zM720.9 537.7L722.1 532.3 726.5 535.6zM742.1 530.4L740.2 533 739.4 530.6zM748.7 533.8L752.1 530.6 754.2 532.7zM748.7 533.8L748 539.7 746 534.7zM748 539.7L743.6 538.8 746 534.7z"/>
<path fill="#425d5a" stroke="#425d5a" d="M733.2 543.6L728.9 540 734 538.8zM746.3 554.7L749.7 547.6 752.8 549.4zM719.3 529.1L717.8 524.5 723.7 524.6zM736.9 538.9L733.2 543.6 734 538.8zM735 535.7L734 538.8 730.1 533.7zM735 535.7L736.9 538.9 734 538.8zM726.9 541.1L728.9 540 733.2 543.6zM732.7 528.6L730.3 530.3 730.1 528.5zM736.9 538.9L741.7 537 740.3 542.1zM717.9 528.5L716.1 529 717.8 524.5zM718.2 539.3L720.9 537.7 722.8 539.8zM720.9 537.7L717.5 534.5 722.1 532.3zM741.7 537L740.2 533 743.8 532.2zM740.2 533L742.1 530.4 743.8 532.2z"/>
<path fill="#e4eae7" stroke="#e4eae7" d="M732.3 478.8L734 473 735.8 478.3zM748.5 448L752.7 450.4 749.1 451.1zM733.2 493.9L737.2 496.1 732.5 498.5z"/>
<path fill="#dbe4e1" stroke="#dbe4e1" d="M686 437.4L684 441.7 682.6 435.8z"/>
<path fill="#e7eaea" stroke="#e7eaea" d="M748.5 448L745 450.6 742.4 447.7z"/>
<path fill="#789fa2" stroke="#789fa2" d="M659.3 472.9L663.9 466.7 665.3 477.2z"/>
<path fill="#666f6c" stroke="#666f6c" d="M697.3 494L693.6 487.4 699.5 486.5z"/>
<path fill="#c0cfcf" stroke="#c0cfcf" d="M695.7 485.2L692.3 482.1 697.6 481.7zM693.6 477.4L693.3 479.2 689 478zM692.6 447.2L693.4 448.7 688.4 451zM692.3 453.7L689 455.3 688.4 451z"/>
<path fill="#456060" stroke="#456060" d="M711.5 545.5L715.1 539.3 717.3 541.4z"/>
<path fill="#4b6663" stroke="#4b6663" d="M724.5 530.1L724.4 528.8 730.1 528.5zM722.1 532.3L719.3 529.1 724.4 528.8zM722.1 532.3L724.5 530.1 726.9 534.5zM732.7 528.6L738.8 528.8 739.4 530.6zM732.7 528.6L730.1 528.5 730.7 524.4zM740.6 526.2L742.1 530.4 738.8 528.8zM716.1 529L713.2 525.6 717.8 524.5zM717.5 534.5L716.9 535.9 712.1 532.7z"/>
<path fill="#3c5a57" stroke="#3c5a57" d="M725.2 523L724.4 528.8 723.7 524.6zM726.5 535.6L726.9 534.5 730.1 533.7zM733.2 543.6L736.9 538.9 740.3 542.1zM715.1 539.3L718.2 539.3 717.3 541.4zM726.5 535.6L726.9 541.1 722.8 539.8zM747.5 530.8L743.8 532.2 744.7 527.7zM746 534.7L741.7 537 743.8 532.2zM746 534.7L743.6 538.8 741.7 537z"/>
<path fill="#3f5d5a" stroke="#3f5d5a" d="M726.9 534.5L730.3 530.3 730.1 533.7zM727.3 551.4L733.2 543.6 734.1 547.1zM722.1 532.3L724.4 528.8 724.5 530.1zM726.5 535.6L722.1 532.3 726.9 534.5zM716.9 535.9L715.1 539.3 712.1 532.7zM752.6 538.9L748.7 533.8 754.2 532.7z"/>
<path fill="#3f5a57" stroke="#3f5a57" d="M724.5 530.1L730.3 530.3 726.9 534.5zM738 553.8L730.8 554.5 734.1 547.1zM716.1 529L717.5 534.5 712.1 532.7zM717.5 534.5L716.1 529 719.3 529.1zM748 539.7L752.6 538.9 752.4 542.1z"/>
<path fill="#365154" stroke="#365154" d="M726 555.3L727.7 561 719.8 556.2z"/>
<path fill="#63726f" stroke="#63726f" d="M750.8 497.7L744.4 496.9 748.5 491.7zM725.3 482.4L730.6 482.8 729.8 487.2z"/>
<path fill="#bac9cc" stroke="#bac9cc" d="M695.1 460.2L693.7 465.4 692.8 460.7zM694.9 470.4L688.9 468.5 695.3 469.5zM693.3 479.2L692.3 482.1 689 478zM693.3 479.2L699.4 480.1 697.6 481.7zM692.3 453.7L696.1 453.9 692.5 455z"/>
<path fill="#5a6966" stroke="#5a6966" d="M730.6 482.8L725.3 482.4 726.7 478zM740.6 430.9L737.3 425.1 744 427.2z"/>
<path fill="#669093" stroke="#669093" d="M663.9 466.7L657.2 463.9 662.9 461.4z"/>
<path fill="#789c9f" stroke="#789c9f" d="M666 454.5L668.1 460.5 662.9 461.4zM654.2 471.3L654.1 465.8 659.3 472.9z"/>
<path fill="#425d5d" stroke="#425d5d" d="M726.9 541.1L721.5 550.8 722.8 539.8zM727.3 551.4L726.9 541.1 733.2 543.6zM746.3 541L749.7 547.6 743.6 549.5z"/>
<path fill="#3f5a5a" stroke="#3f5a5a" d="M726.9 541.1L727.3 551.4 721.5 550.8zM751.7 556L746.3 554.7 752.8 549.4zM727.3 551.4L730.8 554.5 726 555.3zM730.3 530.3L732.7 528.6 730.1 533.7zM740.2 533L741.7 537 737.4 534.9zM741.7 537L743.6 538.8 740.3 542.1z"/>
<path fill="#606f6c" stroke="#606f6c" d="M709.8 447.9L715 446.8 712.9 450zM740.1 488.6L737 493.2 737.1 488.2z"/>
<path fill="#c3d2d5" stroke="#c3d2d5" d="M692.5 455L696.1 453.9 695.1 460.2z"/>
<path fill="#6f7e7b" stroke="#6f7e7b" d="M704.2 423.7L704.7 429.7 701.5 427.8z"/>
<path fill="#75999f" stroke="#75999f" d="M673 459.5L666 454.5 673.4 452.1z"/>
<path fill="#7ea2a5" stroke="#7ea2a5" d="M673 459.5L668.1 460.5 666 454.5z"/>
<path fill="#42605d" stroke="#42605d" d="M719.3 529.1L717.9 528.5 717.8 524.5zM748.7 533.8L746 534.7 747.5 530.8z"/>
<path fill="#697875" stroke="#697875" d="M713.3 433.6L715.4 429.5 718.6 433.5zM733.2 493.9L728.2 490.8 729.8 487.2z"/>
<path fill="#486660" stroke="#486660" d="M716.1 529L717.9 528.5 719.3 529.1z"/>
<path fill="#7b999c" stroke="#7b999c" d="M689.9 440.1L695.4 442 689.4 444.7z"/>
<path fill="#7b9c9f" stroke="#7b9c9f" d="M689.4 444.7L695.4 442 692.6 447.2z"/>
<path fill="#667572" stroke="#667572" d="M713.9 438.7L709.4 435.9 713.3 433.6z"/>
<path fill="#395754" stroke="#395754" d="M743.6 538.8L748 539.7 746.3 541z"/>
<path fill="#63878a" stroke="#63878a" d="M701.7 446.8L697.1 446.6 697.5 443z"/>
<path fill="#7e9fa2" stroke="#7e9fa2" d="M697.1 446.6L693.4 448.7 692.6 447.2z"/>
<path fill="#698a90" stroke="#698a90" d="M693.4 448.7L697.1 446.6 695.3 452.1z"/>
<path fill="#6c8d90" stroke="#6c8d90" d="M695.4 442L697.1 446.6 692.6 447.2z"/>
<path fill="#87a5a5" stroke="#87a5a5" d="M697.1 446.6L695.4 442 697.5 443z"/>
<path fill="#6f9396" stroke="#6f9396" d="M695.3 452.1L697.1 446.6 700.2 452.4z"/>
<path fill="#6c8d93" stroke="#6c8d93" d="M697.1 446.6L701.7 446.8 700.2 452.4z"/>
</g>
<circle cx="603" cy="42.6" r="0.5" fill="#cfe8e6" opacity="0.6"/>
<circle cx="504" cy="51" r="0.7" fill="#cfe8e6" opacity="0.35"/>
<circle cx="388" cy="51" r="0.6" fill="#cfe8e6" opacity="0.6"/>
<circle cx="563" cy="59" r="0.6" fill="#cfe8e6" opacity="0.6"/>
<circle cx="436" cy="67" r="0.7" fill="#cfe8e6" opacity="0.35"/>
<circle cx="578" cy="69" r="0.7" fill="#cfe8e6" opacity="0.35"/>
<circle cx="543.5" cy="74.5" r="0.6" fill="#cfe8e6" opacity="0.45"/>
<circle cx="640" cy="117.5" r="0.7" fill="#cfe8e6" opacity="0.35"/>
<circle cx="471" cy="127" r="0.5" fill="#cfe8e6" opacity="0.6"/>
<circle cx="440.5" cy="134" r="0.6" fill="#cfe8e6" opacity="0.6"/>
<circle cx="557" cy="115" r="0.7" fill="#cfe8e6" opacity="0.45"/>
<circle cx="725" cy="117" r="0.6" fill="#cfe8e6" opacity="0.6"/>
<circle cx="422" cy="174" r="0.5" fill="#cfe8e6" opacity="0.35"/>
<circle cx="514" cy="177.5" r="0.7" fill="#cfe8e6" opacity="0.35"/>
<circle cx="368" cy="174" r="0.7" fill="#cfe8e6" opacity="0.45"/>
<circle cx="720" cy="183.6" r="0.7" fill="#cfe8e6" opacity="0.35"/>
<circle cx="651" cy="182" r="0.7" fill="#cfe8e6" opacity="0.35"/>
<circle cx="356" cy="158" r="0.5" fill="#cfe8e6" opacity="0.6"/>
<circle cx="731" cy="87" r="0.5" fill="#cfe8e6" opacity="0.45"/>
<circle cx="673" cy="95" r="0.5" fill="#cfe8e6" opacity="0.45"/>
<circle cx="490" cy="93" r="0.6" fill="#cfe8e6" opacity="0.6"/>
<circle cx="662" cy="46" r="0.7" fill="#cfe8e6" opacity="0.45"/>
<circle cx="407.5" cy="196" r="0.7" fill="#cfe8e6" opacity="0.45"/>
<circle cx="649" cy="300" r="0.6" fill="#cfe8e6" opacity="0.6"/>
<circle cx="672" cy="354" r="0.7" fill="#cfe8e6" opacity="0.45"/>
<circle cx="660" cy="365" r="0.5" fill="#cfe8e6" opacity="0.45"/>
<circle cx="726" cy="390" r="0.5" fill="#cfe8e6" opacity="0.35"/>
<circle cx="654" cy="258" r="0.5" fill="#cfe8e6" opacity="0.45"/>
<circle cx="640" cy="241" r="0.5" fill="#cfe8e6" opacity="0.45"/>
<circle cx="690" cy="440" r="0.7" fill="#cfe8e6" opacity="0.45"/>
<circle cx="700" cy="232" r="0.7" fill="#cfe8e6" opacity="0.45"/>
<circle cx="735" cy="330" r="0.6" fill="#cfe8e6" opacity="0.6"/>
<circle cx="665" cy="222" r="0.6" fill="#cfe8e6" opacity="0.6"/>
</svg>

<div id="panel">
<div class="ul"></div>
<svg width="22" height="22" viewBox="0 0 22 22" style="left:10px;top:7px"><circle cx="7.8" cy="3.8" r="1.1" fill="#232629"/><circle cx="5.4" cy="10.4" r="1.5" fill="#232629"/><circle cx="9.8" cy="16.8" r="2.1" fill="#232629"/><path d="M13.6 4.2l4.6 4.1-4.6 4.1" fill="none" stroke="#232629" stroke-width="2.6" stroke-linejoin="miter"/></svg>
<svg width="20" height="20" viewBox="0 0 28 28" style="left:57px;top:8px"><defs><linearGradient id="g1" x1="0" y1="0" x2="1" y2="1"><stop offset="0" stop-color="#3a3e43"/><stop offset=".5" stop-color="#2a2d31"/><stop offset="1" stop-color="#34383c"/></linearGradient></defs><rect x="0" y="0" width="28" height="28" fill="url(#g1)"/><rect x="3" y="9.2" width="22" height="1.6" fill="#5b6065"/><rect x="3" y="9.2" width="17" height="1.6" fill="#3daee9"/><circle cx="20" cy="10" r="2.1" fill="#fcfcfc"/><rect x="3" y="17.4" width="22" height="1.6" fill="#5b6065"/><rect x="3" y="17.4" width="7" height="1.6" fill="#3daee9"/><circle cx="10" cy="18.2" r="2.1" fill="#fcfcfc"/></svg>
<svg width="17" height="19" viewBox="0 0 24 27" style="left:102.5px;top:8.5px"><defs><linearGradient id="g2" x1="0" y1="0" x2="0" y2="1"><stop offset="0" stop-color="#21b4f5"/><stop offset="1" stop-color="#2b78ec"/></linearGradient></defs><path d="M7.5 8V5a4.5 4.5 0 0 1 9 0v3" fill="none" stroke="#3daee9" stroke-width="1"/><path d="M1.8 4.2h20.4l1.8 2.6H0z" fill="#1b5f8a"/><rect x="0" y="6.5" width="24" height="20.5" fill="url(#g2)"/><rect x="0" y="26" width="24" height="1" fill="#1d62c9"/><circle cx="7" cy="9" r=".9" fill="#fcfcfc"/><circle cx="17" cy="9" r=".9" fill="#fcfcfc"/><path d="M13.4 12.6l2.6 2.6-2.6 2.6" fill="none" stroke="#fcfcfc" stroke-width="1.7"/><circle cx="10.2" cy="12.2" r=".7" fill="#d6ecff"/><circle cx="8.2" cy="16.4" r=".9" fill="#d6ecff"/><circle cx="10.8" cy="20.6" r="1.2" fill="#d6ecff"/></svg>
<svg width="20" height="18.5" viewBox="0 0 30 28" style="left:145px;top:8.5px"><defs><linearGradient id="g3" x1="0" y1="0" x2="1" y2="1"><stop offset="0" stop-color="#55b9ea"/><stop offset="1" stop-color="#2c82b6"/></linearGradient></defs><path d="M0 0h13.5l2 2.5H30V27H0z" fill="#276d99"/><rect x="1.2" y="5.4" width="27.6" height="8" fill="#fcfcfc"/><path d="M0 11.2h10.5l2-1.9H30V28H0z" fill="url(#g3)"/><rect x="0" y="27" width="30" height="1" fill="#1f5f88"/></svg>
<svg width="19.8" height="21.8" viewBox="0 0 30 33" style="left:188px;top:7px"><defs><linearGradient id="g4" x1="0" y1="0.3" x2="1" y2="0.7"><stop offset="0" stop-color="#a5dd63"/><stop offset=".45" stop-color="#72bf2f"/><stop offset="1" stop-color="#5aa81c"/></linearGradient></defs><path d="M28 0.5C20 1.5 11 5 5 11.5C1.5 15.5 0.3 21 1 25C1.5 27.5 4 28.6 6.2 27.8C7 27.5 7.3 27 7.4 26.5C8 31 9.5 32.5 11 32.3C13 32 14.2 30.5 14.6 28.5C15.5 31.5 17.5 32.6 19.6 32.2C23 31.5 25.5 27 26.8 21C28 15.5 28.8 9.5 28.3 4.6C25 8 21 11 17 13.3C14.5 14.6 12.4 12 13.5 10C16.5 5 22 2.2 28 0.5Z" fill="url(#g4)" stroke="#38760f" stroke-width="1.5" stroke-linejoin="round"/><path d="M7.3 18.5V26.8M14.6 20.5V29" fill="none" stroke="#3f8214" stroke-width="1.1" stroke-linecap="round"/><path d="M22 3.6C14 6 7 10.5 3.6 17C2.2 20 2 23 2.6 25.4" fill="none" stroke="#c6ee93" stroke-width="1" opacity=".75" stroke-linecap="round"/><path d="M9 20.5V29.5M16.4 22V30" fill="none" stroke="#b6e67f" stroke-width="1" opacity=".6" stroke-linecap="round"/></svg>
</div>

<div id="menuwrap"><div id="menu">
<div id="side">
<div class="sep"></div>
<svg width="26" height="26" viewBox="0 0 26 26" style="left:7.800000000000001px;top:7.700000000000003px"><circle cx="13" cy="13" r="11.5" fill="none" stroke="#232629" stroke-width="1"/><path d="M17.2 5.7L8.8 13l8.4 7.3" fill="none" stroke="#232629" stroke-width="1"/></svg>
<svg width="26" height="26" viewBox="0 0 26 26" style="left:7.800000000000001px;top:49.900000000000006px"><path d="M7.78 2.75 A11.5 11.5 0 0 1 23.59 17.49 l-5.5 -4.6" fill="none" stroke="#232629" stroke-width="1"/><path d="M18.22 23.25 A11.5 11.5 0 0 1 2.41 8.51 l5.5 4.6" fill="none" stroke="#232629" stroke-width="1"/></svg>
<svg width="26" height="26" viewBox="0 0 26 26" style="left:7.800000000000001px;top:91.9px"><path d="M15.39 1.75 A11.5 11.5 0 1 1 7.60 2.85" fill="none" stroke="#232629" stroke-width="1"/><rect x="12" y="1.6" width="2" height="8" fill="#232629"/></svg>
<svg width="24" height="27" viewBox="0 0 24 27" style="left:9px;top:144.5px"><defs><linearGradient id="g5" x1="0" y1="0" x2="0" y2="1"><stop offset="0" stop-color="#21b4f5"/><stop offset="1" stop-color="#2b78ec"/></linearGradient></defs><path d="M7.5 8V5a4.5 4.5 0 0 1 9 0v3" fill="none" stroke="#3daee9" stroke-width="1"/><path d="M1.8 4.2h20.4l1.8 2.6H0z" fill="#1b5f8a"/><rect x="0" y="6.5" width="24" height="20.5" fill="url(#g5)"/><rect x="0" y="26" width="24" height="1" fill="#1d62c9"/><circle cx="7" cy="9" r=".9" fill="#fcfcfc"/><circle cx="17" cy="9" r=".9" fill="#fcfcfc"/><path d="M13.4 12.6l2.6 2.6-2.6 2.6" fill="none" stroke="#fcfcfc" stroke-width="1.7"/><circle cx="10.2" cy="12.2" r=".7" fill="#d6ecff"/><circle cx="8.2" cy="16.4" r=".9" fill="#d6ecff"/><circle cx="10.8" cy="20.6" r="1.2" fill="#d6ecff"/></svg>
<svg width="30" height="28" viewBox="0 0 30 28" style="left:6px;top:186px"><defs><linearGradient id="g6" x1="0" y1="0" x2="1" y2="1"><stop offset="0" stop-color="#55b9ea"/><stop offset="1" stop-color="#2c82b6"/></linearGradient></defs><path d="M0 0h13.5l2 2.5H30V27H0z" fill="#276d99"/><rect x="1.2" y="5.4" width="27.6" height="8" fill="#fcfcfc"/><path d="M0 11.2h10.5l2-1.9H30V28H0z" fill="url(#g6)"/><rect x="0" y="27" width="30" height="1" fill="#1f5f88"/></svg>
<svg width="28" height="28" viewBox="0 0 28 28" style="left:7px;top:228px;overflow:visible"><defs><linearGradient id="g7" x1="0" y1="0" x2="0" y2="1"><stop offset="0" stop-color="#f9c257"/><stop offset="1" stop-color="#f39a1c"/></linearGradient></defs><path d="M2 6.2L12.4 4V13H2z" fill="url(#g7)"/><rect x="12.3" y="0.8" width="15.4" height="22.4" rx=".8" fill="#c9a05e"/><rect x="12.3" y="0.8" width="15.4" height="2.4" fill="#ead9bb"/><rect x="12.3" y="3.2" width="15.4" height=".6" fill="#b0863f"/><rect x="14.2" y="-0.2" width=".9" height="3.8" fill="#a9a49a"/><rect x="17.9" y="-0.2" width=".9" height="3.8" fill="#5e6368"/><rect x="21" y="-0.2" width=".9" height="3.8" fill="#5e6368"/><rect x="24.8" y="-0.2" width=".9" height="3.8" fill="#a9a49a"/><circle cx="20" cy="7.2" r="2.2" fill="#f1dfc4"/><path d="M16.8 10.8q3.2-2.4 6.4 0z" fill="#e4c79a"/><rect x="0.1" y="10.8" width="27.2" height="16.8" rx=".8" fill="#f5f6f6"/><rect x="0.8" y="11.5" width="25.8" height="15.4" fill="none" stroke="#d2433f" stroke-width="1.4" stroke-dasharray="1.6 9.12"/><rect x="0.8" y="11.5" width="25.8" height="15.4" fill="none" stroke="#2f78d0" stroke-width="1.4" stroke-dasharray="1.6 9.12" stroke-dashoffset="5.36"/><rect x="21.8" y="14.2" width="2.2" height="2.8" rx=".4" fill="#1f9b76"/><rect x="3.6" y="14.4" width="4.6" height=".7" fill="#c4c6c8"/><rect x="3.6" y="15.8" width="3.6" height=".7" fill="#d4d6d8"/><rect x="11.4" y="17.4" width="4.6" height=".7" fill="#c4c6c8"/><rect x="11.4" y="19" width="3" height=".7" fill="#d4d6d8"/><rect x="11.4" y="20.5" width="6.4" height=".7" fill="#c4c6c8"/></svg>
<svg width="28" height="28" viewBox="0 0 28 28" style="left:7px;top:270px"><defs><linearGradient id="g8" x1="0" y1="0" x2="1" y2="1"><stop offset="0" stop-color="#3a3e43"/><stop offset=".5" stop-color="#2a2d31"/><stop offset="1" stop-color="#34383c"/></linearGradient></defs><rect x="0" y="0" width="28" height="28" fill="url(#g8)"/><rect x="3" y="9.2" width="22" height="1.6" fill="#5b6065"/><rect x="3" y="9.2" width="17" height="1.6" fill="#3daee9"/><circle cx="20" cy="10" r="2.1" fill="#fcfcfc"/><rect x="3" y="17.4" width="22" height="1.6" fill="#5b6065"/><rect x="3" y="17.4" width="7" height="1.6" fill="#3daee9"/><circle cx="10" cy="18.2" r="2.1" fill="#fcfcfc"/></svg>
<svg width="30" height="33" viewBox="0 0 30 33" style="left:4.5px;top:309.5px"><defs><linearGradient id="g9" x1="0" y1="0.3" x2="1" y2="0.7"><stop offset="0" stop-color="#a5dd63"/><stop offset=".45" stop-color="#72bf2f"/><stop offset="1" stop-color="#5aa81c"/></linearGradient></defs><path d="M28 0.5C20 1.5 11 5 5 11.5C1.5 15.5 0.3 21 1 25C1.5 27.5 4 28.6 6.2 27.8C7 27.5 7.3 27 7.4 26.5C8 31 9.5 32.5 11 32.3C13 32 14.2 30.5 14.6 28.5C15.5 31.5 17.5 32.6 19.6 32.2C23 31.5 25.5 27 26.8 21C28 15.5 28.8 9.5 28.3 4.6C25 8 21 11 17 13.3C14.5 14.6 12.4 12 13.5 10C16.5 5 22 2.2 28 0.5Z" fill="url(#g9)" stroke="#38760f" stroke-width="1.5" stroke-linejoin="round"/><path d="M7.3 18.5V26.8M14.6 20.5V29" fill="none" stroke="#3f8214" stroke-width="1.1" stroke-linecap="round"/><path d="M22 3.6C14 6 7 10.5 3.6 17C2.2 20 2 23 2.6 25.4" fill="none" stroke="#c6ee93" stroke-width="1" opacity=".75" stroke-linecap="round"/><path d="M9 20.5V29.5M16.4 22V30" fill="none" stroke="#b6e67f" stroke-width="1" opacity=".6" stroke-linecap="round"/></svg>
</div>
<div class="it" style="top:3px">最近使用したアプリケーション<svg width="7" height="10" viewBox="0 0 7 10"><path d="M1.1 0.8L5.6 5 1.1 9.2" fill="none" stroke="#858a8e" stroke-width="1"/></svg></div>
<div class="it" style="top:35px">最近使用したファイル<svg width="7" height="10" viewBox="0 0 7 10"><path d="M1.1 0.8L5.6 5 1.1 9.2" fill="none" stroke="#858a8e" stroke-width="1"/></svg></div>
<div class="it" style="top:79px">インターネット<svg width="7" height="10" viewBox="0 0 7 10"><path d="M1.1 0.8L5.6 5 1.1 9.2" fill="none" stroke="#858a8e" stroke-width="1"/></svg></div>
<div class="it" style="top:111px">オフィス<svg width="7" height="10" viewBox="0 0 7 10"><path d="M1.1 0.8L5.6 5 1.1 9.2" fill="none" stroke="#858a8e" stroke-width="1"/></svg></div>
<div class="it" style="top:143px">システム<svg width="7" height="10" viewBox="0 0 7 10"><path d="M1.1 0.8L5.6 5 1.1 9.2" fill="none" stroke="#858a8e" stroke-width="1"/></svg></div>
<div class="it" style="top:175px">ユーティリティ<svg width="7" height="10" viewBox="0 0 7 10"><path d="M1.1 0.8L5.6 5 1.1 9.2" fill="none" stroke="#858a8e" stroke-width="1"/></svg></div>
<div class="it sel" style="top:207px">開発<svg width="7" height="10" viewBox="0 0 7 10"><path d="M1.1 0.8L5.6 5 1.1 9.2" fill="none" stroke="#2a2e32" stroke-width="1"/></svg></div>
<div class="it" style="top:239px">教育<svg width="7" height="10" viewBox="0 0 7 10"><path d="M1.1 0.8L5.6 5 1.1 9.2" fill="none" stroke="#858a8e" stroke-width="1"/></svg></div>
<div class="it" style="top:271px">設定<svg width="7" height="10" viewBox="0 0 7 10"><path d="M1.1 0.8L5.6 5 1.1 9.2" fill="none" stroke="#858a8e" stroke-width="1"/></svg></div>
<div class="it" style="top:303px">グラフィックス<svg width="7" height="10" viewBox="0 0 7 10"><path d="M1.1 0.8L5.6 5 1.1 9.2" fill="none" stroke="#858a8e" stroke-width="1"/></svg></div>
<div class="it" style="top:335px">ゲーム<svg width="7" height="10" viewBox="0 0 7 10"><path d="M1.1 0.8L5.6 5 1.1 9.2" fill="none" stroke="#858a8e" stroke-width="1"/></svg></div>
<div class="it" style="top:367px">マルチメディア<svg width="7" height="10" viewBox="0 0 7 10"><path d="M1.1 0.8L5.6 5 1.1 9.2" fill="none" stroke="#858a8e" stroke-width="1"/></svg></div>
<div class="it" style="top:399px">ヘルプ</div>
<div class="it" style="top:431px">電源<span class="sl">/</span>セッション<svg width="7" height="10" viewBox="0 0 7 10"><path d="M1.1 0.8L5.6 5 1.1 9.2" fill="none" stroke="#858a8e" stroke-width="1"/></svg></div>
<div class="hsep"></div>
<div id="search"><svg width="16" height="16" viewBox="0 0 16 16"><circle cx="6.5" cy="6.5" r="4.5" fill="none" stroke="#7f8c8d" stroke-width="1"/><path d="M10 10l4 4" stroke="#7f8c8d" stroke-width="1.2"/></svg><span>検索<i>...</i></span></div>
</div></div>

<div id="sub">
<div class="si" style="top:4px"><svg width="16" height="16" viewBox="0 0 16 16" style=""><rect x="2.55" y="2.55" width="11.4" height="11.4" fill="none" stroke="#33383d" stroke-width=".9"/><path d="M4.5 5.2l2 1.7-2 1.7" fill="none" stroke="#33383d" stroke-width=".85"/><rect x="7.3" y="7.9" width="3" height=".85" fill="#33383d"/></svg><span class="t">Akonadi Console</span></div>
<div class="si sel" style="top:36px"><svg width="16" height="16" viewBox="0 0 16 16" style=""><rect x="1" y="1" width="14" height="14" rx="1.6" fill="#2f3c49"/><rect x="1" y="13.6" width="14" height="1.4" rx=".7" fill="#222c36"/><path d="M11 3.9L4.7 10.5M11 12.1L4.7 5.5" fill="none" stroke="#2490ea" stroke-width="1.4"/><path d="M11 3.4V12.6" stroke="#2f9cf2" stroke-width="1.5"/></svg><span class="t">Code - OSS</span></div>
<div class="si" style="top:68px"><svg width="16" height="16" viewBox="0 0 16 16" style=""><ellipse cx="8" cy="8" rx="5.6" ry="5.8" fill="#f9b233"/><path d="M2.2 10.5q-.8 2.600000000000001 1 2.800000000000001q.6 1.6 2 .7q1 1.4 2.2 .4q1.2 1 2.200000000000001-.4q1.400000000000001.9 2-.7q1.8-.2 1-2.800000000000001z" fill="#f9b233"/><circle cx="2.6" cy="7.4" r="1.3" fill="#b7a6d6"/><circle cx="13.4" cy="7.4" r="1.3" fill="#b7a6d6"/><circle cx="2.3" cy="7.2" r=".6" fill="#5b4a7a"/><circle cx="13.7" cy="7.2" r=".6" fill="#5b4a7a"/><circle cx="6.4" cy="3.8" r=".8" fill="#b0379f"/><circle cx="8.6" cy="3.4" r=".8" fill="#b0379f"/><circle cx="10" cy="5" r=".7" fill="#b0379f"/><circle cx="7.6" cy="5.4" r=".8" fill="#b0379f"/><circle cx="9" cy="7" r=".7" fill="#b0379f"/><circle cx="6.2" cy="6.6" r=".6" fill="#b0379f"/></svg><span class="t">Cuttlefish</span></div>
<div class="si" style="top:100px"><svg width="16" height="16" viewBox="0 0 16 16" style=""><defs><linearGradient id="g10" x1="0" y1="0" x2=".6" y2="1"><stop offset="0" stop-color="#e6283c"/><stop offset="1" stop-color="#f8701c"/></linearGradient><linearGradient id="g11" x1="1" y1="0" x2=".3" y2="1"><stop offset="0" stop-color="#34d17e"/><stop offset="1" stop-color="#bfe03a"/></linearGradient></defs><path d="M8 .9l6.5 3.4v7.400000000000001L8 15.3 1.5 11.7V4.3z" fill="#f4f6f7"/><path d="M8 1.6l5.8 3L8 7.8 2.2 4.6z" fill="#84b7f2"/><path d="M2.1 5.2L7.700000000000001 8.3v6.2L2.1 11.4z" fill="url(#g10)"/><path d="M13.9 5.2L8.3 8.3v6.2l5.6-3.1z" fill="url(#g11)"/></svg><span class="t">GTK Demo</span></div>
<div class="si" style="top:132px"><svg width="16" height="16" viewBox="0 0 16 16" style=""><rect x="1" y="1.5" width="14" height="13.5" rx="1.4" fill="#9a633a"/><rect x="1" y="1.5" width="1.5" height="13.5" rx=".7" fill="#7b4e2e"/><rect x="1" y="13.8" width="14" height="1.2" rx=".6" fill="#7b4e2e"/><path d="M4.4 4.2l1.800000000000001 1.8M6.2 4.2L4.4 6" stroke="#f1dfcf" stroke-width=".8"/><circle cx="10.8" cy="5" r="1.2" fill="none" stroke="#f1dfcf" stroke-width=".8"/><path d="M6.4 8.6v2.200000000000001q0 .8-.8 .8h-1.2" fill="none" stroke="#fbf3ea" stroke-width="1"/><path d="M9.4 9.6h1l1.200000000000001-1v3.2l-1.2-1h-1z" fill="#fbf3ea"/><path d="M12.6 9.2v2.2" stroke="#fbf3ea" stroke-width=".6"/></svg><span class="t">Icon Browser</span></div>
<div class="si" style="top:164px"><svg width="16" height="16" viewBox="0 0 16 16" style=""><rect x="2" y="2.2" width="12" height="2.4" fill="#232629"/><rect x="2" y="2.2" width="1.2" height="11.2" fill="#232629"/><rect x="2" y="12.2" width="6" height="1.2" fill="#232629"/><rect x="12.9" y="2.2" width="1.1" height="6" fill="#232629"/><rect x="8.2" y="10.5" width="4" height="1.6" fill="#232629"/><path d="M11.2 8.3l3.2 3-3.2 3z" fill="#232629"/></svg><span class="t">KDebugSettings</span></div>
<div class="si" style="top:196px"><svg width="16" height="16" viewBox="0 0 16 16" style=""><rect x="5" y="1.6" width="6" height="6" rx="1.6" fill="#43d17a"/><rect x="1.4" y="8.4" width="6" height="6" rx="1.6" fill="#d572dd"/><rect x="8.6" y="8.4" width="6" height="6" rx="1.6" fill="#f89a3c"/></svg><span class="t">Node Editor</span></div>
<div class="si" style="top:228px"><svg width="16" height="16" viewBox="0 0 16 16" style=""><circle cx="5.6" cy="2.9" r=".8" fill="#232629"/><circle cx="3.4" cy="7.6" r="1" fill="#232629"/><circle cx="6.8" cy="12.4" r="1.5" fill="#232629"/><path d="M9.6 3.6l3 2.9-3 2.9" fill="none" stroke="#232629" stroke-width="1.9"/></svg><span class="t">Plasma Engine Explorer</span></div>
<div class="si" style="top:260px"><svg width="16" height="16" viewBox="0 0 16 16" style=""><rect x="0" y="1" width="16" height="13.5" fill="#fdfdfd"/><rect x="0" y="13.9" width="16" height=".7" fill="#c3c9cd"/><rect x="0" y="0.9" width="16" height="1.9" fill="#48535e"/><rect x="0" y="2.8" width="16" height="1.2" fill="#6cbcec"/><path d="M7.3 10L11.2 5.9" stroke="#3a3f44" stroke-width="1.7" stroke-linecap="round"/><path d="M5 12.4l2.200000000000001-.7-1.4-1.4z" fill="#3a3f44"/></svg><span class="t">Plasma Global Theme Explorer</span></div>
<div class="si" style="top:292px"><svg width="16" height="16" viewBox="0 0 16 16" style=""><rect x="0" y="1" width="16" height="13.5" fill="#fdfdfd"/><rect x="0" y="13.9" width="16" height=".7" fill="#c3c9cd"/><rect x="0" y="0.9" width="16" height="1.9" fill="#48535e"/><rect x="0" y="2.8" width="16" height="1.2" fill="#6cbcec"/><path d="M7.3 10L11.2 5.9" stroke="#3a3f44" stroke-width="1.7" stroke-linecap="round"/><path d="M5 12.4l2.200000000000001-.7-1.4-1.4z" fill="#3a3f44"/></svg><span class="t">Plasma Theme Explorer</span></div>
<div class="si" style="top:324px"><svg width="16" height="16" viewBox="0 0 16 16" style=""><rect x="0.8" y="0.8" width="14.4" height="14.4" fill="#e9e5e1" stroke="#050505" stroke-width="1.6"/><rect x="2.6" y="3" width="10.8" height="8.6" fill="#f6f4f2" stroke="#d5d0ca" stroke-width=".6"/><rect x="5" y="5.4" width="5.6" height="5.2" fill="#ffffff"/><rect x="2.6" y="12" width="10.8" height="1.8" fill="#aaa6a3"/><path d="M6.2 10.2L10.2 6.1" stroke="#f7861b" stroke-width="2.2"/><path d="M9.6 6.7L15 1.2" stroke="#1f6fe0" stroke-width="2.4"/><circle cx="5.6" cy="10.9" r="1" fill="#1f6fe0"/></svg><span class="t">Print Editor</span></div>
<div class="si" style="top:356px"><svg width="16" height="16" viewBox="0 0 16 16" style=""><path d="M3.2 2.8H15V10.5L12.7 12.9H1V5.1z" fill="#4dd05f"/><path d="M1 5.1L15 10.5 12.7 12.9H1z" fill="#27b343"/><text x="8" y="10.7" font-family="Liberation Sans,sans-serif" font-weight="700" font-size="7.4" text-anchor="middle" fill="#fff">A</text></svg><span class="t">Qt 5 Assistant</span></div>
<div class="si" style="top:388px"><svg width="16" height="16" viewBox="0 0 16 16" style=""><path d="M3.2 2.8H15V10.5L12.7 12.9H1V5.1z" fill="#4dd05f"/><path d="M1 5.1L15 10.5 12.7 12.9H1z" fill="#27b343"/><text x="8" y="10.7" font-family="Liberation Sans,sans-serif" font-weight="700" font-size="7.4" text-anchor="middle" fill="#fff">D</text></svg><span class="t">Qt 5 Designer</span></div>
<div class="si" style="top:420px"><svg width="16" height="16" viewBox="0 0 16 16" style=""><circle cx="6.5" cy="6.4" r="4.1" fill="none" stroke="#2a2e32" stroke-width="1.1"/><path d="M9.5 9.4l4.6 4.6" stroke="#2a2e32" stroke-width="1.25"/></svg><span class="t">UserFeedback Console</span></div>
<div class="si" style="top:452px"><svg width="16" height="16" viewBox="0 0 16 16" style=""><rect x="1.8" y="1.4" width="12.6" height="12.6" rx="1.6" fill="#fbfbfb"/><path d="M1.8 10.4h12.600000000000001v2a1.6 1.6 0 0 1-1.6 1.6H3.4a1.6 1.6 0 0 1-1.6-1.6z" fill="#3584e4"/><rect x="5.6" y="11.8" width="5" height=".9" fill="#dbe9fb"/><rect x="3.4" y="3.6" width="7.6" height=".7" fill="#d4d4d4"/><rect x="3.4" y="7.2" width="5.4" height=".7" fill="#d0d0d0"/><circle cx="12.2" cy="7.6" r=".8" fill="#666"/><rect x="9.6" y="7.2" width="2" height=".7" fill="#888"/><path d="M11.6 2.8l1.4 1.4M13 2.8l-1.4 1.4" stroke="#999" stroke-width=".5"/></svg><span class="t">Widget Factory</span></div>
<div class="si" style="top:484px"><svg width="16" height="16" viewBox="0 0 16 16" style=""><rect x="1" y="3.2" width="14.2" height="11.2" fill="#3b7fe2"/><rect x="2.4" y="4.6" width="11.4" height=".9" fill="#7fb0f0"/><rect x="2.6" y="6.6" width="3" height="4" fill="none" stroke="#7fb0f0" stroke-width=".6"/><rect x="6.6" y="6.6" width="4" height="2.4" fill="none" stroke="#7fb0f0" stroke-width=".6"/><path d="M15.2 6.4v8H1.2z" fill="#f5d22c"/><path d="M13.6 10v2.9H8.6z" fill="#4a86de"/></svg><span class="t">Glade</span></div>
<div class="si" style="top:516px"><svg width="16" height="16" viewBox="0 0 16 16" style=""><defs><linearGradient id="g12" x1="0.1" y1="0.1" x2=".9" y2=".9"><stop offset="0" stop-color="#12b8f9"/><stop offset="1" stop-color="#2b76f5"/></linearGradient></defs><circle cx="8" cy="7.9" r="7.2" fill="url(#g12)"/><g stroke="#eef4f8" stroke-linecap="round" fill="none"><path d="M11.8 4.3L4.8 7.6" stroke-width="1.5"/><path d="M7.6 7L12.5 10.400000000000001" stroke-width="1.4"/><path d="M8.6 8.4L9.3 12.4" stroke-width="1.3"/><path d="M5.2 3.8L7.8 4" stroke-width="1.4"/></g><path d="M7.6 3.6L8.6 5.4 7 5z" fill="#e4ebf0"/></svg><span class="t">Kate</span></div>
</div>
</body>
</html>
